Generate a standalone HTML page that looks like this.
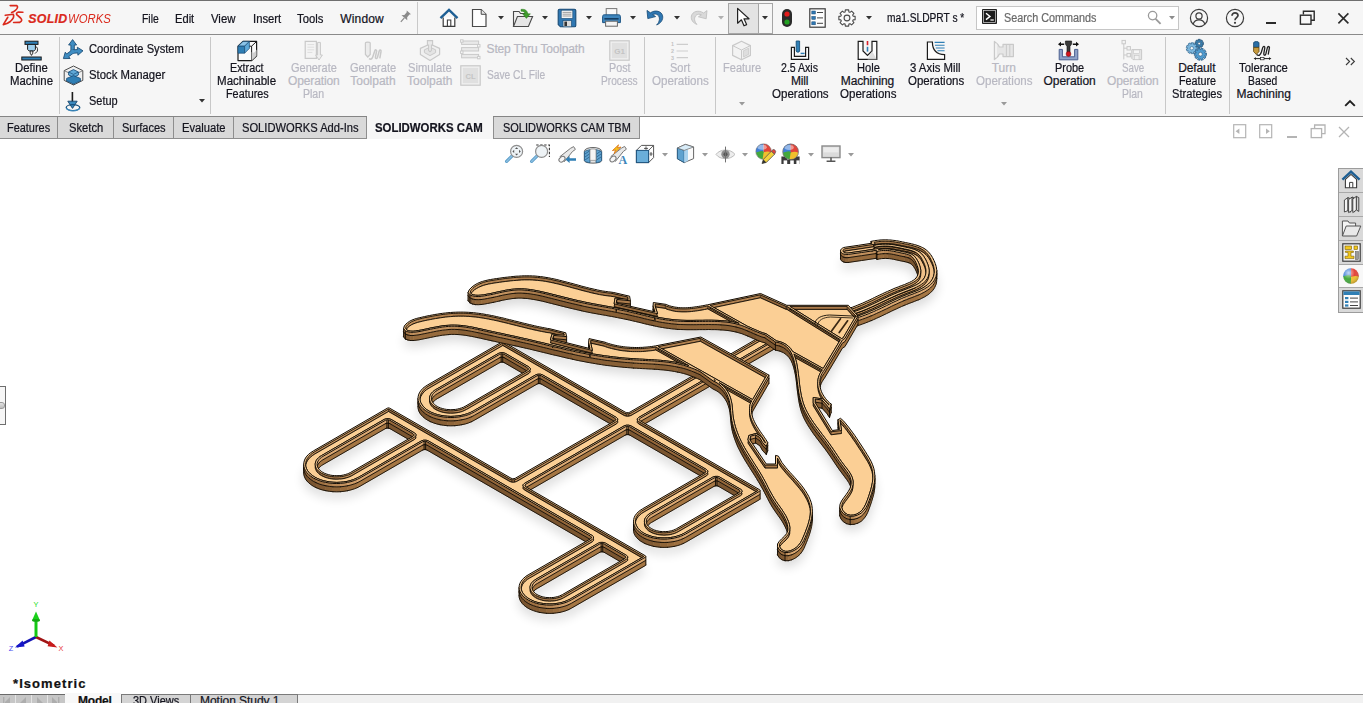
<!DOCTYPE html>
<html><head><meta charset="utf-8"><title>SOLIDWORKS</title><style>
html,body{margin:0;padding:0}
body{width:1363px;height:703px;overflow:hidden;background:#fff;position:relative;font-family:"Liberation Sans",sans-serif}
.a,.t,.vs,.tab{position:absolute}
.t{white-space:nowrap;line-height:1;display:block;-webkit-text-stroke:.22px currentColor}
.vs{width:1px}
svg{display:block;overflow:visible}
#title{position:absolute;left:0;top:0;width:1363px;height:34px;background:#f6f6f6;border-top:1px solid #6f6f6f;box-sizing:border-box}
#ribbon{position:absolute;left:0;top:34px;width:1363px;height:83px;background:#f6f6f6;border-top:1px solid #8a8a8a;border-bottom:1px solid #858585;box-sizing:border-box}
.tab{top:117px;height:21px;background:#d9d9d9;border-right:1px solid #8e8e8e;border-bottom:1px solid #8e8e8e;box-sizing:content-box}
#model{position:absolute;left:0;top:0}
</style></head>
<body>
<svg id="model" width="1363" height="703" viewBox="0 0 1363 703"><defs><filter id="blur" x="-20%" y="-20%" width="140%" height="140%"><feGaussianBlur stdDeviation="6"/></filter></defs>
<path d="M388.9 421.9L389.7 422.2L511.0 492.2L512.5 492.7L514.0 492.7L515.4 492.2L614.9 434.8L615.8 433.9L615.8 433.1L614.9 432.2L541.4 389.8L539.9 389.3L538.4 389.3L537.0 389.8L474.4 425.9L471.5 427.4L468.6 428.6L465.5 429.6L461.8 430.4L458.4 431.0L454.8 431.4L450.9 431.5L447.3 431.4L443.7 431.0L440.0 430.4L436.7 429.6L433.5 428.6L430.3 427.3L427.7 425.9L425.3 424.4L423.0 422.5L421.2 420.6L419.8 418.7L418.8 416.7L418.2 414.5L418.0 412.4L418.2 410.3L418.8 408.1L419.8 406.1L421.2 404.2L423.0 402.2L425.2 400.5L427.7 398.9L501.6 356.2L502.4 355.9L503.3 355.9L504.0 356.2L625.3 426.2L626.8 426.7L628.3 426.7L629.8 426.2L700.1 385.6L700.0 385.5L697.3 384.3L694.5 383.1L691.7 382.0L689.0 381.0L686.1 380.0L683.3 379.2L680.5 378.5L677.6 377.9L674.7 377.3L671.8 376.8L668.9 376.4L666.0 376.0L663.1 375.7L660.2 375.5L657.2 375.2L654.3 375.0L651.3 374.8L648.4 374.7L645.4 374.5L642.5 374.4L639.5 374.2L636.6 374.0L633.6 373.9L630.7 373.6L627.7 373.4L624.8 373.2L621.9 372.9L618.9 372.6L616.0 372.3L613.1 372.0L610.2 371.6L607.2 371.3L604.3 370.9L601.4 370.4L598.5 370.0L595.6 369.5L592.7 369.0L589.8 368.5L586.9 368.0L584.0 367.4L581.1 366.9L578.2 366.3L575.3 365.7L572.5 365.0L569.6 364.4L566.7 363.8L563.8 363.1L560.9 362.4L558.1 361.7L555.2 361.1L552.3 360.4L549.4 359.7L546.6 359.0L543.7 358.3L540.8 357.6L538.0 356.9L535.1 356.2L532.2 355.5L529.4 354.8L526.5 354.2L523.6 353.5L520.7 352.9L517.9 352.2L515.0 351.6L512.1 351.0L509.2 350.3L506.3 349.7L503.5 349.1L500.6 348.5L497.7 347.9L494.8 347.2L491.9 346.6L489.1 346.0L486.2 345.3L483.3 344.7L480.4 344.0L477.5 343.4L474.6 342.8L471.7 342.2L468.8 341.7L465.9 341.2L463.0 340.8L460.1 340.5L457.2 340.3L454.3 340.2L451.3 340.2L448.4 340.4L445.5 340.7L442.5 341.0L439.6 341.5L436.6 342.0L433.6 342.6L430.7 343.2L427.8 343.8L424.8 344.4L421.9 345.0L419.0 345.6L416.1 346.0L413.2 346.3L410.5 346.3L407.9 345.8L405.4 344.9L403.6 342.6L404.3 340.0L405.9 338.1L407.7 336.6L409.7 335.2L411.9 334.1L414.2 333.2L416.7 332.4L419.2 331.8L421.8 331.2L424.4 330.6L427.0 330.0L429.6 329.5L432.2 329.0L434.8 328.5L437.4 328.1L440.0 327.7L442.6 327.3L445.3 327.0L447.9 326.7L450.5 326.5L453.1 326.3L455.7 326.2L458.2 326.1L460.8 326.1L463.4 326.1L466.0 326.2L468.6 326.3L471.1 326.5L473.7 326.7L476.3 327.0L478.8 327.3L481.4 327.7L484.0 328.1L486.5 328.6L489.1 329.0L491.6 329.5L494.1 330.0L496.7 330.6L499.2 331.2L501.8 331.7L504.3 332.3L506.8 333.0L509.4 333.6L511.9 334.2L514.5 334.9L517.0 335.5L519.5 336.1L522.1 336.8L524.6 337.4L527.1 338.0L529.7 338.6L532.2 339.2L534.7 339.8L537.3 340.4L539.8 340.9L542.3 341.4L544.9 341.9L547.4 342.4L550.0 342.8L565.8 346.8L566.6 350.6L553.6 349.4L552.6 353.2L590.0 362.6L588.6 356.5L589.0 352.6L605.0 356.2L606.8 356.9L608.6 357.5L610.4 358.0L612.2 358.5L614.0 359.0L615.9 359.4L617.7 359.8L619.6 360.1L621.5 360.4L623.3 360.7L625.2 360.9L627.1 361.1L629.0 361.2L630.9 361.4L632.8 361.4L634.7 361.5L636.6 361.5L638.5 361.5L640.4 361.4L642.2 361.4L644.1 361.2L646.0 361.1L647.9 360.9L649.8 360.7L651.7 360.5L653.5 360.2L655.4 359.9L700.8 351.0L730.9 367.8L764.4 348.5L761.9 347.8L759.0 346.7L756.1 345.5L753.3 344.3L750.4 343.0L747.6 341.8L744.7 340.6L741.9 339.5L738.9 338.6L736.0 337.8L733.0 337.2L730.0 336.6L727.0 336.2L724.0 335.9L720.9 335.7L717.8 335.5L714.8 335.4L711.7 335.4L708.6 335.3L705.5 335.4L702.4 335.4L699.3 335.4L696.3 335.5L693.2 335.5L690.1 335.5L687.0 335.5L683.9 335.4L680.8 335.3L677.7 335.2L674.7 334.9L671.6 334.6L668.6 334.2L665.6 333.8L662.5 333.3L659.5 332.8L656.5 332.2L653.5 331.5L650.5 330.9L647.5 330.2L644.5 329.5L641.5 328.7L638.5 328.0L635.5 327.3L632.5 326.6L629.5 325.9L626.5 325.2L623.4 324.6L620.4 324.0L617.4 323.4L614.4 322.8L611.4 322.2L608.3 321.7L605.3 321.1L602.3 320.6L599.3 320.1L596.2 319.5L593.2 319.0L590.2 318.4L587.2 317.8L584.2 317.2L581.2 316.5L578.2 315.8L575.2 315.1L572.2 314.4L569.2 313.7L566.2 313.0L563.2 312.2L560.2 311.5L557.2 310.7L554.2 310.0L551.3 309.2L548.3 308.5L545.3 307.7L542.3 307.0L539.2 306.3L536.2 305.7L533.2 305.2L530.2 304.7L527.2 304.3L524.1 304.1L521.1 303.9L518.1 303.9L515.0 304.1L512.0 304.4L508.9 304.9L505.9 305.4L502.8 306.0L499.8 306.7L496.7 307.4L493.6 308.1L490.5 308.7L487.4 309.3L484.3 309.9L481.2 310.3L478.2 310.5L475.2 310.4L472.4 309.8L469.9 308.7L468.1 306.5L469.2 303.9L471.0 301.9L473.0 300.2L475.1 298.7L477.5 297.4L479.9 296.3L482.5 295.4L485.1 294.7L487.9 294.0L490.6 293.5L493.5 293.0L496.3 292.6L499.1 292.2L502.0 291.8L504.8 291.4L507.6 291.1L510.4 290.8L513.1 290.5L515.9 290.2L518.7 290.1L521.4 289.9L524.2 289.8L526.9 289.8L529.7 289.8L532.4 289.9L535.1 290.0L537.8 290.3L540.6 290.6L543.3 290.9L546.0 291.4L548.7 291.8L551.4 292.4L554.1 292.9L556.8 293.5L559.5 294.2L562.2 294.9L564.9 295.6L567.6 296.3L570.3 297.0L573.1 297.7L575.8 298.5L578.5 299.2L581.2 300.0L583.9 300.7L586.6 301.4L589.3 302.1L592.0 302.7L594.7 303.3L597.4 303.9L600.1 304.5L602.8 305.0L605.5 305.4L608.3 305.8L611.0 306.1L613.8 306.5L629.6 310.2L630.4 314.8L616.8 313.4L616.2 317.1L655.0 325.9L653.1 320.0L653.3 316.5L666.2 318.4L667.9 319.2L669.6 319.8L671.3 320.3L673.1 320.7L674.9 321.1L676.7 321.3L678.5 321.6L680.3 321.7L682.1 321.8L683.9 321.8L685.8 321.8L687.6 321.7L689.4 321.5L691.3 321.4L693.1 321.2L694.9 320.9L696.8 320.7L698.6 320.4L700.4 320.1L702.2 319.8L704.0 319.5L705.7 319.1L707.5 318.8L760.6 307.5L786.8 319.3L848.3 319.3L850.6 321.8L852.7 321.1L855.2 320.1L857.7 319.1L860.2 318.1L862.6 317.1L865.0 316.0L867.4 314.9L869.9 313.8L872.3 312.6L874.7 311.4L877.2 310.2L877.2 310.2L879.7 309.0L879.8 309.0L882.3 307.8L882.3 307.8L884.8 306.6L884.9 306.6L887.5 305.4L887.6 305.4L890.2 304.2L890.3 304.2L893.0 303.0L893.1 302.9L895.8 301.8L896.0 301.8L898.8 300.7L898.9 300.6L901.8 299.5L904.6 298.5L907.1 297.4L909.5 296.4L911.5 295.4L913.3 294.3L914.8 293.2L916.0 292.0L917.0 290.5L917.8 288.8L918.3 286.8L918.4 284.5L918.0 282.1L917.2 279.6L916.2 277.1L915.0 274.7L913.7 272.7L912.4 271.1L911.2 270.1L910.0 269.3L908.6 268.7L906.8 268.2L904.6 267.6L901.9 267.1L899.1 266.5L899.0 266.4L896.3 265.9L893.7 265.3L891.4 264.9L889.3 264.6L887.3 264.5L885.3 264.4L883.4 264.5L881.5 264.6L879.5 264.9L877.0 265.4L876.3 264.3L861.7 266.5L861.6 266.5L848.6 268.4L846.9 268.5L845.2 268.4L843.7 268.0L842.3 267.4L841.3 266.6L840.7 265.7L840.5 264.7L840.8 263.8L841.4 262.9L842.5 262.1L843.8 261.5L845.4 261.2L858.4 259.3L872.0 257.2L871.0 255.4L873.8 254.8L874.6 254.7L877.4 254.3L878.3 254.2L881.1 253.9L882.0 253.9L884.9 253.8L885.8 253.8L888.6 253.9L889.5 253.9L892.3 254.2L893.1 254.3L895.9 254.6L896.5 254.7L899.3 255.2L899.6 255.3L902.4 255.9L902.6 255.9L905.4 256.5L908.2 257.1L908.3 257.1L911.1 257.7L911.5 257.8L914.4 258.5L915.2 258.7L917.9 259.6L919.0 260.0L921.5 261.1L922.7 261.6L925.0 263.0L926.1 263.8L928.1 265.6L928.8 266.2L930.5 268.4L930.9 268.9L932.4 271.3L932.6 271.6L933.9 274.3L934.0 274.5L935.2 277.3L935.3 277.6L936.2 280.5L936.3 280.9L936.7 283.8L936.8 284.4L936.6 287.3L936.6 287.9L936.0 290.5L935.7 291.2L934.6 293.6L934.3 294.2L932.8 296.3L932.2 297.0L930.4 298.8L929.7 299.4L927.6 301.0L926.9 301.4L924.5 302.9L923.9 303.2L921.3 304.5L920.8 304.8L918.1 306.0L917.7 306.1L914.9 307.2L914.7 307.3L911.9 308.4L909.1 309.4L906.5 310.5L903.9 311.5L901.4 312.6L898.9 313.7L896.4 314.9L893.9 316.0L891.4 317.2L889.0 318.4L886.5 319.6L886.5 319.6L884.0 320.8L884.0 320.8L881.5 322.0L881.5 322.0L879.0 323.2L878.9 323.2L876.4 324.3L876.3 324.4L873.8 325.5L873.6 325.6L871.1 326.7L870.9 326.7L868.3 327.8L868.1 327.9L865.5 328.9L865.3 329.0L862.5 330.0L862.3 330.1L859.5 331.1L856.8 332.0L844.9 352.4L842.3 354.1L824.4 384.0L823.1 385.8L822.0 387.6L821.1 389.5L820.4 391.5L820.0 393.4L819.8 395.4L819.7 397.4L819.9 399.4L820.2 401.3L820.7 403.3L821.3 405.2L822.1 407.1L823.1 408.9L824.2 410.6L825.4 412.3L826.7 413.9L828.1 415.4L829.6 416.8L831.2 418.1L829.5 423.2L826.6 419.0L822.0 414.0L815.2 413.0L815.2 416.6L832.3 444.5L839.4 443.6L838.0 433.7L840.5 432.3L843.7 435.1L846.1 438.0L848.5 441.0L850.7 443.9L852.9 446.9L855.0 449.8L857.0 452.8L859.0 455.9L861.1 459.0L863.1 462.1L865.2 465.3L867.2 468.6L869.2 471.9L871.1 475.3L872.6 478.8L873.8 482.3L874.5 485.8L874.8 489.3L874.8 492.9L874.4 496.5L873.7 500.1L872.7 503.7L871.6 507.3L870.4 511.0L869.1 514.6L867.7 518.2L866.0 521.6L863.8 524.6L861.1 527.2L857.7 529.0L854.0 530.1L850.2 530.4L846.6 529.5L843.4 527.6L841.0 524.8L839.7 521.5L840.0 518.3L841.5 515.0L843.7 511.8L846.1 508.6L848.4 505.3L850.2 502.0L851.1 498.5L851.2 495.1L850.4 491.7L848.8 488.4L846.6 485.2L844.2 482.0L841.8 478.8L839.5 475.7L837.4 472.7L835.3 469.6L833.3 466.6L831.3 463.6L829.3 460.7L827.2 457.7L825.0 454.7L822.7 451.7L820.4 448.7L818.1 445.7L815.8 442.7L813.5 439.6L811.4 436.5L809.3 433.3L807.3 430.1L805.5 426.9L803.8 423.6L802.4 420.2L801.2 416.8L800.2 413.3L799.4 409.7L798.7 406.1L798.2 402.5L797.7 398.8L797.2 395.1L796.8 391.3L796.4 387.6L795.9 383.9L795.3 380.2L794.5 376.5L793.6 372.9L792.4 369.4L790.9 366.1L789.0 363.2L786.5 360.6L783.5 358.5L779.8 356.9L775.4 355.9L774.0 354.9L741.4 373.7L768.9 389.1L752.8 416.8L752.1 418.7L751.7 420.6L751.5 422.6L751.4 424.5L751.6 426.3L751.9 428.2L752.3 430.0L752.8 431.8L753.5 433.6L754.3 435.3L755.1 437.1L756.1 438.8L757.1 440.5L758.1 442.1L759.2 443.8L760.3 445.4L761.4 447.1L762.6 448.7L763.7 450.3L764.7 451.9L765.8 453.4L766.8 455.0L767.7 456.6L766.3 460.2L762.7 456.6L759.9 451.6L755.6 448.8L750.6 450.2L749.9 453.8L766.3 478.0L775.5 478.0L775.5 469.4L778.4 470.1L781.9 476.5L783.8 478.9L785.7 481.3L787.8 483.8L790.0 486.3L792.3 488.8L794.6 491.3L796.9 493.9L799.2 496.5L801.4 499.2L803.5 502.0L805.4 504.7L807.2 507.6L808.8 510.5L810.1 513.4L811.2 516.4L811.9 519.5L812.3 522.6L812.4 525.8L812.1 529.0L811.6 532.3L810.8 535.6L809.9 538.8L808.8 542.1L807.6 545.2L806.4 548.4L805.1 551.4L803.8 554.4L802.2 557.2L800.3 559.8L797.8 562.1L794.9 564.1L791.7 565.6L788.3 566.5L785.0 566.5L781.9 565.5L779.2 563.5L777.5 560.7L777.5 558.0L779.2 555.4L781.6 552.9L784.4 550.3L786.6 547.6L787.8 544.7L787.9 541.7L787.4 538.6L786.5 535.6L785.2 532.7L783.7 529.8L782.0 526.9L780.1 524.1L778.2 521.4L776.2 518.6L774.3 515.8L772.4 513.0L770.7 510.1L769.1 507.2L767.6 504.3L766.1 501.4L764.6 498.5L763.1 495.6L761.5 492.8L759.9 489.9L758.2 487.1L756.5 484.3L754.8 481.5L753.0 478.7L751.2 475.9L749.4 473.1L747.7 470.3L745.9 467.5L744.2 464.6L742.6 461.8L741.0 458.9L739.5 455.9L738.0 453.0L736.7 450.0L735.5 446.9L734.4 443.9L733.4 440.7L732.5 437.6L731.8 434.4L731.3 431.1L730.9 427.8L730.6 424.5L730.3 421.2L729.9 417.9L729.3 414.7L728.3 411.5L727.1 408.4L725.5 405.5L723.6 402.8L721.4 400.3L718.9 398.1L716.1 396.3L713.0 394.8L709.4 392.2L640.2 432.2L639.3 433.1L639.3 433.9L640.2 434.8L759.7 503.8L760.1 504.2L760.1 504.8L759.7 505.2L685.8 547.9L683.2 549.2L680.4 550.4L677.2 551.4L674.1 552.1L670.9 552.6L667.4 553.0L664.1 553.1L660.8 553.0L657.2 552.6L653.8 552.1L650.8 551.3L647.9 550.4L644.9 549.2L642.4 547.9L640.2 546.5L638.1 544.8L636.5 543.1L635.2 541.3L634.2 539.3L633.7 537.4L633.5 535.5L633.7 533.4L634.2 531.5L635.1 529.6L636.5 527.7L638.1 526.0L640.1 524.4L642.4 522.9L705.0 486.8L705.8 485.9L705.8 485.1L705.0 484.2L629.8 440.8L628.3 440.3L626.8 440.3L625.3 440.8L525.8 498.2L525.0 499.1L525.0 499.9L525.8 500.8L645.4 569.8L645.8 570.2L645.8 570.8L645.4 571.2L571.4 613.9L568.8 615.2L566.0 616.4L563.0 617.3L559.8 618.1L556.4 618.6L553.1 619.0L549.9 619.1L546.4 619.0L543.0 618.6L539.6 618.1L536.4 617.3L533.4 616.3L530.6 615.2L528.2 614.0L525.8 612.4L523.8 610.8L522.2 609.1L520.8 607.2L519.9 605.4L519.3 603.5L519.1 601.5L519.3 599.4L519.9 597.4L520.9 595.5L522.2 593.7L523.9 592.0L525.9 590.3L528.1 588.9L590.6 552.8L591.5 551.9L591.5 551.1L590.6 550.2L427.1 455.8L425.6 455.3L424.1 455.3L422.6 455.8L360.1 491.9L357.4 493.3L354.4 494.5L350.9 495.6L347.6 496.4L344.1 497.0L340.4 497.4L336.8 497.5L332.9 497.4L329.3 497.0L325.8 496.4L322.3 495.6L319.1 494.6L316.1 493.3L313.4 492.0L310.8 490.2L308.7 488.5L306.9 486.7L305.5 484.7L304.5 482.6L303.9 480.6L303.7 478.5L303.9 476.3L304.5 474.1L305.5 472.0L306.9 470.1L308.6 468.3L310.8 466.6L313.4 464.9L387.3 422.2L388.1 421.9ZM534.8 595.8L533.7 597.1L533.1 597.9L532.5 599.0L532.1 600.4L532.0 601.5L532.1 602.4L532.5 603.8L533.1 604.9L533.7 605.7L534.8 607.0L535.7 607.7L537.1 608.6L538.9 609.5L540.5 610.1L542.2 610.7L543.7 611.0L545.6 611.4L548.0 611.6L549.5 611.6L551.5 611.6L553.9 611.4L555.8 611.0L557.3 610.7L559.4 610.0L561.0 609.3L562.4 608.6L624.9 572.5L625.7 571.7L625.7 570.8L624.9 570.0L604.2 558.0L602.7 557.5L601.2 557.5L599.7 558.0L537.3 594.1L536.0 594.9ZM648.0 531.1L647.4 531.9L646.7 533.2L646.5 534.1L646.3 535.3L646.5 536.7L646.7 537.6L647.2 538.7L648.2 540.0L648.9 540.7L650.1 541.7L651.7 542.7L653.2 543.5L654.4 544.0L656.6 544.7L658.0 545.0L659.9 545.4L662.3 545.6L663.9 545.6L665.8 545.6L668.2 545.4L670.1 545.0L671.6 544.7L673.7 544.0L675.3 543.3L676.7 542.6L739.2 506.5L740.0 505.7L740.0 504.8L739.2 504.0L718.5 492.0L717.0 491.5L715.5 491.5L714.1 492.0L651.6 528.1L650.3 528.9L648.9 530.1ZM433.3 407.6L432.6 408.5L431.9 410.0L431.5 411.3L431.4 412.3L431.6 413.8L432.0 415.0L432.5 416.0L433.5 417.4L434.6 418.5L435.6 419.4L437.3 420.5L438.7 421.2L440.4 421.9L442.7 422.6L444.4 423.0L446.5 423.4L449.0 423.6L450.8 423.7L453.0 423.6L455.6 423.4L457.7 423.0L459.3 422.6L461.6 421.9L463.4 421.2L465.0 420.4L527.4 384.3L528.3 383.4L528.3 382.6L527.4 381.7L504.2 368.3L502.7 367.8L501.2 367.8L499.7 368.3L437.2 404.4L435.8 405.3L434.3 406.5ZM386.9 433.8L385.4 434.3L322.9 470.4L321.5 471.3L320.2 472.3L319.0 473.6L318.2 474.8L317.6 476.0L317.2 477.3L317.1 478.5L317.3 479.8L317.6 480.8L318.2 482.0L319.0 483.2L320.2 484.5L321.5 485.5L322.7 486.3L324.3 487.2L326.1 487.9L328.4 488.6L330.4 489.1L332.1 489.4L334.7 489.6L336.9 489.7L339.1 489.6L340.9 489.5L343.4 489.0L345.4 488.5L347.3 487.9L348.8 487.3L350.6 486.4L413.1 450.3L414.0 449.4L414.0 448.6L413.1 447.7L389.9 434.3L388.4 433.8Z" fill="#000" opacity=".16" filter="url(#blur)" fill-rule="evenodd"/>
<path d="M303.7 464.5L303.9 466.6L304.5 468.6L305.5 470.7L306.9 472.7L308.7 474.5L310.8 476.2L313.4 478.0L316.1 479.3L316.1 482.7L313.4 481.4L310.8 479.6L308.7 477.9L306.9 476.1L305.5 474.1L304.5 472.0L303.9 470.0L303.7 467.9ZM427.1 441.8L590.6 536.2L591.5 537.1L591.5 540.5L590.6 539.6L427.1 445.2ZM519.1 587.5L519.3 589.5L519.9 591.4L520.8 593.2L522.2 595.1L523.8 596.8L525.8 598.4L528.2 600.0L530.6 601.2L530.6 604.6L528.2 603.4L525.8 601.8L523.8 600.2L522.2 598.5L520.8 596.6L519.9 594.8L519.3 592.9L519.1 590.9ZM629.8 426.8L705.0 470.2L705.8 471.1L705.8 474.5L705.0 473.6L629.8 430.2ZM633.5 521.5L633.7 523.4L634.2 525.3L635.2 527.3L636.5 529.1L638.1 530.8L640.2 532.5L642.4 533.9L644.9 535.2L644.9 538.6L642.4 537.3L640.2 535.9L638.1 534.2L636.5 532.5L635.2 530.7L634.2 528.7L633.7 526.8L633.5 524.9ZM418.0 398.4L418.2 400.5L418.8 402.7L419.8 404.7L421.2 406.6L423.0 408.5L425.3 410.4L427.7 411.9L430.3 413.3L430.3 416.7L427.7 415.3L425.3 413.8L423.0 411.9L421.2 410.0L419.8 408.1L418.8 406.1L418.2 403.9L418.0 401.8ZM541.4 375.8L614.9 418.2L615.8 419.1L615.8 422.5L614.9 421.6L541.4 379.2ZM604.2 544.0L624.9 556.0L625.7 556.8L625.7 560.2L624.9 559.4L604.2 547.4ZM718.5 478.0L739.2 490.0L740.0 490.8L740.0 494.2L739.2 493.4L718.5 481.4ZM504.2 354.3L527.4 367.7L528.3 368.6L528.3 372.0L527.4 371.1L504.2 357.7ZM389.9 420.3L413.1 433.7L414.0 434.6L414.0 438.0L413.1 437.1L389.9 423.7Z" fill="#94673a" stroke="#94673a" stroke-width=".6"/><path d="M303.7 467.9L303.9 470.0L304.5 472.0L305.5 474.1L306.9 476.1L308.7 477.9L310.8 479.6L313.4 481.4L316.1 482.7L316.1 487.6L313.4 486.3L310.8 484.5L308.7 482.8L306.9 481.0L305.5 479.0L304.5 476.9L303.9 474.9L303.7 472.8ZM427.1 445.2L590.6 539.6L591.5 540.5L591.5 545.4L590.6 544.5L427.1 450.1ZM519.1 590.9L519.3 592.9L519.9 594.8L520.8 596.6L522.2 598.5L523.8 600.2L525.8 601.8L528.2 603.4L530.6 604.6L530.6 609.5L528.2 608.3L525.8 606.7L523.8 605.1L522.2 603.4L520.8 601.5L519.9 599.7L519.3 597.8L519.1 595.8ZM629.8 430.2L705.0 473.6L705.8 474.5L705.8 479.4L705.0 478.5L629.8 435.1ZM633.5 524.9L633.7 526.8L634.2 528.7L635.2 530.7L636.5 532.5L638.1 534.2L640.2 535.9L642.4 537.3L644.9 538.6L644.9 543.5L642.4 542.2L640.2 540.8L638.1 539.1L636.5 537.4L635.2 535.6L634.2 533.6L633.7 531.7L633.5 529.8ZM418.0 401.8L418.2 403.9L418.8 406.1L419.8 408.1L421.2 410.0L423.0 411.9L425.3 413.8L427.7 415.3L430.3 416.7L430.3 421.6L427.7 420.2L425.3 418.7L423.0 416.8L421.2 414.9L419.8 413.0L418.8 411.0L418.2 408.8L418.0 406.7ZM541.4 379.2L614.9 421.6L615.8 422.5L615.8 427.4L614.9 426.5L541.4 384.1ZM604.2 547.4L624.9 559.4L625.7 560.2L625.7 565.1L624.9 564.3L604.2 552.3ZM718.5 481.4L739.2 493.4L740.0 494.2L740.0 499.1L739.2 498.3L718.5 486.3ZM504.2 357.7L527.4 371.1L528.3 372.0L528.3 376.9L527.4 376.0L504.2 362.6ZM389.9 423.7L413.1 437.1L414.0 438.0L414.0 442.9L413.1 442.0L389.9 428.6Z" fill="#7a5530" stroke="#7a5530" stroke-width=".6"/><path d="M316.1 479.3L319.1 480.6L322.3 481.6L325.8 482.4L325.8 485.8L322.3 485.0L319.1 484.0L316.1 482.7ZM425.6 441.3L427.1 441.8L427.1 445.2L425.6 444.7ZM530.6 601.2L533.4 602.3L536.4 603.3L539.6 604.1L539.6 607.5L536.4 606.7L533.4 605.7L530.6 604.6ZM628.3 426.3L629.8 426.8L629.8 430.2L628.3 429.7ZM644.9 535.2L647.9 536.4L650.8 537.3L653.8 538.1L653.8 541.5L650.8 540.7L647.9 539.8L644.9 538.6ZM430.3 413.3L433.5 414.6L436.7 415.6L440.0 416.4L440.0 419.8L436.7 419.0L433.5 418.0L430.3 416.7ZM539.9 375.3L541.4 375.8L541.4 379.2L539.9 378.7ZM602.7 543.5L604.2 544.0L604.2 547.4L602.7 546.9ZM717.0 477.5L718.5 478.0L718.5 481.4L717.0 480.9ZM502.7 353.8L504.2 354.3L504.2 357.7L502.7 357.2ZM388.4 419.8L389.9 420.3L389.9 423.7L388.4 423.2Z" fill="#a07243" stroke="#a07243" stroke-width=".6"/><path d="M316.1 482.7L319.1 484.0L322.3 485.0L325.8 485.8L325.8 490.7L322.3 489.9L319.1 488.9L316.1 487.6ZM425.6 444.7L427.1 445.2L427.1 450.1L425.6 449.6ZM530.6 604.6L533.4 605.7L536.4 606.7L539.6 607.5L539.6 612.4L536.4 611.6L533.4 610.6L530.6 609.5ZM628.3 429.7L629.8 430.2L629.8 435.1L628.3 434.6ZM644.9 538.6L647.9 539.8L650.8 540.7L653.8 541.5L653.8 546.4L650.8 545.6L647.9 544.7L644.9 543.5ZM430.3 416.7L433.5 418.0L436.7 419.0L440.0 419.8L440.0 424.7L436.7 423.9L433.5 422.9L430.3 421.6ZM539.9 378.7L541.4 379.2L541.4 384.1L539.9 383.6ZM602.7 546.9L604.2 547.4L604.2 552.3L602.7 551.8ZM717.0 480.9L718.5 481.4L718.5 486.3L717.0 485.8ZM502.7 357.2L504.2 357.7L504.2 362.6L502.7 362.1ZM388.4 423.2L389.9 423.7L389.9 428.6L388.4 428.1Z" fill="#815a33" stroke="#815a33" stroke-width=".6"/><path d="M325.8 482.4L329.3 483.0L332.9 483.4L332.9 486.8L329.3 486.4L325.8 485.8ZM539.6 604.1L543.0 604.6L546.4 605.0L546.4 608.4L543.0 608.0L539.6 607.5ZM653.8 538.1L657.2 538.6L660.8 539.0L660.8 542.4L657.2 542.0L653.8 541.5ZM440.0 416.4L443.7 417.0L447.3 417.4L447.3 420.8L443.7 420.4L440.0 419.8Z" fill="#ac7d4d" stroke="#ac7d4d" stroke-width=".6"/><path d="M325.8 485.8L329.3 486.4L332.9 486.8L332.9 491.7L329.3 491.3L325.8 490.7ZM539.6 607.5L543.0 608.0L546.4 608.4L546.4 613.3L543.0 612.9L539.6 612.4ZM653.8 541.5L657.2 542.0L660.8 542.4L660.8 547.3L657.2 546.9L653.8 546.4ZM440.0 419.8L443.7 420.4L447.3 420.8L447.3 425.7L443.7 425.3L440.0 424.7Z" fill="#886036" stroke="#886036" stroke-width=".6"/><path d="M332.9 483.4L336.8 483.5L340.4 483.4L340.4 486.8L336.8 486.9L332.9 486.8ZM424.1 441.3L425.6 441.3L425.6 444.7L424.1 444.7ZM546.4 605.0L549.9 605.1L553.1 605.0L553.1 608.4L549.9 608.5L546.4 608.4ZM626.8 426.3L628.3 426.3L628.3 429.7L626.8 429.7ZM660.8 539.0L664.1 539.1L667.4 539.0L667.4 542.4L664.1 542.5L660.8 542.4ZM447.3 417.4L450.9 417.5L454.8 417.4L454.8 420.8L450.9 420.9L447.3 420.8ZM538.4 375.3L539.9 375.3L539.9 378.7L538.4 378.7ZM601.2 543.5L602.7 543.5L602.7 546.9L601.2 546.9ZM715.5 477.5L717.0 477.5L717.0 480.9L715.5 480.9ZM501.2 353.8L502.7 353.8L502.7 357.2L501.2 357.2ZM386.9 419.8L388.4 419.8L388.4 423.2L386.9 423.2Z" fill="#b88856" stroke="#b88856" stroke-width=".6"/><path d="M332.9 486.8L336.8 486.9L340.4 486.8L340.4 491.7L336.8 491.8L332.9 491.7ZM424.1 444.7L425.6 444.7L425.6 449.6L424.1 449.6ZM546.4 608.4L549.9 608.5L553.1 608.4L553.1 613.3L549.9 613.4L546.4 613.3ZM626.8 429.7L628.3 429.7L628.3 434.6L626.8 434.6ZM660.8 542.4L664.1 542.5L667.4 542.4L667.4 547.3L664.1 547.4L660.8 547.3ZM447.3 420.8L450.9 420.9L454.8 420.8L454.8 425.7L450.9 425.8L447.3 425.7ZM538.4 378.7L539.9 378.7L539.9 383.6L538.4 383.6ZM601.2 546.9L602.7 546.9L602.7 551.8L601.2 551.8ZM715.5 480.9L717.0 480.9L717.0 485.8L715.5 485.8ZM501.2 357.2L502.7 357.2L502.7 362.1L501.2 362.1ZM386.9 423.2L388.4 423.2L388.4 428.1L386.9 428.1Z" fill="#90663a" stroke="#90663a" stroke-width=".6"/><path d="M340.4 483.4L344.1 483.0L347.6 482.4L347.6 485.8L344.1 486.4L340.4 486.8ZM553.1 605.0L556.4 604.6L559.8 604.1L559.8 607.5L556.4 608.0L553.1 608.4ZM667.4 539.0L670.9 538.6L674.1 538.1L674.1 541.5L670.9 542.0L667.4 542.4ZM454.8 417.4L458.4 417.0L461.8 416.4L461.8 419.8L458.4 420.4L454.8 420.8Z" fill="#c3925f" stroke="#c3925f" stroke-width=".6"/><path d="M340.4 486.8L344.1 486.4L347.6 485.8L347.6 490.7L344.1 491.3L340.4 491.7ZM553.1 608.4L556.4 608.0L559.8 607.5L559.8 612.4L556.4 612.9L553.1 613.3ZM667.4 542.4L670.9 542.0L674.1 541.5L674.1 546.4L670.9 546.9L667.4 547.3ZM454.8 420.8L458.4 420.4L461.8 419.8L461.8 424.7L458.4 425.3L454.8 425.7Z" fill="#976b3d" stroke="#976b3d" stroke-width=".6"/><path d="M347.6 482.4L350.9 481.6L354.4 480.5L357.4 479.3L357.4 482.7L354.4 483.9L350.9 485.0L347.6 485.8ZM422.6 441.8L424.1 441.3L424.1 444.7L422.6 445.2ZM559.8 604.1L563.0 603.3L566.0 602.4L568.8 601.2L568.8 604.6L566.0 605.8L563.0 606.7L559.8 607.5ZM625.3 426.8L626.8 426.3L626.8 429.7L625.3 430.2ZM674.1 538.1L677.2 537.4L680.4 536.4L683.2 535.2L683.2 538.6L680.4 539.8L677.2 540.8L674.1 541.5ZM461.8 416.4L465.5 415.6L468.6 414.6L471.5 413.4L471.5 416.8L468.6 418.0L465.5 419.0L461.8 419.8ZM537.0 375.8L538.4 375.3L538.4 378.7L537.0 379.2ZM599.7 544.0L601.2 543.5L601.2 546.9L599.7 547.4ZM714.1 478.0L715.5 477.5L715.5 480.9L714.1 481.4ZM499.7 354.3L501.2 353.8L501.2 357.2L499.7 357.7ZM385.4 420.3L386.9 419.8L386.9 423.2L385.4 423.7Z" fill="#cf9d69" stroke="#cf9d69" stroke-width=".6"/><path d="M347.6 485.8L350.9 485.0L354.4 483.9L357.4 482.7L357.4 487.6L354.4 488.8L350.9 489.9L347.6 490.7ZM422.6 445.2L424.1 444.7L424.1 449.6L422.6 450.1ZM559.8 607.5L563.0 606.7L566.0 605.8L568.8 604.6L568.8 609.5L566.0 610.7L563.0 611.6L559.8 612.4ZM625.3 430.2L626.8 429.7L626.8 434.6L625.3 435.1ZM674.1 541.5L677.2 540.8L680.4 539.8L683.2 538.6L683.2 543.5L680.4 544.7L677.2 545.7L674.1 546.4ZM461.8 419.8L465.5 419.0L468.6 418.0L471.5 416.8L471.5 421.7L468.6 422.9L465.5 423.9L461.8 424.7ZM537.0 379.2L538.4 378.7L538.4 383.6L537.0 384.1ZM599.7 547.4L601.2 546.9L601.2 551.8L599.7 552.3ZM714.1 481.4L715.5 480.9L715.5 485.8L714.1 486.3ZM499.7 357.7L501.2 357.2L501.2 362.1L499.7 362.6ZM385.4 423.7L386.9 423.2L386.9 428.1L385.4 428.6Z" fill="#9e7040" stroke="#9e7040" stroke-width=".6"/><path d="M357.4 479.3L360.1 477.9L422.6 441.8L422.6 445.2L360.1 481.3L357.4 482.7ZM568.8 601.2L571.4 599.9L645.4 557.2L645.8 556.8L645.8 560.2L645.4 560.6L571.4 603.3L568.8 604.6ZM525.0 485.1L525.8 484.2L625.3 426.8L625.3 430.2L525.8 487.6L525.0 488.5ZM683.2 535.2L685.8 533.9L759.7 491.2L760.1 490.8L760.1 494.2L759.7 494.6L685.8 537.3L683.2 538.6ZM639.3 419.1L640.2 418.2L786.5 333.7L787.0 333.3L787.0 336.7L786.5 337.1L640.2 421.6L639.3 422.5ZM471.5 413.4L474.4 411.9L537.0 375.8L537.0 379.2L474.4 415.3L471.5 416.8ZM532.0 587.5L532.1 586.4L532.5 585.0L533.1 583.9L533.7 583.1L534.8 581.8L536.0 580.9L537.3 580.1L599.7 544.0L599.7 547.4L537.3 583.5L536.0 584.3L534.8 585.2L533.7 586.5L533.1 587.3L532.5 588.4L532.1 589.8L532.0 590.9ZM646.3 521.3L646.5 520.1L646.7 519.2L647.4 517.9L648.0 517.1L648.9 516.1L650.3 514.9L651.6 514.1L714.1 478.0L714.1 481.4L651.6 517.5L650.3 518.3L648.9 519.5L648.0 520.5L647.4 521.3L646.7 522.6L646.5 523.5L646.3 524.7ZM431.4 398.3L431.5 397.3L431.9 396.0L432.6 394.5L433.3 393.6L434.3 392.5L435.8 391.3L437.2 390.4L499.7 354.3L499.7 357.7L437.2 393.8L435.8 394.7L434.3 395.9L433.3 397.0L432.6 397.9L431.9 399.4L431.5 400.7L431.4 401.7ZM317.1 464.5L317.2 463.3L317.6 462.0L318.2 460.8L319.0 459.6L320.2 458.3L321.5 457.3L322.9 456.4L385.4 420.3L385.4 423.7L322.9 459.8L321.5 460.7L320.2 461.7L319.0 463.0L318.2 464.2L317.6 465.4L317.2 466.7L317.1 467.9Z" fill="#dba872" stroke="#dba872" stroke-width=".6"/><path d="M357.4 482.7L360.1 481.3L422.6 445.2L422.6 450.1L360.1 486.2L357.4 487.6ZM568.8 604.6L571.4 603.3L645.4 560.6L645.8 560.2L645.8 565.1L645.4 565.5L571.4 608.2L568.8 609.5ZM525.0 488.5L525.8 487.6L625.3 430.2L625.3 435.1L525.8 492.5L525.0 493.4ZM683.2 538.6L685.8 537.3L759.7 494.6L760.1 494.2L760.1 499.1L759.7 499.5L685.8 542.2L683.2 543.5ZM639.3 422.5L640.2 421.6L786.5 337.1L787.0 336.7L787.0 341.6L786.5 342.0L640.2 426.5L639.3 427.4ZM471.5 416.8L474.4 415.3L537.0 379.2L537.0 384.1L474.4 420.2L471.5 421.7ZM532.0 590.9L532.1 589.8L532.5 588.4L533.1 587.3L533.7 586.5L534.8 585.2L536.0 584.3L537.3 583.5L599.7 547.4L599.7 552.3L537.3 588.4L536.0 589.2L534.8 590.1L533.7 591.4L533.1 592.2L532.5 593.3L532.1 594.7L532.0 595.8ZM646.3 524.7L646.5 523.5L646.7 522.6L647.4 521.3L648.0 520.5L648.9 519.5L650.3 518.3L651.6 517.5L714.1 481.4L714.1 486.3L651.6 522.4L650.3 523.2L648.9 524.4L648.0 525.4L647.4 526.2L646.7 527.5L646.5 528.4L646.3 529.6ZM431.4 401.7L431.5 400.7L431.9 399.4L432.6 397.9L433.3 397.0L434.3 395.9L435.8 394.7L437.2 393.8L499.7 357.7L499.7 362.6L437.2 398.7L435.8 399.6L434.3 400.8L433.3 401.9L432.6 402.8L431.9 404.3L431.5 405.6L431.4 406.6ZM317.1 467.9L317.2 466.7L317.6 465.4L318.2 464.2L319.0 463.0L320.2 461.7L321.5 460.7L322.9 459.8L385.4 423.7L385.4 428.6L322.9 464.7L321.5 465.6L320.2 466.6L319.0 467.9L318.2 469.1L317.6 470.3L317.2 471.6L317.1 472.8Z" fill="#a57643" stroke="#a57643" stroke-width=".6"/><path d="M303.7 467.9L303.9 470.0L304.5 472.0L305.5 474.1L306.9 476.1L308.7 477.9L310.8 479.6L313.4 481.4L316.1 482.7M303.7 472.8L303.9 474.9L304.5 476.9L305.5 479.0L306.9 481.0L308.7 482.8L310.8 484.5L313.4 486.3L316.1 487.6M316.1 482.7L319.1 484.0L322.3 485.0L325.8 485.8M316.1 487.6L319.1 488.9L322.3 489.9L325.8 490.7M325.8 485.8L329.3 486.4L332.9 486.8M325.8 490.7L329.3 491.3L332.9 491.7M332.9 486.8L336.8 486.9L340.4 486.8M332.9 491.7L336.8 491.8L340.4 491.7M340.4 486.8L344.1 486.4L347.6 485.8M340.4 491.7L344.1 491.3L347.6 490.7M347.6 485.8L350.9 485.0L354.4 483.9L357.4 482.7M347.6 490.7L350.9 489.9L354.4 488.8L357.4 487.6M357.4 482.7L360.1 481.3L422.6 445.2M357.4 487.6L360.1 486.2L422.6 450.1M422.6 445.2L424.1 444.7M422.6 450.1L424.1 449.6M424.1 444.7L425.6 444.7M424.1 449.6L425.6 449.6M425.6 444.7L427.1 445.2M425.6 449.6L427.1 450.1M427.1 445.2L590.6 539.6L591.5 540.5M427.1 450.1L590.6 544.5L591.5 545.4M519.1 590.9L519.3 592.9L519.9 594.8L520.8 596.6L522.2 598.5L523.8 600.2L525.8 601.8L528.2 603.4L530.6 604.6M519.1 595.8L519.3 597.8L519.9 599.7L520.8 601.5L522.2 603.4L523.8 605.1L525.8 606.7L528.2 608.3L530.6 609.5M530.6 604.6L533.4 605.7L536.4 606.7L539.6 607.5M530.6 609.5L533.4 610.6L536.4 611.6L539.6 612.4M539.6 607.5L543.0 608.0L546.4 608.4M539.6 612.4L543.0 612.9L546.4 613.3M546.4 608.4L549.9 608.5L553.1 608.4M546.4 613.3L549.9 613.4L553.1 613.3M553.1 608.4L556.4 608.0L559.8 607.5M553.1 613.3L556.4 612.9L559.8 612.4M559.8 607.5L563.0 606.7L566.0 605.8L568.8 604.6M559.8 612.4L563.0 611.6L566.0 610.7L568.8 609.5M568.8 604.6L571.4 603.3L645.4 560.6L645.8 560.2M568.8 609.5L571.4 608.2L645.4 565.5L645.8 565.1M525.0 488.5L525.8 487.6L625.3 430.2M525.0 493.4L525.8 492.5L625.3 435.1M625.3 430.2L626.8 429.7M625.3 435.1L626.8 434.6M626.8 429.7L628.3 429.7M626.8 434.6L628.3 434.6M628.3 429.7L629.8 430.2M628.3 434.6L629.8 435.1M629.8 430.2L705.0 473.6L705.8 474.5M629.8 435.1L705.0 478.5L705.8 479.4M633.5 524.9L633.7 526.8L634.2 528.7L635.2 530.7L636.5 532.5L638.1 534.2L640.2 535.9L642.4 537.3L644.9 538.6M633.5 529.8L633.7 531.7L634.2 533.6L635.2 535.6L636.5 537.4L638.1 539.1L640.2 540.8L642.4 542.2L644.9 543.5M644.9 538.6L647.9 539.8L650.8 540.7L653.8 541.5M644.9 543.5L647.9 544.7L650.8 545.6L653.8 546.4M653.8 541.5L657.2 542.0L660.8 542.4M653.8 546.4L657.2 546.9L660.8 547.3M660.8 542.4L664.1 542.5L667.4 542.4M660.8 547.3L664.1 547.4L667.4 547.3M667.4 542.4L670.9 542.0L674.1 541.5M667.4 547.3L670.9 546.9L674.1 546.4M674.1 541.5L677.2 540.8L680.4 539.8L683.2 538.6M674.1 546.4L677.2 545.7L680.4 544.7L683.2 543.5M683.2 538.6L685.8 537.3L759.7 494.6L760.1 494.2M683.2 543.5L685.8 542.2L759.7 499.5L760.1 499.1M639.3 422.5L640.2 421.6L786.5 337.1L787.0 336.7M639.3 427.4L640.2 426.5L786.5 342.0L787.0 341.6M418.0 401.8L418.2 403.9L418.8 406.1L419.8 408.1L421.2 410.0L423.0 411.9L425.3 413.8L427.7 415.3L430.3 416.7M418.0 406.7L418.2 408.8L418.8 411.0L419.8 413.0L421.2 414.9L423.0 416.8L425.3 418.7L427.7 420.2L430.3 421.6M430.3 416.7L433.5 418.0L436.7 419.0L440.0 419.8M430.3 421.6L433.5 422.9L436.7 423.9L440.0 424.7M440.0 419.8L443.7 420.4L447.3 420.8M440.0 424.7L443.7 425.3L447.3 425.7M447.3 420.8L450.9 420.9L454.8 420.8M447.3 425.7L450.9 425.8L454.8 425.7M454.8 420.8L458.4 420.4L461.8 419.8M454.8 425.7L458.4 425.3L461.8 424.7M461.8 419.8L465.5 419.0L468.6 418.0L471.5 416.8M461.8 424.7L465.5 423.9L468.6 422.9L471.5 421.7M471.5 416.8L474.4 415.3L537.0 379.2M471.5 421.7L474.4 420.2L537.0 384.1M537.0 379.2L538.4 378.7M537.0 384.1L538.4 383.6M538.4 378.7L539.9 378.7M538.4 383.6L539.9 383.6M539.9 378.7L541.4 379.2M539.9 383.6L541.4 384.1M541.4 379.2L614.9 421.6L615.8 422.5M541.4 384.1L614.9 426.5L615.8 427.4M303.7 464.5v8.3M424.1 441.3v8.3M425.6 441.3v8.3M591.5 537.1v8.3M519.1 587.5v8.3M645.8 556.8v8.3M525.0 485.1v8.3M626.8 426.3v8.3M628.3 426.3v8.3M705.8 471.1v8.3M633.5 521.5v8.3M760.1 490.8v8.3M639.3 419.1v8.3M787.0 333.3v8.3M418.0 398.4v8.3M538.4 375.3v8.3M539.9 375.3v8.3M615.8 419.1v8.3M532.0 590.9L532.1 589.8L532.5 588.4L533.1 587.3L533.7 586.5L534.8 585.2L536.0 584.3L537.3 583.5L599.7 547.4M532.0 595.8L532.1 594.7L532.5 593.3L533.1 592.2L533.7 591.4L534.8 590.1L536.0 589.2L537.3 588.4L599.7 552.3M599.7 547.4L601.2 546.9M599.7 552.3L601.2 551.8M601.2 546.9L602.7 546.9M601.2 551.8L602.7 551.8M602.7 546.9L604.2 547.4M602.7 551.8L604.2 552.3M604.2 547.4L624.9 559.4L625.7 560.2M604.2 552.3L624.9 564.3L625.7 565.1M601.2 543.5v8.3M602.7 543.5v8.3M625.7 556.8v8.3M532.0 587.5v8.3M646.3 524.7L646.5 523.5L646.7 522.6L647.4 521.3L648.0 520.5L648.9 519.5L650.3 518.3L651.6 517.5L714.1 481.4M646.3 529.6L646.5 528.4L646.7 527.5L647.4 526.2L648.0 525.4L648.9 524.4L650.3 523.2L651.6 522.4L714.1 486.3M714.1 481.4L715.5 480.9M714.1 486.3L715.5 485.8M715.5 480.9L717.0 480.9M715.5 485.8L717.0 485.8M717.0 480.9L718.5 481.4M717.0 485.8L718.5 486.3M718.5 481.4L739.2 493.4L740.0 494.2M718.5 486.3L739.2 498.3L740.0 499.1M715.5 477.5v8.3M717.0 477.5v8.3M740.0 490.8v8.3M646.3 521.3v8.3M431.4 401.7L431.5 400.7L431.9 399.4L432.6 397.9L433.3 397.0L434.3 395.9L435.8 394.7L437.2 393.8L499.7 357.7M431.4 406.6L431.5 405.6L431.9 404.3L432.6 402.8L433.3 401.9L434.3 400.8L435.8 399.6L437.2 398.7L499.7 362.6M499.7 357.7L501.2 357.2M499.7 362.6L501.2 362.1M501.2 357.2L502.7 357.2M501.2 362.1L502.7 362.1M502.7 357.2L504.2 357.7M502.7 362.1L504.2 362.6M504.2 357.7L527.4 371.1L528.3 372.0M504.2 362.6L527.4 376.0L528.3 376.9M501.2 353.8v8.3M502.7 353.8v8.3M528.3 368.6v8.3M431.4 398.3v8.3M317.1 467.9L317.2 466.7L317.6 465.4L318.2 464.2L319.0 463.0L320.2 461.7L321.5 460.7L322.9 459.8L385.4 423.7M317.1 472.8L317.2 471.6L317.6 470.3L318.2 469.1L319.0 467.9L320.2 466.6L321.5 465.6L322.9 464.7L385.4 428.6M385.4 423.7L386.9 423.2M385.4 428.6L386.9 428.1M386.9 423.2L388.4 423.2M386.9 428.1L388.4 428.1M388.4 423.2L389.9 423.7M388.4 428.1L389.9 428.6M389.9 423.7L413.1 437.1L414.0 438.0M389.9 428.6L413.1 442.0L414.0 442.9M414.0 434.6v8.3M317.1 464.5v8.3M386.9 419.8v8.3M388.4 419.8v8.3" stroke="#120c05" stroke-width="0.9" fill="none" stroke-linecap="round"/>
<path d="M387.3 408.2L388.1 407.9L388.9 407.9L389.7 408.2L511.0 478.2L512.5 478.7L514.0 478.7L515.4 478.2L614.9 420.8L615.8 419.9L615.8 419.1L614.9 418.2L541.4 375.8L539.9 375.3L538.4 375.3L537.0 375.8L474.4 411.9L471.5 413.4L468.6 414.6L465.5 415.6L461.8 416.4L458.4 417.0L454.8 417.4L450.9 417.5L447.3 417.4L443.7 417.0L440.0 416.4L436.7 415.6L433.5 414.6L430.3 413.3L427.7 411.9L425.3 410.4L423.0 408.5L421.2 406.6L419.8 404.7L418.8 402.7L418.2 400.5L418.0 398.4L418.2 396.3L418.8 394.1L419.8 392.1L421.2 390.2L423.0 388.2L425.2 386.5L427.7 384.9L501.6 342.2L502.4 341.9L503.3 341.9L504.0 342.2L625.3 412.2L626.8 412.7L628.3 412.7L629.8 412.2L776.1 327.7L776.9 327.4L777.8 327.4L778.6 327.7L786.5 332.3L787.0 332.7L787.0 333.3L786.5 333.7L640.2 418.2L639.3 419.1L639.3 419.9L640.2 420.8L759.7 489.8L760.1 490.2L760.1 490.8L759.7 491.2L685.8 533.9L683.2 535.2L680.4 536.4L677.2 537.4L674.1 538.1L670.9 538.6L667.4 539.0L664.1 539.1L660.8 539.0L657.2 538.6L653.8 538.1L650.8 537.3L647.9 536.4L644.9 535.2L642.4 533.9L640.2 532.5L638.1 530.8L636.5 529.1L635.2 527.3L634.2 525.3L633.7 523.4L633.5 521.5L633.7 519.4L634.2 517.5L635.1 515.6L636.5 513.7L638.1 512.0L640.1 510.4L642.4 508.9L705.0 472.8L705.8 471.9L705.8 471.1L705.0 470.2L629.8 426.8L628.3 426.3L626.8 426.3L625.3 426.8L525.8 484.2L525.0 485.1L525.0 485.9L525.8 486.8L645.4 555.8L645.8 556.2L645.8 556.8L645.4 557.2L571.4 599.9L568.8 601.2L566.0 602.4L563.0 603.3L559.8 604.1L556.4 604.6L553.1 605.0L549.9 605.1L546.4 605.0L543.0 604.6L539.6 604.1L536.4 603.3L533.4 602.3L530.6 601.2L528.2 600.0L525.8 598.4L523.8 596.8L522.2 595.1L520.8 593.2L519.9 591.4L519.3 589.5L519.1 587.5L519.3 585.4L519.9 583.4L520.9 581.5L522.2 579.7L523.9 578.0L525.9 576.3L528.1 574.9L590.6 538.8L591.5 537.9L591.5 537.1L590.6 536.2L427.1 441.8L425.6 441.3L424.1 441.3L422.6 441.8L360.1 477.9L357.4 479.3L354.4 480.5L350.9 481.6L347.6 482.4L344.1 483.0L340.4 483.4L336.8 483.5L332.9 483.4L329.3 483.0L325.8 482.4L322.3 481.6L319.1 480.6L316.1 479.3L313.4 478.0L310.8 476.2L308.7 474.5L306.9 472.7L305.5 470.7L304.5 468.6L303.9 466.6L303.7 464.5L303.9 462.3L304.5 460.1L305.5 458.0L306.9 456.1L308.6 454.3L310.8 452.6L313.4 450.9ZM537.3 580.1L536.0 580.9L534.8 581.8L533.7 583.1L533.1 583.9L532.5 585.0L532.1 586.4L532.0 587.5L532.1 588.4L532.5 589.8L533.1 590.9L533.7 591.7L534.8 593.0L535.7 593.7L537.1 594.6L538.9 595.5L540.5 596.1L542.2 596.7L543.7 597.0L545.6 597.4L548.0 597.6L549.5 597.6L551.5 597.6L553.9 597.4L555.8 597.0L557.3 596.7L559.4 596.0L561.0 595.3L562.4 594.6L624.9 558.5L625.7 557.7L625.7 556.8L624.9 556.0L604.2 544.0L602.7 543.5L601.2 543.5L599.7 544.0ZM650.3 514.9L648.9 516.1L648.0 517.1L647.4 517.9L646.7 519.2L646.5 520.1L646.3 521.3L646.5 522.7L646.7 523.6L647.2 524.7L648.2 526.0L648.9 526.7L650.1 527.7L651.7 528.7L653.2 529.5L654.4 530.0L656.6 530.7L658.0 531.0L659.9 531.4L662.3 531.6L663.9 531.6L665.8 531.6L668.2 531.4L670.1 531.0L671.6 530.7L673.7 530.0L675.3 529.3L676.7 528.6L739.2 492.5L740.0 491.7L740.0 490.8L739.2 490.0L718.5 478.0L717.0 477.5L715.5 477.5L714.1 478.0L651.6 514.1ZM435.8 391.3L434.3 392.5L433.3 393.6L432.6 394.5L431.9 396.0L431.5 397.3L431.4 398.3L431.6 399.8L432.0 401.0L432.5 402.0L433.5 403.4L434.6 404.5L435.6 405.4L437.3 406.5L438.7 407.2L440.4 407.9L442.7 408.6L444.4 409.0L446.5 409.4L449.0 409.6L450.8 409.7L453.0 409.6L455.6 409.4L457.7 409.0L459.3 408.6L461.6 407.9L463.4 407.2L465.0 406.4L527.4 370.3L528.3 369.4L528.3 368.6L527.4 367.7L504.2 354.3L502.7 353.8L501.2 353.8L499.7 354.3L437.2 390.4ZM389.9 420.3L388.4 419.8L386.9 419.8L385.4 420.3L322.9 456.4L321.5 457.3L320.2 458.3L319.0 459.6L318.2 460.8L317.6 462.0L317.2 463.3L317.1 464.5L317.3 465.8L317.6 466.8L318.2 468.0L319.0 469.2L320.2 470.5L321.5 471.5L322.7 472.3L324.3 473.2L326.1 473.9L328.4 474.6L330.4 475.1L332.1 475.4L334.7 475.6L336.9 475.7L339.1 475.6L340.9 475.5L343.4 475.0L345.4 474.5L347.3 473.9L348.8 473.3L350.6 472.4L413.1 436.3L414.0 435.4L414.0 434.6L413.1 433.7Z" fill="#f1c48c" stroke="#120c05" stroke-width="1" stroke-linejoin="round" fill-rule="evenodd"/>
<clipPath id="c1"><path d="M388.5 409.1L388.5 409.1L388.5 409.1L509.8 479.1L511.9 479.8L514.5 479.8L516.6 479.1L616.5 421.5L617.7 420.2L617.7 418.8L616.5 417.5L542.6 374.9L540.5 374.2L537.9 374.2L535.7 374.9L473.1 411.1L470.3 412.5L467.6 413.6L464.6 414.5L461.2 415.4L457.9 415.9L454.5 416.2L450.9 416.4L447.5 416.2L444.1 415.9L440.6 415.3L437.5 414.6L434.5 413.6L431.5 412.4L429.1 411.1L426.8 409.7L424.7 407.9L423.0 406.1L421.7 404.3L420.7 402.5L420.1 400.3L419.9 398.4L420.1 396.5L420.7 394.4L421.7 392.5L423.0 390.7L424.7 388.8L426.7 387.2L429.1 385.7L502.8 343.1L502.8 343.1L502.8 343.1L624.1 413.1L626.3 413.8L628.8 413.8L631.0 413.1L777.3 328.6L777.3 328.6L777.4 328.6L785.0 333.0L785.0 333.0L785.0 333.0L638.6 417.5L637.3 418.8L637.3 420.2L638.6 421.5L758.1 490.5L758.1 490.5L758.1 490.5L684.4 533.1L682.0 534.3L679.3 535.4L676.4 536.3L673.5 537.0L670.5 537.5L667.2 537.8L664.1 537.9L661.0 537.8L657.7 537.5L654.5 537.0L651.6 536.3L648.9 535.4L646.1 534.3L643.8 533.1L641.7 531.8L639.8 530.2L638.3 528.6L637.1 526.9L636.1 525.1L635.6 523.3L635.4 521.5L635.6 519.5L636.1 517.7L637.0 516.0L638.3 514.2L639.8 512.6L641.6 511.1L643.9 509.7L706.5 473.5L707.8 472.2L707.8 470.8L706.5 469.5L631.0 425.9L628.8 425.2L626.3 425.2L624.1 425.9L524.3 483.5L523.0 484.8L523.0 486.2L524.3 487.5L643.8 556.5L643.8 556.5L643.8 556.5L570.1 599.1L567.6 600.3L565.0 601.4L562.2 602.3L559.2 603.0L556.0 603.5L552.9 603.8L549.9 603.9L546.6 603.8L543.4 603.5L540.3 603.0L537.2 602.3L534.4 601.4L531.9 600.3L529.6 599.1L527.4 597.7L525.5 596.2L523.9 594.6L522.7 592.8L521.8 591.1L521.3 589.3L521.1 587.5L521.3 585.6L521.9 583.6L522.7 581.9L524.0 580.2L525.5 578.6L527.4 577.0L529.6 575.7L592.2 539.5L593.5 538.2L593.5 536.8L592.2 535.5L428.3 440.9L426.1 440.2L423.6 440.2L421.4 440.9L358.8 477.1L356.1 478.4L353.4 479.6L350.1 480.6L347.0 481.4L343.7 481.9L340.2 482.2L336.8 482.4L333.1 482.2L329.8 481.9L326.4 481.3L323.2 480.6L320.2 479.6L317.3 478.4L314.8 477.1L312.3 475.5L310.4 473.9L308.7 472.2L307.3 470.3L306.4 468.3L305.8 466.4L305.6 464.5L305.8 462.4L306.4 460.4L307.4 458.4L308.7 456.6L310.3 454.9L312.3 453.3L314.8 451.6ZM535.8 579.3L534.5 580.2L533.2 581.2L531.9 582.6L531.2 583.5L530.6 584.7L530.1 586.3L530.0 587.5L530.1 588.6L530.6 590.1L531.2 591.3L531.9 592.2L533.2 593.6L534.2 594.4L535.7 595.4L537.6 596.4L539.5 597.1L541.4 597.7L543.0 598.1L545.1 598.5L547.8 598.7L549.5 598.8L551.7 598.7L554.4 598.5L556.5 598.1L558.1 597.7L560.4 597.0L562.2 596.2L563.7 595.4L626.4 559.2L627.7 558.0L627.7 556.5L626.4 555.3L605.4 543.1L603.2 542.4L600.7 542.4L598.5 543.1ZM648.8 514.2L647.3 515.5L646.2 516.6L645.5 517.5L644.8 519.0L644.5 520.0L644.4 521.3L644.5 522.8L644.8 523.8L645.4 525.0L646.4 526.4L647.3 527.3L648.5 528.4L650.3 529.5L652.0 530.4L653.4 531.0L655.7 531.7L657.3 532.1L659.5 532.5L662.1 532.7L663.8 532.8L666.1 532.7L668.7 532.5L670.8 532.1L672.4 531.7L674.7 531.0L676.5 530.2L678.1 529.4L740.7 493.2L742.0 492.0L742.0 490.5L740.7 489.3L719.7 477.1L717.6 476.4L715.0 476.4L712.8 477.1L650.2 513.3ZM434.3 390.5L432.7 391.9L431.5 393.1L430.8 394.2L430.0 395.8L429.6 397.1L429.5 398.3L429.6 399.9L430.1 401.3L430.6 402.4L431.7 403.9L432.9 405.1L434.0 406.1L435.9 407.3L437.4 408.0L439.4 408.9L441.9 409.7L443.7 410.1L446.0 410.5L448.8 410.8L450.8 410.8L453.2 410.8L456.0 410.5L458.4 410.1L460.2 409.7L462.7 408.9L464.6 408.0L466.3 407.2L529.0 371.0L530.2 369.7L530.2 368.3L529.0 367.0L505.4 353.4L503.2 352.7L500.7 352.7L498.5 353.4L435.8 389.6ZM391.1 419.4L388.9 418.7L386.4 418.7L384.2 419.4L321.5 455.6L320.0 456.5L318.6 457.7L317.2 459.1L316.3 460.4L315.7 461.8L315.3 463.1L315.2 464.5L315.3 465.9L315.7 467.0L316.3 468.4L317.2 469.7L318.6 471.1L320.0 472.3L321.3 473.1L323.1 474.0L325.1 474.9L327.6 475.7L329.8 476.2L331.7 476.5L334.5 476.8L336.9 476.8L339.3 476.7L341.3 476.6L344.0 476.1L346.3 475.5L348.4 474.9L350.0 474.2L352.0 473.2L414.7 437.0L415.9 435.7L415.9 434.3L414.7 433.0Z" clip-rule="evenodd"/></clipPath>
<g clip-path="url(#c1)">
<path d="M388.5 409.1L388.5 409.1L388.5 409.1L509.8 479.1L511.9 479.8L514.5 479.8L516.6 479.1L616.5 421.5L617.7 420.2L617.7 418.8L616.5 417.5L542.6 374.9L540.5 374.2L537.9 374.2L535.7 374.9L473.1 411.1L470.3 412.5L467.6 413.6L464.6 414.5L461.2 415.4L457.9 415.9L454.5 416.2L450.9 416.4L447.5 416.2L444.1 415.9L440.6 415.3L437.5 414.6L434.5 413.6L431.5 412.4L429.1 411.1L426.8 409.7L424.7 407.9L423.0 406.1L421.7 404.3L420.7 402.5L420.1 400.3L419.9 398.4L420.1 396.5L420.7 394.4L421.7 392.5L423.0 390.7L424.7 388.8L426.7 387.2L429.1 385.7L502.8 343.1L502.8 343.1L502.8 343.1L624.1 413.1L626.3 413.8L628.8 413.8L631.0 413.1L777.3 328.6L777.3 328.6L777.4 328.6L785.0 333.0L785.0 333.0L785.0 333.0L638.6 417.5L637.3 418.8L637.3 420.2L638.6 421.5L758.1 490.5L758.1 490.5L758.1 490.5L684.4 533.1L682.0 534.3L679.3 535.4L676.4 536.3L673.5 537.0L670.5 537.5L667.2 537.8L664.1 537.9L661.0 537.8L657.7 537.5L654.5 537.0L651.6 536.3L648.9 535.4L646.1 534.3L643.8 533.1L641.7 531.8L639.8 530.2L638.3 528.6L637.1 526.9L636.1 525.1L635.6 523.3L635.4 521.5L635.6 519.5L636.1 517.7L637.0 516.0L638.3 514.2L639.8 512.6L641.6 511.1L643.9 509.7L706.5 473.5L707.8 472.2L707.8 470.8L706.5 469.5L631.0 425.9L628.8 425.2L626.3 425.2L624.1 425.9L524.3 483.5L523.0 484.8L523.0 486.2L524.3 487.5L643.8 556.5L643.8 556.5L643.8 556.5L570.1 599.1L567.6 600.3L565.0 601.4L562.2 602.3L559.2 603.0L556.0 603.5L552.9 603.8L549.9 603.9L546.6 603.8L543.4 603.5L540.3 603.0L537.2 602.3L534.4 601.4L531.9 600.3L529.6 599.1L527.4 597.7L525.5 596.2L523.9 594.6L522.7 592.8L521.8 591.1L521.3 589.3L521.1 587.5L521.3 585.6L521.9 583.6L522.7 581.9L524.0 580.2L525.5 578.6L527.4 577.0L529.6 575.7L592.2 539.5L593.5 538.2L593.5 536.8L592.2 535.5L428.3 440.9L426.1 440.2L423.6 440.2L421.4 440.9L358.8 477.1L356.1 478.4L353.4 479.6L350.1 480.6L347.0 481.4L343.7 481.9L340.2 482.2L336.8 482.4L333.1 482.2L329.8 481.9L326.4 481.3L323.2 480.6L320.2 479.6L317.3 478.4L314.8 477.1L312.3 475.5L310.4 473.9L308.7 472.2L307.3 470.3L306.4 468.3L305.8 466.4L305.6 464.5L305.8 462.4L306.4 460.4L307.4 458.4L308.7 456.6L310.3 454.9L312.3 453.3L314.8 451.6ZM535.8 579.3L534.5 580.2L533.2 581.2L531.9 582.6L531.2 583.5L530.6 584.7L530.1 586.3L530.0 587.5L530.1 588.6L530.6 590.1L531.2 591.3L531.9 592.2L533.2 593.6L534.2 594.4L535.7 595.4L537.6 596.4L539.5 597.1L541.4 597.7L543.0 598.1L545.1 598.5L547.8 598.7L549.5 598.8L551.7 598.7L554.4 598.5L556.5 598.1L558.1 597.7L560.4 597.0L562.2 596.2L563.7 595.4L626.4 559.2L627.7 558.0L627.7 556.5L626.4 555.3L605.4 543.1L603.2 542.4L600.7 542.4L598.5 543.1ZM648.8 514.2L647.3 515.5L646.2 516.6L645.5 517.5L644.8 519.0L644.5 520.0L644.4 521.3L644.5 522.8L644.8 523.8L645.4 525.0L646.4 526.4L647.3 527.3L648.5 528.4L650.3 529.5L652.0 530.4L653.4 531.0L655.7 531.7L657.3 532.1L659.5 532.5L662.1 532.7L663.8 532.8L666.1 532.7L668.7 532.5L670.8 532.1L672.4 531.7L674.7 531.0L676.5 530.2L678.1 529.4L740.7 493.2L742.0 492.0L742.0 490.5L740.7 489.3L719.7 477.1L717.6 476.4L715.0 476.4L712.8 477.1L650.2 513.3ZM434.3 390.5L432.7 391.9L431.5 393.1L430.8 394.2L430.0 395.8L429.6 397.1L429.5 398.3L429.6 399.9L430.1 401.3L430.6 402.4L431.7 403.9L432.9 405.1L434.0 406.1L435.9 407.3L437.4 408.0L439.4 408.9L441.9 409.7L443.7 410.1L446.0 410.5L448.8 410.8L450.8 410.8L453.2 410.8L456.0 410.5L458.4 410.1L460.2 409.7L462.7 408.9L464.6 408.0L466.3 407.2L529.0 371.0L530.2 369.7L530.2 368.3L529.0 367.0L505.4 353.4L503.2 352.7L500.7 352.7L498.5 353.4L435.8 389.6ZM391.1 419.4L388.9 418.7L386.4 418.7L384.2 419.4L321.5 455.6L320.0 456.5L318.6 457.7L317.2 459.1L316.3 460.4L315.7 461.8L315.3 463.1L315.2 464.5L315.3 465.9L315.7 467.0L316.3 468.4L317.2 469.7L318.6 471.1L320.0 472.3L321.3 473.1L323.1 474.0L325.1 474.9L327.6 475.7L329.8 476.2L331.7 476.5L334.5 476.8L336.9 476.8L339.3 476.7L341.3 476.6L344.0 476.1L346.3 475.5L348.4 474.9L350.0 474.2L352.0 473.2L414.7 437.0L415.9 435.7L415.9 434.3L414.7 433.0Z" fill="#a47647" fill-rule="evenodd"/>
<path d="M593.5 538.2L592.2 539.5L529.6 575.7L527.4 577.0L525.5 578.6L524.0 580.2L522.7 581.9L521.9 583.6L521.3 585.6L521.1 587.5L521.1 589.9L521.3 588.0L521.9 586.0L522.7 584.3L524.0 582.6L525.5 581.0L527.4 579.4L529.6 578.1L592.2 541.9L593.5 540.6ZM707.8 472.2L706.5 473.5L643.9 509.7L641.6 511.1L639.8 512.6L638.3 514.2L637.0 516.0L636.1 517.7L635.6 519.5L635.4 521.5L635.4 523.9L635.6 521.9L636.1 520.1L637.0 518.4L638.3 516.6L639.8 515.0L641.6 513.5L643.9 512.1L706.5 475.9L707.8 474.6ZM777.3 328.6L631.0 413.1L631.0 415.5L777.3 331.0ZM502.8 343.1L429.1 385.7L426.7 387.2L424.7 388.8L423.0 390.7L421.7 392.5L420.7 394.4L420.1 396.5L419.9 398.4L419.9 400.8L420.1 398.9L420.7 396.8L421.7 394.9L423.0 393.1L424.7 391.2L426.7 389.6L429.1 388.1L502.8 345.5ZM617.7 420.2L616.5 421.5L516.6 479.1L516.6 481.5L616.5 423.9L617.7 422.6ZM388.5 409.1L314.8 451.6L312.3 453.3L310.3 454.9L308.7 456.6L307.4 458.4L306.4 460.4L305.8 462.4L305.6 464.5L305.6 466.9L305.8 464.8L306.4 462.8L307.4 460.8L308.7 459.0L310.3 457.3L312.3 455.7L314.8 454.0L388.5 411.5ZM627.7 558.0L626.4 559.2L563.7 595.4L562.2 596.2L562.2 598.6L563.7 597.8L626.4 561.6L627.7 560.4ZM742.0 492.0L740.7 493.2L678.1 529.4L676.5 530.2L676.5 532.6L678.1 531.8L740.7 495.6L742.0 494.4ZM530.2 369.7L529.0 371.0L466.3 407.2L464.6 408.0L464.6 410.4L466.3 409.6L529.0 373.4L530.2 372.1ZM415.9 435.7L414.7 437.0L352.0 473.2L350.0 474.2L350.0 476.6L352.0 475.6L414.7 439.4L415.9 438.1Z" fill="#c4915c" stroke="#c4915c" stroke-width=".6"/><path d="M643.8 556.5L643.8 556.5L524.3 487.5L523.0 486.2L523.0 488.6L524.3 489.9L643.8 558.9L643.8 558.9ZM758.1 490.5L758.1 490.5L638.6 421.5L637.3 420.2L637.3 422.6L638.6 423.9L758.1 492.9L758.1 492.9ZM785.0 333.0L785.0 333.0L777.4 328.6L777.4 331.0L785.0 335.4L785.0 335.4ZM624.1 413.1L502.8 343.1L502.8 345.5L624.1 415.5ZM509.8 479.1L388.5 409.1L388.5 411.5L509.8 481.5ZM537.6 596.4L535.7 595.4L534.2 594.4L533.2 593.6L531.9 592.2L531.2 591.3L530.6 590.1L530.1 588.6L530.0 587.5L530.0 589.9L530.1 591.0L530.6 592.5L531.2 593.7L531.9 594.6L533.2 596.0L534.2 596.8L535.7 597.8L537.6 598.8ZM652.0 530.4L650.3 529.5L648.5 528.4L647.3 527.3L646.4 526.4L645.4 525.0L644.8 523.8L644.5 522.8L644.4 521.3L644.4 523.7L644.5 525.2L644.8 526.2L645.4 527.4L646.4 528.8L647.3 529.7L648.5 530.8L650.3 531.9L652.0 532.8ZM437.4 408.0L435.9 407.3L434.0 406.1L432.9 405.1L431.7 403.9L430.6 402.4L430.1 401.3L429.6 399.9L429.5 398.3L429.5 400.7L429.6 402.3L430.1 403.7L430.6 404.8L431.7 406.3L432.9 407.5L434.0 408.5L435.9 409.7L437.4 410.4ZM323.1 474.0L321.3 473.1L320.0 472.3L318.6 471.1L317.2 469.7L316.3 468.4L315.7 467.0L315.3 465.9L315.2 464.5L315.2 466.9L315.3 468.3L315.7 469.4L316.3 470.8L317.2 472.1L318.6 473.5L320.0 474.7L321.3 475.5L323.1 476.4Z" fill="#8f6439" stroke="#8f6439" stroke-width=".6"/><path d="M777.4 328.6L777.3 328.6L777.3 331.0L777.4 331.0ZM626.3 413.8L624.1 413.1L624.1 415.5L626.3 416.2ZM502.8 343.1L502.8 343.1L502.8 345.5L502.8 345.5ZM511.9 479.8L509.8 479.1L509.8 481.5L511.9 482.2ZM388.5 409.1L388.5 409.1L388.5 411.5L388.5 411.5ZM543.0 598.1L541.4 597.7L539.5 597.1L537.6 596.4L537.6 598.8L539.5 599.5L541.4 600.1L543.0 600.5ZM657.3 532.1L655.7 531.7L653.4 531.0L652.0 530.4L652.0 532.8L653.4 533.4L655.7 534.1L657.3 534.5ZM443.7 410.1L441.9 409.7L439.4 408.9L437.4 408.0L437.4 410.4L439.4 411.3L441.9 412.1L443.7 412.5ZM329.8 476.2L327.6 475.7L325.1 474.9L323.1 474.0L323.1 476.4L325.1 477.3L327.6 478.1L329.8 478.6Z" fill="#986c3f" stroke="#986c3f" stroke-width=".6"/><path d="M777.3 328.6L777.3 328.6L777.3 331.0L777.3 331.0ZM631.0 413.1L628.8 413.8L628.8 416.2L631.0 415.5ZM502.8 343.1L502.8 343.1L502.8 345.5L502.8 345.5ZM516.6 479.1L514.5 479.8L514.5 482.2L516.6 481.5ZM388.5 409.1L388.5 409.1L388.5 411.5L388.5 411.5ZM562.2 596.2L560.4 597.0L558.1 597.7L556.5 598.1L556.5 600.5L558.1 600.1L560.4 599.4L562.2 598.6ZM676.5 530.2L674.7 531.0L672.4 531.7L670.8 532.1L670.8 534.5L672.4 534.1L674.7 533.4L676.5 532.6ZM464.6 408.0L462.7 408.9L460.2 409.7L458.4 410.1L458.4 412.5L460.2 412.1L462.7 411.3L464.6 410.4ZM350.0 474.2L348.4 474.9L346.3 475.5L344.0 476.1L344.0 478.5L346.3 477.9L348.4 477.3L350.0 476.6Z" fill="#bb8a56" stroke="#bb8a56" stroke-width=".6"/><path d="M628.8 413.8L626.3 413.8L626.3 416.2L628.8 416.2ZM514.5 479.8L511.9 479.8L511.9 482.2L514.5 482.2ZM551.7 598.7L549.5 598.8L547.8 598.7L547.8 601.1L549.5 601.2L551.7 601.1ZM666.1 532.7L663.8 532.8L662.1 532.7L662.1 535.1L663.8 535.2L666.1 535.1ZM453.2 410.8L450.8 410.8L448.8 410.8L448.8 413.2L450.8 413.2L453.2 413.2ZM339.3 476.7L336.9 476.8L334.5 476.8L334.5 479.2L336.9 479.2L339.3 479.1Z" fill="#aa7a4a" stroke="#aa7a4a" stroke-width=".6"/><path d="M556.5 598.1L554.4 598.5L551.7 598.7L551.7 601.1L554.4 600.9L556.5 600.5ZM670.8 532.1L668.7 532.5L666.1 532.7L666.1 535.1L668.7 534.9L670.8 534.5ZM458.4 410.1L456.0 410.5L453.2 410.8L453.2 413.2L456.0 412.9L458.4 412.5ZM344.0 476.1L341.3 476.6L339.3 476.7L339.3 479.1L341.3 479.0L344.0 478.5Z" fill="#b28250" stroke="#b28250" stroke-width=".6"/><path d="M547.8 598.7L545.1 598.5L543.0 598.1L543.0 600.5L545.1 600.9L547.8 601.1ZM662.1 532.7L659.5 532.5L657.3 532.1L657.3 534.5L659.5 534.9L662.1 535.1ZM448.8 410.8L446.0 410.5L443.7 410.1L443.7 412.5L446.0 412.9L448.8 413.2ZM334.5 476.8L331.7 476.5L329.8 476.2L329.8 478.6L331.7 478.9L334.5 479.2Z" fill="#a17345" stroke="#a17345" stroke-width=".6"/><path d="M593.5 540.6L592.2 541.9L529.6 578.1L527.4 579.4L525.5 581.0L524.0 582.6L522.7 584.3L521.9 586.0L521.3 588.0L521.1 589.9M643.8 558.9L643.8 558.9L524.3 489.9L523.0 488.6M707.8 474.6L706.5 475.9L643.9 512.1L641.6 513.5L639.8 515.0L638.3 516.6L637.0 518.4L636.1 520.1L635.6 521.9L635.4 523.9M758.1 492.9L758.1 492.9L638.6 423.9L637.3 422.6M785.0 335.4L785.0 335.4L777.4 331.0M777.4 331.0L777.3 331.0M777.3 331.0L777.3 331.0M777.3 331.0L631.0 415.5M631.0 415.5L628.8 416.2M628.8 416.2L626.3 416.2M626.3 416.2L624.1 415.5M624.1 415.5L502.8 345.5M502.8 345.5L502.8 345.5M502.8 345.5L502.8 345.5M502.8 345.5L429.1 388.1L426.7 389.6L424.7 391.2L423.0 393.1L421.7 394.9L420.7 396.8L420.1 398.9L419.9 400.8M617.7 422.6L616.5 423.9L516.6 481.5M516.6 481.5L514.5 482.2M514.5 482.2L511.9 482.2M511.9 482.2L509.8 481.5M509.8 481.5L388.5 411.5M388.5 411.5L388.5 411.5M388.5 411.5L388.5 411.5M388.5 411.5L314.8 454.0L312.3 455.7L310.3 457.3L308.7 459.0L307.4 460.8L306.4 462.8L305.8 464.8L305.6 466.9M305.6 464.5v2.4M593.5 538.2v2.4M521.1 587.5v2.4M643.8 556.5v2.4M523.0 486.2v2.4M707.8 472.2v2.4M635.4 521.5v2.4M758.1 490.5v2.4M637.3 420.2v2.4M785.0 333.0v2.4M777.3 328.6v2.4M628.8 413.8v2.4M626.3 413.8v2.4M502.8 343.1v2.4M419.9 398.4v2.4M617.7 420.2v2.4M514.5 479.8v2.4M511.9 479.8v2.4M388.5 409.1v2.4M627.7 560.4L626.4 561.6L563.7 597.8L562.2 598.6M562.2 598.6L560.4 599.4L558.1 600.1L556.5 600.5M556.5 600.5L554.4 600.9L551.7 601.1M551.7 601.1L549.5 601.2L547.8 601.1M547.8 601.1L545.1 600.9L543.0 600.5M543.0 600.5L541.4 600.1L539.5 599.5L537.6 598.8M537.6 598.8L535.7 597.8L534.2 596.8L533.2 596.0L531.9 594.6L531.2 593.7L530.6 592.5L530.1 591.0L530.0 589.9M627.7 558.0v2.4M530.0 587.5v2.4M742.0 494.4L740.7 495.6L678.1 531.8L676.5 532.6M676.5 532.6L674.7 533.4L672.4 534.1L670.8 534.5M670.8 534.5L668.7 534.9L666.1 535.1M666.1 535.1L663.8 535.2L662.1 535.1M662.1 535.1L659.5 534.9L657.3 534.5M657.3 534.5L655.7 534.1L653.4 533.4L652.0 532.8M652.0 532.8L650.3 531.9L648.5 530.8L647.3 529.7L646.4 528.8L645.4 527.4L644.8 526.2L644.5 525.2L644.4 523.7M742.0 492.0v2.4M644.4 521.3v2.4M530.2 372.1L529.0 373.4L466.3 409.6L464.6 410.4M464.6 410.4L462.7 411.3L460.2 412.1L458.4 412.5M458.4 412.5L456.0 412.9L453.2 413.2M453.2 413.2L450.8 413.2L448.8 413.2M448.8 413.2L446.0 412.9L443.7 412.5M443.7 412.5L441.9 412.1L439.4 411.3L437.4 410.4M437.4 410.4L435.9 409.7L434.0 408.5L432.9 407.5L431.7 406.3L430.6 404.8L430.1 403.7L429.6 402.3L429.5 400.7M530.2 369.7v2.4M429.5 398.3v2.4M415.9 438.1L414.7 439.4L352.0 475.6L350.0 476.6M350.0 476.6L348.4 477.3L346.3 477.9L344.0 478.5M344.0 478.5L341.3 479.0L339.3 479.1M339.3 479.1L336.9 479.2L334.5 479.2M334.5 479.2L331.7 478.9L329.8 478.6M329.8 478.6L327.6 478.1L325.1 477.3L323.1 476.4M323.1 476.4L321.3 475.5L320.0 474.7L318.6 473.5L317.2 472.1L316.3 470.8L315.7 469.4L315.3 468.3L315.2 466.9M415.9 435.7v2.4M315.2 464.5v2.4" stroke="#120c05" stroke-width="0.6" fill="none" stroke-linecap="round"/>
<path d="M617.7 420.2L617.7 418.8L616.5 417.5L542.6 374.9L540.5 374.2L537.9 374.2L535.7 374.9L473.1 411.1L470.3 412.5L467.6 413.6L464.6 414.5L461.2 415.4L457.9 415.9L454.5 416.2L450.9 416.4L447.5 416.2L444.1 415.9L440.6 415.3L437.5 414.6L434.5 413.6L431.5 412.4L429.1 411.1L426.8 409.7L424.7 407.9L423.0 406.1L421.7 404.3L420.7 402.5L420.1 400.3L420.0 399.6L420.1 398.9L420.7 396.8L421.7 394.9L423.0 393.1L424.7 391.2L426.7 389.6L429.1 388.1L502.8 345.5L502.8 345.5L502.8 345.5L624.1 415.5L626.3 416.2L628.8 416.2L631.0 415.5L777.3 331.0L777.3 331.0L777.4 331.0L782.9 334.2L638.6 417.5L637.3 418.8L637.3 420.2L637.8 420.7L637.3 421.2L637.3 422.6L638.6 423.9L756.0 491.7L684.4 533.1L682.0 534.3L679.3 535.4L676.4 536.3L673.5 537.0L670.5 537.5L667.2 537.8L664.1 537.9L661.0 537.8L657.7 537.5L654.5 537.0L651.6 536.3L648.9 535.4L646.1 534.3L643.8 533.1L641.7 531.8L639.8 530.2L638.3 528.6L637.1 526.9L636.1 525.1L635.6 523.3L635.5 522.6L635.6 521.9L636.1 520.1L637.0 518.4L638.3 516.6L639.8 515.0L641.6 513.5L643.9 512.1L706.5 475.9L707.8 474.6L707.8 473.2L707.3 472.7L707.8 472.2L707.8 470.8L706.5 469.5L631.0 425.9L628.8 425.2L626.3 425.2L624.1 425.9L524.3 483.5L523.0 484.8L523.0 486.2L523.5 486.7L523.0 487.2L523.0 488.6L524.3 489.9L641.7 557.7L570.1 599.1L567.6 600.3L565.0 601.4L562.2 602.3L559.2 603.0L556.0 603.5L552.9 603.8L549.9 603.9L546.6 603.8L543.4 603.5L540.3 603.0L537.2 602.3L534.4 601.4L531.9 600.3L529.6 599.1L527.4 597.7L525.5 596.2L523.9 594.6L522.7 592.8L521.8 591.1L521.3 589.3L521.2 588.6L521.3 588.0L521.9 586.0L522.7 584.3L524.0 582.6L525.5 581.0L527.4 579.4L529.6 578.1L592.2 541.9L593.5 540.6L593.5 539.2L593.0 538.7L593.5 538.2L593.5 536.8L592.2 535.5L428.3 440.9L426.1 440.2L423.6 440.2L421.4 440.9L358.8 477.1L356.1 478.4L353.4 479.6L350.1 480.6L347.0 481.4L343.7 481.9L340.2 482.2L336.8 482.4L333.1 482.2L329.8 481.9L326.4 481.3L323.2 480.6L320.2 479.6L317.3 478.4L314.8 477.1L312.3 475.5L310.4 473.9L308.7 472.2L307.3 470.3L306.4 468.3L305.8 466.4L305.7 465.6L305.8 464.8L306.4 462.8L307.4 460.8L308.7 459.0L310.3 457.3L312.3 455.7L314.8 454.0L388.5 411.5L388.5 411.5L388.5 411.5L509.8 481.5L511.9 482.2L514.5 482.2L516.6 481.5L616.5 423.9L617.7 422.6L617.7 421.2L617.2 420.7ZM534.5 580.2L533.2 581.2L531.9 582.6L531.2 583.5L530.6 584.7L530.1 586.3L530.0 587.5L530.1 588.6L530.2 588.6L530.1 588.7L530.0 589.9L530.1 591.0L530.6 592.5L531.2 593.7L531.9 594.6L533.2 596.0L534.2 596.8L535.7 597.8L537.6 598.8L539.5 599.5L541.4 600.1L543.0 600.5L545.1 600.9L547.8 601.1L549.5 601.2L551.7 601.1L554.4 600.9L556.5 600.5L558.1 600.1L560.4 599.4L562.2 598.6L563.7 597.8L626.4 561.6L627.7 560.4L627.7 558.9L627.2 558.4L627.7 558.0L627.7 556.5L626.4 555.3L605.4 543.1L603.2 542.4L600.7 542.4L598.5 543.1L535.8 579.3ZM647.3 515.5L646.2 516.6L645.5 517.5L644.8 519.0L644.5 520.0L644.4 521.3L644.5 522.6L644.4 523.7L644.5 525.2L644.8 526.2L645.4 527.4L646.4 528.8L647.3 529.7L648.5 530.8L650.3 531.9L652.0 532.8L653.4 533.4L655.7 534.1L657.3 534.5L659.5 534.9L662.1 535.1L663.8 535.2L666.1 535.1L668.7 534.9L670.8 534.5L672.4 534.1L674.7 533.4L676.5 532.6L678.1 531.8L740.7 495.6L742.0 494.4L742.0 492.9L741.5 492.5L742.0 492.0L742.0 490.5L740.7 489.3L719.7 477.1L717.6 476.4L715.0 476.4L712.8 477.1L650.2 513.3L648.8 514.2ZM432.7 391.9L431.5 393.1L430.8 394.2L430.0 395.8L429.6 397.1L429.5 398.3L429.6 399.5L429.6 399.5L429.5 400.7L429.6 402.3L430.1 403.7L430.6 404.8L431.7 406.3L432.9 407.5L434.0 408.5L435.9 409.7L437.4 410.4L439.4 411.3L441.9 412.1L443.7 412.5L446.0 412.9L448.8 413.2L450.8 413.2L453.2 413.2L456.0 412.9L458.4 412.5L460.2 412.1L462.7 411.3L464.6 410.4L466.3 409.6L529.0 373.4L530.2 372.1L530.2 370.7L529.8 370.2L530.2 369.7L530.2 368.3L529.0 367.0L505.4 353.4L503.2 352.7L500.7 352.7L498.5 353.4L435.8 389.6L434.3 390.5ZM388.9 418.7L386.4 418.7L384.2 419.4L321.5 455.6L320.0 456.5L318.6 457.7L317.2 459.1L316.3 460.4L315.7 461.8L315.3 463.1L315.2 464.5L315.3 465.5L315.3 465.5L315.2 466.9L315.3 468.3L315.7 469.4L316.3 470.8L317.2 472.1L318.6 473.5L320.0 474.7L321.3 475.5L323.1 476.4L325.1 477.3L327.6 478.1L329.8 478.6L331.7 478.9L334.5 479.2L336.9 479.2L339.3 479.1L341.3 479.0L344.0 478.5L346.3 477.9L348.4 477.3L350.0 476.6L352.0 475.6L414.7 439.4L415.9 438.1L415.9 436.7L415.5 436.2L415.9 435.7L415.9 434.3L414.7 433.0L391.1 419.4Z" fill="#fbcf95" stroke="#120c05" stroke-width=".9" fill-rule="evenodd"/>
</g>
<path d="M388.5 409.1L388.5 409.1L388.5 409.1L509.8 479.1L511.9 479.8L514.5 479.8L516.6 479.1L616.5 421.5L617.7 420.2L617.7 418.8L616.5 417.5L542.6 374.9L540.5 374.2L537.9 374.2L535.7 374.9L473.1 411.1L470.3 412.5L467.6 413.6L464.6 414.5L461.2 415.4L457.9 415.9L454.5 416.2L450.9 416.4L447.5 416.2L444.1 415.9L440.6 415.3L437.5 414.6L434.5 413.6L431.5 412.4L429.1 411.1L426.8 409.7L424.7 407.9L423.0 406.1L421.7 404.3L420.7 402.5L420.1 400.3L419.9 398.4L420.1 396.5L420.7 394.4L421.7 392.5L423.0 390.7L424.7 388.8L426.7 387.2L429.1 385.7L502.8 343.1L502.8 343.1L502.8 343.1L624.1 413.1L626.3 413.8L628.8 413.8L631.0 413.1L777.3 328.6L777.3 328.6L777.4 328.6L785.0 333.0L785.0 333.0L785.0 333.0L638.6 417.5L637.3 418.8L637.3 420.2L638.6 421.5L758.1 490.5L758.1 490.5L758.1 490.5L684.4 533.1L682.0 534.3L679.3 535.4L676.4 536.3L673.5 537.0L670.5 537.5L667.2 537.8L664.1 537.9L661.0 537.8L657.7 537.5L654.5 537.0L651.6 536.3L648.9 535.4L646.1 534.3L643.8 533.1L641.7 531.8L639.8 530.2L638.3 528.6L637.1 526.9L636.1 525.1L635.6 523.3L635.4 521.5L635.6 519.5L636.1 517.7L637.0 516.0L638.3 514.2L639.8 512.6L641.6 511.1L643.9 509.7L706.5 473.5L707.8 472.2L707.8 470.8L706.5 469.5L631.0 425.9L628.8 425.2L626.3 425.2L624.1 425.9L524.3 483.5L523.0 484.8L523.0 486.2L524.3 487.5L643.8 556.5L643.8 556.5L643.8 556.5L570.1 599.1L567.6 600.3L565.0 601.4L562.2 602.3L559.2 603.0L556.0 603.5L552.9 603.8L549.9 603.9L546.6 603.8L543.4 603.5L540.3 603.0L537.2 602.3L534.4 601.4L531.9 600.3L529.6 599.1L527.4 597.7L525.5 596.2L523.9 594.6L522.7 592.8L521.8 591.1L521.3 589.3L521.1 587.5L521.3 585.6L521.9 583.6L522.7 581.9L524.0 580.2L525.5 578.6L527.4 577.0L529.6 575.7L592.2 539.5L593.5 538.2L593.5 536.8L592.2 535.5L428.3 440.9L426.1 440.2L423.6 440.2L421.4 440.9L358.8 477.1L356.1 478.4L353.4 479.6L350.1 480.6L347.0 481.4L343.7 481.9L340.2 482.2L336.8 482.4L333.1 482.2L329.8 481.9L326.4 481.3L323.2 480.6L320.2 479.6L317.3 478.4L314.8 477.1L312.3 475.5L310.4 473.9L308.7 472.2L307.3 470.3L306.4 468.3L305.8 466.4L305.6 464.5L305.8 462.4L306.4 460.4L307.4 458.4L308.7 456.6L310.3 454.9L312.3 453.3L314.8 451.6ZM535.8 579.3L534.5 580.2L533.2 581.2L531.9 582.6L531.2 583.5L530.6 584.7L530.1 586.3L530.0 587.5L530.1 588.6L530.6 590.1L531.2 591.3L531.9 592.2L533.2 593.6L534.2 594.4L535.7 595.4L537.6 596.4L539.5 597.1L541.4 597.7L543.0 598.1L545.1 598.5L547.8 598.7L549.5 598.8L551.7 598.7L554.4 598.5L556.5 598.1L558.1 597.7L560.4 597.0L562.2 596.2L563.7 595.4L626.4 559.2L627.7 558.0L627.7 556.5L626.4 555.3L605.4 543.1L603.2 542.4L600.7 542.4L598.5 543.1ZM648.8 514.2L647.3 515.5L646.2 516.6L645.5 517.5L644.8 519.0L644.5 520.0L644.4 521.3L644.5 522.8L644.8 523.8L645.4 525.0L646.4 526.4L647.3 527.3L648.5 528.4L650.3 529.5L652.0 530.4L653.4 531.0L655.7 531.7L657.3 532.1L659.5 532.5L662.1 532.7L663.8 532.8L666.1 532.7L668.7 532.5L670.8 532.1L672.4 531.7L674.7 531.0L676.5 530.2L678.1 529.4L740.7 493.2L742.0 492.0L742.0 490.5L740.7 489.3L719.7 477.1L717.6 476.4L715.0 476.4L712.8 477.1L650.2 513.3ZM434.3 390.5L432.7 391.9L431.5 393.1L430.8 394.2L430.0 395.8L429.6 397.1L429.5 398.3L429.6 399.9L430.1 401.3L430.6 402.4L431.7 403.9L432.9 405.1L434.0 406.1L435.9 407.3L437.4 408.0L439.4 408.9L441.9 409.7L443.7 410.1L446.0 410.5L448.8 410.8L450.8 410.8L453.2 410.8L456.0 410.5L458.4 410.1L460.2 409.7L462.7 408.9L464.6 408.0L466.3 407.2L529.0 371.0L530.2 369.7L530.2 368.3L529.0 367.0L505.4 353.4L503.2 352.7L500.7 352.7L498.5 353.4L435.8 389.6ZM391.1 419.4L388.9 418.7L386.4 418.7L384.2 419.4L321.5 455.6L320.0 456.5L318.6 457.7L317.2 459.1L316.3 460.4L315.7 461.8L315.3 463.1L315.2 464.5L315.3 465.9L315.7 467.0L316.3 468.4L317.2 469.7L318.6 471.1L320.0 472.3L321.3 473.1L323.1 474.0L325.1 474.9L327.6 475.7L329.8 476.2L331.7 476.5L334.5 476.8L336.9 476.8L339.3 476.7L341.3 476.6L344.0 476.1L346.3 475.5L348.4 474.9L350.0 474.2L352.0 473.2L414.7 437.0L415.9 435.7L415.9 434.3L414.7 433.0Z" fill="none" stroke="#120c05" stroke-width=".9" stroke-linejoin="round"/>
<path d="M871.0 241.4L872.0 243.2L872.0 246.4L871.0 244.6ZM840.5 250.7L840.7 251.7L841.3 252.6L842.3 253.4L843.7 254.0L843.7 257.2L842.3 256.6L841.3 255.8L840.7 254.9L840.5 253.9ZM876.3 250.3L877.0 251.4L877.0 254.6L876.3 253.5ZM908.6 254.7L910.0 255.3L911.2 256.1L912.4 257.1L913.7 258.7L915.0 260.7L916.2 263.1L917.2 265.6L918.0 268.1L918.4 270.5L918.4 273.7L918.0 271.3L917.2 268.8L916.2 266.3L915.0 263.9L913.7 261.9L912.4 260.3L911.2 259.3L910.0 258.5L908.6 257.9ZM847.2 309.0L856.8 318.0L856.8 321.2L847.2 312.2Z" fill="#94673a" stroke="#94673a" stroke-width=".6"/><path d="M871.0 244.6L872.0 246.4L872.0 251.2L871.0 249.4ZM840.5 253.9L840.7 254.9L841.3 255.8L842.3 256.6L843.7 257.2L843.7 262.0L842.3 261.4L841.3 260.6L840.7 259.7L840.5 258.7ZM876.3 253.5L877.0 254.6L877.0 259.4L876.3 258.3ZM908.6 257.9L910.0 258.5L911.2 259.3L912.4 260.3L913.7 261.9L915.0 263.9L916.2 266.3L917.2 268.8L918.0 271.3L918.4 273.7L918.4 278.5L918.0 276.1L917.2 273.6L916.2 271.1L915.0 268.7L913.7 266.7L912.4 265.1L911.2 264.1L910.0 263.3L908.6 262.7ZM847.2 312.2L856.8 321.2L856.8 326.0L847.2 317.0Z" fill="#7a5530" stroke="#7a5530" stroke-width=".6"/><path d="M843.7 254.0L845.2 254.4L845.2 257.6L843.7 257.2ZM904.6 253.6L906.8 254.2L908.6 254.7L908.6 257.9L906.8 257.4L904.6 256.8Z" fill="#a07243" stroke="#a07243" stroke-width=".6"/><path d="M843.7 257.2L845.2 257.6L845.2 262.4L843.7 262.0ZM904.6 256.8L906.8 257.4L908.6 257.9L908.6 262.7L906.8 262.2L904.6 261.6Z" fill="#815a33" stroke="#815a33" stroke-width=".6"/><path d="M845.2 254.4L846.9 254.5L846.9 257.7L845.2 257.6ZM887.3 250.5L889.3 250.6L891.4 250.9L893.7 251.3L896.3 251.9L899.0 252.4L899.1 252.5L901.9 253.1L904.6 253.6L904.6 256.8L901.9 256.3L899.1 255.7L899.0 255.6L896.3 255.1L893.7 254.5L891.4 254.1L889.3 253.8L887.3 253.7Z" fill="#ac7d4d" stroke="#ac7d4d" stroke-width=".6"/><path d="M845.2 257.6L846.9 257.7L846.9 262.5L845.2 262.4ZM887.3 253.7L889.3 253.8L891.4 254.1L893.7 254.5L896.3 255.1L899.0 255.6L899.1 255.7L901.9 256.3L904.6 256.8L904.6 261.6L901.9 261.1L899.1 260.5L899.0 260.4L896.3 259.9L893.7 259.3L891.4 258.9L889.3 258.6L887.3 258.5Z" fill="#886036" stroke="#886036" stroke-width=".6"/><path d="M846.9 254.5L848.6 254.4L848.6 257.6L846.9 257.7ZM883.4 250.5L885.3 250.4L887.3 250.5L887.3 253.7L885.3 253.6L883.4 253.7Z" fill="#b88856" stroke="#b88856" stroke-width=".6"/><path d="M846.9 257.7L848.6 257.6L848.6 262.4L846.9 262.5ZM883.4 253.7L885.3 253.6L887.3 253.7L887.3 258.5L885.3 258.4L883.4 258.5Z" fill="#90663a" stroke="#90663a" stroke-width=".6"/><path d="M848.6 254.4L861.6 252.5L861.7 252.5L876.3 250.3L876.3 253.5L861.7 255.7L861.6 255.7L848.6 257.6ZM877.0 251.4L879.5 250.9L881.5 250.6L883.4 250.5L883.4 253.7L881.5 253.8L879.5 254.1L877.0 254.6Z" fill="#c3925f" stroke="#c3925f" stroke-width=".6"/><path d="M848.6 257.6L861.6 255.7L861.7 255.7L876.3 253.5L876.3 258.3L861.7 260.5L861.6 260.5L848.6 262.4ZM877.0 254.6L879.5 254.1L881.5 253.8L883.4 253.7L883.4 258.5L881.5 258.6L879.5 258.9L877.0 259.4Z" fill="#976b3d" stroke="#976b3d" stroke-width=".6"/><path d="M856.8 318.0L859.5 317.1L862.3 316.1L862.5 316.0L865.3 315.0L865.5 314.9L868.1 313.9L868.3 313.8L870.9 312.7L871.1 312.7L871.1 315.9L870.9 315.9L868.3 317.0L868.1 317.1L865.5 318.1L865.3 318.2L862.5 319.2L862.3 319.3L859.5 320.3L856.8 321.2ZM903.9 297.5L906.5 296.5L909.1 295.4L911.9 294.4L914.7 293.3L914.9 293.2L917.7 292.1L918.1 292.0L918.1 295.2L917.7 295.3L914.9 296.4L914.7 296.5L911.9 297.6L909.1 298.6L906.5 299.7L903.9 300.7Z" fill="#cf9d69" stroke="#cf9d69" stroke-width=".6"/><path d="M856.8 321.2L859.5 320.3L862.3 319.3L862.5 319.2L865.3 318.2L865.5 318.1L868.1 317.1L868.3 317.0L870.9 315.9L871.1 315.9L871.1 320.7L870.9 320.7L868.3 321.8L868.1 321.9L865.5 322.9L865.3 323.0L862.5 324.0L862.3 324.1L859.5 325.1L856.8 326.0ZM903.9 300.7L906.5 299.7L909.1 298.6L911.9 297.6L914.7 296.5L914.9 296.4L917.7 295.3L918.1 295.2L918.1 300.0L917.7 300.1L914.9 301.2L914.7 301.3L911.9 302.4L909.1 303.4L906.5 304.5L903.9 305.5Z" fill="#9e7040" stroke="#9e7040" stroke-width=".6"/><path d="M871.1 312.7L873.6 311.6L873.8 311.5L876.3 310.4L876.4 310.3L878.9 309.2L879.0 309.2L881.5 308.0L881.5 308.0L884.0 306.8L884.0 306.8L886.5 305.6L886.5 305.6L889.0 304.4L891.4 303.2L893.9 302.0L896.4 300.9L898.9 299.7L901.4 298.6L903.9 297.5L903.9 300.7L901.4 301.8L898.9 302.9L896.4 304.1L893.9 305.2L891.4 306.4L889.0 307.6L886.5 308.8L886.5 308.8L884.0 310.0L884.0 310.0L881.5 311.2L881.5 311.2L879.0 312.4L878.9 312.4L876.4 313.5L876.3 313.6L873.8 314.7L873.6 314.8L871.1 315.9ZM918.1 292.0L920.8 290.8L921.3 290.5L923.9 289.2L924.5 288.9L926.9 287.4L927.6 287.0L929.7 285.4L930.4 284.8L932.2 283.0L932.8 282.3L934.3 280.2L934.6 279.6L935.7 277.2L936.0 276.5L936.6 273.9L936.6 273.3L936.8 270.4L936.8 273.6L936.6 276.5L936.6 277.1L936.0 279.7L935.7 280.4L934.6 282.8L934.3 283.4L932.8 285.5L932.2 286.2L930.4 288.0L929.7 288.6L927.6 290.2L926.9 290.6L924.5 292.1L923.9 292.4L921.3 293.7L920.8 294.0L918.1 295.2Z" fill="#dba872" stroke="#dba872" stroke-width=".6"/><path d="M871.1 315.9L873.6 314.8L873.8 314.7L876.3 313.6L876.4 313.5L878.9 312.4L879.0 312.4L881.5 311.2L881.5 311.2L884.0 310.0L884.0 310.0L886.5 308.8L886.5 308.8L889.0 307.6L891.4 306.4L893.9 305.2L896.4 304.1L898.9 302.9L901.4 301.8L903.9 300.7L903.9 305.5L901.4 306.6L898.9 307.7L896.4 308.9L893.9 310.0L891.4 311.2L889.0 312.4L886.5 313.6L886.5 313.6L884.0 314.8L884.0 314.8L881.5 316.0L881.5 316.0L879.0 317.2L878.9 317.2L876.4 318.3L876.3 318.4L873.8 319.5L873.6 319.6L871.1 320.7ZM918.1 295.2L920.8 294.0L921.3 293.7L923.9 292.4L924.5 292.1L926.9 290.6L927.6 290.2L929.7 288.6L930.4 288.0L932.2 286.2L932.8 285.5L934.3 283.4L934.6 282.8L935.7 280.4L936.0 279.7L936.6 277.1L936.6 276.5L936.8 273.6L936.8 278.4L936.6 281.3L936.6 281.9L936.0 284.5L935.7 285.2L934.6 287.6L934.3 288.2L932.8 290.3L932.2 291.0L930.4 292.8L929.7 293.4L927.6 295.0L926.9 295.4L924.5 296.9L923.9 297.2L921.3 298.5L920.8 298.8L918.1 300.0Z" fill="#a57643" stroke="#a57643" stroke-width=".6"/><path d="M871.0 244.6L872.0 246.4M871.0 249.4L872.0 251.2M840.5 253.9L840.7 254.9L841.3 255.8L842.3 256.6L843.7 257.2M840.5 258.7L840.7 259.7L841.3 260.6L842.3 261.4L843.7 262.0M843.7 257.2L845.2 257.6M843.7 262.0L845.2 262.4M845.2 257.6L846.9 257.7M845.2 262.4L846.9 262.5M846.9 257.7L848.6 257.6M846.9 262.5L848.6 262.4M848.6 257.6L861.6 255.7L861.7 255.7L876.3 253.5M848.6 262.4L861.6 260.5L861.7 260.5L876.3 258.3M876.3 253.5L877.0 254.6M876.3 258.3L877.0 259.4M877.0 254.6L879.5 254.1L881.5 253.8L883.4 253.7M877.0 259.4L879.5 258.9L881.5 258.6L883.4 258.5M883.4 253.7L885.3 253.6L887.3 253.7M883.4 258.5L885.3 258.4L887.3 258.5M887.3 253.7L889.3 253.8L891.4 254.1L893.7 254.5L896.3 255.1L899.0 255.6L899.1 255.7L901.9 256.3L904.6 256.8M887.3 258.5L889.3 258.6L891.4 258.9L893.7 259.3L896.3 259.9L899.0 260.4L899.1 260.5L901.9 261.1L904.6 261.6M904.6 256.8L906.8 257.4L908.6 257.9M904.6 261.6L906.8 262.2L908.6 262.7M908.6 257.9L910.0 258.5L911.2 259.3L912.4 260.3L913.7 261.9L915.0 263.9L916.2 266.3L917.2 268.8L918.0 271.3L918.4 273.7M908.6 262.7L910.0 263.3L911.2 264.1L912.4 265.1L913.7 266.7L915.0 268.7L916.2 271.1L917.2 273.6L918.0 276.1L918.4 278.5M847.2 312.2L856.8 321.2M847.2 317.0L856.8 326.0M856.8 321.2L859.5 320.3L862.3 319.3L862.5 319.2L865.3 318.2L865.5 318.1L868.1 317.1L868.3 317.0L870.9 315.9L871.1 315.9M856.8 326.0L859.5 325.1L862.3 324.1L862.5 324.0L865.3 323.0L865.5 322.9L868.1 321.9L868.3 321.8L870.9 320.7L871.1 320.7M871.1 315.9L873.6 314.8L873.8 314.7L876.3 313.6L876.4 313.5L878.9 312.4L879.0 312.4L881.5 311.2L881.5 311.2L884.0 310.0L884.0 310.0L886.5 308.8L886.5 308.8L889.0 307.6L891.4 306.4L893.9 305.2L896.4 304.1L898.9 302.9L901.4 301.8L903.9 300.7M871.1 320.7L873.6 319.6L873.8 319.5L876.3 318.4L876.4 318.3L878.9 317.2L879.0 317.2L881.5 316.0L881.5 316.0L884.0 314.8L884.0 314.8L886.5 313.6L886.5 313.6L889.0 312.4L891.4 311.2L893.9 310.0L896.4 308.9L898.9 307.7L901.4 306.6L903.9 305.5M903.9 300.7L906.5 299.7L909.1 298.6L911.9 297.6L914.7 296.5L914.9 296.4L917.7 295.3L918.1 295.2M903.9 305.5L906.5 304.5L909.1 303.4L911.9 302.4L914.7 301.3L914.9 301.2L917.7 300.1L918.1 300.0M918.1 295.2L920.8 294.0L921.3 293.7L923.9 292.4L924.5 292.1L926.9 290.6L927.6 290.2L929.7 288.6L930.4 288.0L932.2 286.2L932.8 285.5L934.3 283.4L934.6 282.8L935.7 280.4L936.0 279.7L936.6 277.1L936.6 276.5L936.8 273.6M918.1 300.0L920.8 298.8L921.3 298.5L923.9 297.2L924.5 296.9L926.9 295.4L927.6 295.0L929.7 293.4L930.4 292.8L932.2 291.0L932.8 290.3L934.3 288.2L934.6 287.6L935.7 285.2L936.0 284.5L936.6 281.9L936.6 281.3L936.8 278.4M871.0 241.4v8.0M872.0 243.2v8.0M840.5 250.7v8.0M876.3 250.3v8.0M877.0 251.4v8.0M918.4 270.5v8.0M847.2 309.0v8.0M856.8 318.0v8.0M936.8 270.4v8.0" stroke="#120c05" stroke-width="0.9" fill="none" stroke-linecap="round"/>
<path d="M874.6 240.7L877.4 240.3L878.3 240.2L881.1 239.9L882.0 239.9L884.9 239.8L885.8 239.8L888.6 239.9L889.5 239.9L892.3 240.2L893.1 240.3L895.9 240.6L896.5 240.7L899.3 241.2L899.6 241.3L902.4 241.9L902.6 241.9L905.4 242.5L908.2 243.1L908.3 243.1L911.1 243.7L911.5 243.8L914.4 244.5L915.2 244.7L917.9 245.6L919.0 246.0L921.5 247.1L922.7 247.6L925.0 249.0L926.1 249.8L928.1 251.6L928.8 252.2L930.5 254.4L930.9 254.9L932.4 257.3L932.6 257.6L933.9 260.3L934.0 260.5L935.2 263.3L935.3 263.6L936.2 266.5L936.3 266.9L936.7 269.8L936.8 270.4L936.6 273.3L936.6 273.9L936.0 276.5L935.7 277.2L934.6 279.6L934.3 280.2L932.8 282.3L932.2 283.0L930.4 284.8L929.7 285.4L927.6 287.0L926.9 287.4L924.5 288.9L923.9 289.2L921.3 290.5L920.8 290.8L918.1 292.0L917.7 292.1L914.9 293.2L914.7 293.3L911.9 294.4L909.1 295.4L906.5 296.5L903.9 297.5L901.4 298.6L898.9 299.7L896.4 300.9L893.9 302.0L891.4 303.2L889.0 304.4L886.5 305.6L886.5 305.6L884.0 306.8L884.0 306.8L881.5 308.0L881.5 308.0L879.0 309.2L878.9 309.2L876.4 310.3L876.3 310.4L873.8 311.5L873.6 311.6L871.1 312.7L870.9 312.7L868.3 313.8L868.1 313.9L865.5 314.9L865.3 315.0L862.5 316.0L862.3 316.1L859.5 317.1L856.8 318.0L847.2 309.0L850.0 308.0L850.0 308.0L852.7 307.1L855.2 306.1L857.7 305.1L860.2 304.1L862.6 303.1L865.0 302.0L867.4 300.9L869.9 299.8L872.3 298.6L874.7 297.4L877.2 296.2L877.2 296.2L879.7 295.0L879.8 295.0L882.3 293.8L882.3 293.8L884.8 292.6L884.9 292.6L887.5 291.4L887.6 291.4L890.2 290.2L890.3 290.2L893.0 289.0L893.1 288.9L895.8 287.8L896.0 287.8L898.8 286.7L898.9 286.6L901.8 285.5L904.6 284.5L907.1 283.4L909.5 282.4L911.5 281.4L913.3 280.3L914.8 279.2L916.0 278.0L917.0 276.5L917.8 274.8L918.3 272.8L918.4 270.5L918.0 268.1L917.2 265.6L916.2 263.1L915.0 260.7L913.7 258.7L912.4 257.1L911.2 256.1L910.0 255.3L908.6 254.7L906.8 254.2L904.6 253.6L901.9 253.1L899.1 252.5L899.0 252.4L896.3 251.9L893.7 251.3L891.4 250.9L889.3 250.6L887.3 250.5L885.3 250.4L883.4 250.5L881.5 250.6L879.5 250.9L877.0 251.4L876.3 250.3L861.7 252.5L861.6 252.5L848.6 254.4L846.9 254.5L845.2 254.4L843.7 254.0L842.3 253.4L841.3 252.6L840.7 251.7L840.5 250.7L840.8 249.8L841.4 248.9L842.5 248.1L843.8 247.5L845.4 247.2L858.4 245.3L872.0 243.2L871.0 241.4L873.8 240.8Z" fill="#f1c48c" stroke="#120c05" stroke-width="1" stroke-linejoin="round" fill-rule="evenodd"/>
<clipPath id="c2"><path d="M877.9 241.7L878.7 241.6L881.4 241.3L882.2 241.3L884.9 241.2L885.7 241.2L888.4 241.3L889.2 241.3L891.9 241.6L892.6 241.6L895.3 242.0L895.8 242.1L898.5 242.6L898.8 242.6L901.6 243.2L901.7 243.2L904.5 243.8L907.4 244.4L907.4 244.4L910.3 245.0L910.6 245.1L913.4 245.8L914.0 246.0L916.6 246.8L917.6 247.1L920.0 248.2L921.0 248.7L923.2 250.0L924.1 250.6L926.0 252.3L926.6 252.9L928.3 255.0L928.6 255.4L930.1 257.8L930.2 258.0L931.5 260.7L931.6 260.9L932.8 263.6L932.9 263.9L933.7 266.7L933.8 267.1L934.3 269.9L934.3 270.4L934.2 273.2L934.1 273.7L933.5 276.3L933.3 276.9L932.3 279.2L932.0 279.7L930.5 281.7L930.1 282.3L928.3 284.1L927.7 284.5L925.7 286.1L925.1 286.5L922.8 287.9L922.3 288.2L919.7 289.5L919.3 289.7L916.6 290.8L916.3 291.0L913.5 292.1L913.4 292.1L910.5 293.2L907.7 294.3L905.1 295.3L902.4 296.4L899.9 297.5L897.3 298.6L894.8 299.8L892.4 300.9L889.9 302.1L887.4 303.3L884.9 304.5L882.5 305.7L882.4 305.7L880.0 306.9L879.9 306.9L877.4 308.1L877.4 308.1L874.9 309.2L874.8 309.3L872.3 310.4L872.2 310.4L869.6 311.5L869.5 311.6L866.9 312.7L866.7 312.7L864.1 313.8L863.9 313.8L861.2 314.8L861.0 314.9L858.3 315.9L857.6 316.1L854.9 313.6L855.6 313.3L858.4 312.3L858.4 312.3L861.2 311.3L861.2 311.3L863.9 310.3L863.9 310.2L866.5 309.2L866.5 309.2L869.1 308.0L869.1 308.0L871.7 306.9L871.7 306.9L874.2 305.8L874.2 305.7L876.7 304.6L876.7 304.6L879.2 303.4L879.2 303.4L881.6 302.2L881.6 302.2L884.1 301.0L886.6 299.8L889.1 298.6L891.6 297.5L894.2 296.3L896.8 295.1L899.4 294.0L902.1 292.9L904.9 291.8L907.7 290.7L910.6 289.6L910.6 289.6L913.4 288.5L913.5 288.5L916.2 287.3L916.3 287.2L918.9 285.9L919.0 285.9L921.4 284.4L921.5 284.3L923.7 282.7L923.8 282.6L925.7 280.8L925.7 280.7L927.2 278.6L927.3 278.4L928.4 276.1L928.4 276.0L929.0 273.3L929.1 273.2L929.2 270.3L929.2 270.2L928.7 267.3L928.7 267.2L927.8 264.4L927.8 264.3L926.6 261.5L926.6 261.5L925.3 258.8L925.2 258.8L923.7 256.3L923.7 256.3L921.9 254.1L921.8 254.0L919.7 252.2L919.6 252.2L919.6 252.1L917.2 250.7L917.1 250.6L917.0 250.6L914.5 249.5L914.3 249.4L911.5 248.6L911.4 248.5L908.6 247.8L908.5 247.8L905.6 247.2L905.6 247.2L902.8 246.6L899.9 246.0L899.9 246.0L897.1 245.4L897.0 245.4L894.2 244.9L894.1 244.9L891.3 244.5L891.2 244.5L888.4 244.3L888.2 244.3L885.4 244.2L885.2 244.2L882.4 244.3L882.3 244.3L879.4 244.5L879.3 244.5L876.4 244.9L876.3 245.0L873.5 245.5L874.5 247.3L877.3 246.7L880.0 246.3L882.6 246.1L885.3 246.0L888.0 246.1L890.7 246.3L893.4 246.7L896.1 247.2L898.8 247.7L901.7 248.3L901.7 248.3L904.5 248.9L907.4 249.5L910.1 250.2L912.7 251.0L915.0 252.0L917.2 253.3L919.1 255.0L920.8 257.0L922.2 259.4L923.5 262.0L924.7 264.7L925.5 267.5L926.0 270.3L925.9 273.1L925.3 275.7L924.3 277.9L922.8 279.9L921.1 281.6L919.1 283.2L916.8 284.6L914.3 285.8L911.6 287.0L908.8 288.1L906.0 289.2L903.1 290.3L903.1 290.3L900.3 291.4L900.3 291.4L897.5 292.5L897.5 292.5L894.9 293.7L894.8 293.7L892.2 294.8L892.2 294.8L889.6 296.0L889.6 296.0L887.1 297.2L887.1 297.2L884.6 298.4L884.6 298.4L882.1 299.6L882.1 299.6L879.6 300.8L877.1 302.0L874.7 303.2L872.2 304.3L869.7 305.5L867.2 306.6L864.6 307.7L862.1 308.7L859.4 309.8L856.7 310.8L854.0 311.7L854.0 311.7L853.3 312.0L850.6 309.4L851.3 309.2L854.0 308.3L856.6 307.3L859.1 306.3L861.6 305.3L864.1 304.2L866.5 303.1L869.0 302.0L871.4 300.9L873.9 299.7L876.3 298.5L878.8 297.3L881.3 296.1L881.3 296.1L883.8 294.9L883.9 294.9L886.4 293.7L886.5 293.7L889.0 292.5L889.1 292.5L891.7 291.3L891.8 291.3L894.4 290.1L894.6 290.1L897.3 289.0L897.4 288.9L900.2 287.8L900.3 287.8L903.1 286.7L905.9 285.6L908.6 284.6L911.0 283.5L913.2 282.4L915.1 281.2L916.8 280.0L918.2 278.6L919.4 277.0L920.2 275.1L920.7 272.9L920.8 270.4L920.4 267.9L919.6 265.3L918.6 262.7L917.3 260.3L916.0 258.2L914.6 256.4L913.1 255.2L911.6 254.3L909.9 253.5L907.9 252.9L905.5 252.3L902.7 251.7L899.9 251.1L899.9 251.1L897.1 250.5L894.5 250.0L892.0 249.6L889.7 249.2L887.5 249.1L885.3 249.0L883.1 249.1L881.0 249.2L878.8 249.6L878.5 249.6L877.9 248.6L861.1 251.2L861.0 251.2L848.1 253.0L846.9 253.1L845.9 253.0L844.9 252.8L844.1 252.4L843.5 251.9L843.1 251.4L843.0 250.8L843.1 250.2L843.5 249.6L844.2 249.1L845.0 248.8L846.2 248.5L859.0 246.6L875.2 244.1L874.1 242.3L874.5 242.2L875.2 242.1Z" clip-rule="evenodd"/></clipPath>
<g clip-path="url(#c2)">
<path d="M877.9 241.7L878.7 241.6L881.4 241.3L882.2 241.3L884.9 241.2L885.7 241.2L888.4 241.3L889.2 241.3L891.9 241.6L892.6 241.6L895.3 242.0L895.8 242.1L898.5 242.6L898.8 242.6L901.6 243.2L901.7 243.2L904.5 243.8L907.4 244.4L907.4 244.4L910.3 245.0L910.6 245.1L913.4 245.8L914.0 246.0L916.6 246.8L917.6 247.1L920.0 248.2L921.0 248.7L923.2 250.0L924.1 250.6L926.0 252.3L926.6 252.9L928.3 255.0L928.6 255.4L930.1 257.8L930.2 258.0L931.5 260.7L931.6 260.9L932.8 263.6L932.9 263.9L933.7 266.7L933.8 267.1L934.3 269.9L934.3 270.4L934.2 273.2L934.1 273.7L933.5 276.3L933.3 276.9L932.3 279.2L932.0 279.7L930.5 281.7L930.1 282.3L928.3 284.1L927.7 284.5L925.7 286.1L925.1 286.5L922.8 287.9L922.3 288.2L919.7 289.5L919.3 289.7L916.6 290.8L916.3 291.0L913.5 292.1L913.4 292.1L910.5 293.2L907.7 294.3L905.1 295.3L902.4 296.4L899.9 297.5L897.3 298.6L894.8 299.8L892.4 300.9L889.9 302.1L887.4 303.3L884.9 304.5L882.5 305.7L882.4 305.7L880.0 306.9L879.9 306.9L877.4 308.1L877.4 308.1L874.9 309.2L874.8 309.3L872.3 310.4L872.2 310.4L869.6 311.5L869.5 311.6L866.9 312.7L866.7 312.7L864.1 313.8L863.9 313.8L861.2 314.8L861.0 314.9L858.3 315.9L857.6 316.1L854.9 313.6L855.6 313.3L858.4 312.3L858.4 312.3L861.2 311.3L861.2 311.3L863.9 310.3L863.9 310.2L866.5 309.2L866.5 309.2L869.1 308.0L869.1 308.0L871.7 306.9L871.7 306.9L874.2 305.8L874.2 305.7L876.7 304.6L876.7 304.6L879.2 303.4L879.2 303.4L881.6 302.2L881.6 302.2L884.1 301.0L886.6 299.8L889.1 298.6L891.6 297.5L894.2 296.3L896.8 295.1L899.4 294.0L902.1 292.9L904.9 291.8L907.7 290.7L910.6 289.6L910.6 289.6L913.4 288.5L913.5 288.5L916.2 287.3L916.3 287.2L918.9 285.9L919.0 285.9L921.4 284.4L921.5 284.3L923.7 282.7L923.8 282.6L925.7 280.8L925.7 280.7L927.2 278.6L927.3 278.4L928.4 276.1L928.4 276.0L929.0 273.3L929.1 273.2L929.2 270.3L929.2 270.2L928.7 267.3L928.7 267.2L927.8 264.4L927.8 264.3L926.6 261.5L926.6 261.5L925.3 258.8L925.2 258.8L923.7 256.3L923.7 256.3L921.9 254.1L921.8 254.0L919.7 252.2L919.6 252.2L919.6 252.1L917.2 250.7L917.1 250.6L917.0 250.6L914.5 249.5L914.3 249.4L911.5 248.6L911.4 248.5L908.6 247.8L908.5 247.8L905.6 247.2L905.6 247.2L902.8 246.6L899.9 246.0L899.9 246.0L897.1 245.4L897.0 245.4L894.2 244.9L894.1 244.9L891.3 244.5L891.2 244.5L888.4 244.3L888.2 244.3L885.4 244.2L885.2 244.2L882.4 244.3L882.3 244.3L879.4 244.5L879.3 244.5L876.4 244.9L876.3 245.0L873.5 245.5L874.5 247.3L877.3 246.7L880.0 246.3L882.6 246.1L885.3 246.0L888.0 246.1L890.7 246.3L893.4 246.7L896.1 247.2L898.8 247.7L901.7 248.3L901.7 248.3L904.5 248.9L907.4 249.5L910.1 250.2L912.7 251.0L915.0 252.0L917.2 253.3L919.1 255.0L920.8 257.0L922.2 259.4L923.5 262.0L924.7 264.7L925.5 267.5L926.0 270.3L925.9 273.1L925.3 275.7L924.3 277.9L922.8 279.9L921.1 281.6L919.1 283.2L916.8 284.6L914.3 285.8L911.6 287.0L908.8 288.1L906.0 289.2L903.1 290.3L903.1 290.3L900.3 291.4L900.3 291.4L897.5 292.5L897.5 292.5L894.9 293.7L894.8 293.7L892.2 294.8L892.2 294.8L889.6 296.0L889.6 296.0L887.1 297.2L887.1 297.2L884.6 298.4L884.6 298.4L882.1 299.6L882.1 299.6L879.6 300.8L877.1 302.0L874.7 303.2L872.2 304.3L869.7 305.5L867.2 306.6L864.6 307.7L862.1 308.7L859.4 309.8L856.7 310.8L854.0 311.7L854.0 311.7L853.3 312.0L850.6 309.4L851.3 309.2L854.0 308.3L856.6 307.3L859.1 306.3L861.6 305.3L864.1 304.2L866.5 303.1L869.0 302.0L871.4 300.9L873.9 299.7L876.3 298.5L878.8 297.3L881.3 296.1L881.3 296.1L883.8 294.9L883.9 294.9L886.4 293.7L886.5 293.7L889.0 292.5L889.1 292.5L891.7 291.3L891.8 291.3L894.4 290.1L894.6 290.1L897.3 289.0L897.4 288.9L900.2 287.8L900.3 287.8L903.1 286.7L905.9 285.6L908.6 284.6L911.0 283.5L913.2 282.4L915.1 281.2L916.8 280.0L918.2 278.6L919.4 277.0L920.2 275.1L920.7 272.9L920.8 270.4L920.4 267.9L919.6 265.3L918.6 262.7L917.3 260.3L916.0 258.2L914.6 256.4L913.1 255.2L911.6 254.3L909.9 253.5L907.9 252.9L905.5 252.3L902.7 251.7L899.9 251.1L899.9 251.1L897.1 250.5L894.5 250.0L892.0 249.6L889.7 249.2L887.5 249.1L885.3 249.0L883.1 249.1L881.0 249.2L878.8 249.6L878.5 249.6L877.9 248.6L861.1 251.2L861.0 251.2L848.1 253.0L846.9 253.1L845.9 253.0L844.9 252.8L844.1 252.4L843.5 251.9L843.1 251.4L843.0 250.8L843.1 250.2L843.5 249.6L844.2 249.1L845.0 248.8L846.2 248.5L859.0 246.6L875.2 244.1L874.1 242.3L874.5 242.2L875.2 242.1Z" fill="#a47647" fill-rule="evenodd"/>
<path d="M875.2 244.1L859.0 246.6L846.2 248.5L846.2 250.9L859.0 249.0L875.2 246.5ZM882.6 246.1L880.0 246.3L877.3 246.7L874.5 247.3L874.5 249.7L877.3 249.1L880.0 248.7L882.6 248.5ZM881.4 241.3L878.7 241.6L877.9 241.7L875.2 242.1L874.5 242.2L874.1 242.3L874.1 244.7L874.5 244.6L875.2 244.5L877.9 244.1L878.7 244.0L881.4 243.7Z" fill="#b28250" stroke="#b28250" stroke-width=".6"/><path d="M846.2 248.5L845.0 248.8L845.0 251.2L846.2 250.9ZM908.6 284.6L905.9 285.6L903.1 286.7L900.3 287.8L900.2 287.8L897.4 288.9L897.3 289.0L894.6 290.1L894.6 292.5L897.3 291.4L897.4 291.3L900.2 290.2L900.3 290.2L903.1 289.1L905.9 288.0L908.6 287.0ZM861.6 305.3L859.1 306.3L856.6 307.3L854.0 308.3L851.3 309.2L850.6 309.4L850.6 311.8L851.3 311.6L854.0 310.7L856.6 309.7L859.1 308.7L861.6 307.7ZM913.5 288.5L913.4 288.5L910.6 289.6L910.6 289.6L907.7 290.7L904.9 291.8L902.1 292.9L899.4 294.0L899.4 296.4L902.1 295.3L904.9 294.2L907.7 293.1L910.6 292.0L910.6 292.0L913.4 290.9L913.5 290.9ZM866.5 309.2L866.5 309.2L863.9 310.2L863.9 310.3L861.2 311.3L861.2 311.3L858.4 312.3L858.4 312.3L855.6 313.3L854.9 313.6L854.9 316.0L855.6 315.7L858.4 314.7L858.4 314.7L861.2 313.7L861.2 313.7L863.9 312.7L863.9 312.6L866.5 311.6L866.5 311.6Z" fill="#bb8a56" stroke="#bb8a56" stroke-width=".6"/><path d="M845.0 248.8L844.2 249.1L843.5 249.6L843.1 250.2L843.0 250.8L843.0 253.2L843.1 252.6L843.5 252.0L844.2 251.5L845.0 251.2ZM920.8 270.4L920.7 272.9L920.2 275.1L919.4 277.0L918.2 278.6L916.8 280.0L915.1 281.2L913.2 282.4L911.0 283.5L908.6 284.6L908.6 287.0L911.0 285.9L913.2 284.8L915.1 283.6L916.8 282.4L918.2 281.0L919.4 279.4L920.2 277.5L920.7 275.3L920.8 272.8ZM894.6 290.1L894.4 290.1L891.8 291.3L891.7 291.3L889.1 292.5L889.0 292.5L886.5 293.7L886.4 293.7L883.9 294.9L883.8 294.9L881.3 296.1L881.3 296.1L878.8 297.3L876.3 298.5L873.9 299.7L871.4 300.9L869.0 302.0L866.5 303.1L864.1 304.2L861.6 305.3L861.6 307.7L864.1 306.6L866.5 305.5L869.0 304.4L871.4 303.3L873.9 302.1L876.3 300.9L878.8 299.7L881.3 298.5L881.3 298.5L883.8 297.3L883.9 297.3L886.4 296.1L886.5 296.1L889.0 294.9L889.1 294.9L891.7 293.7L891.8 293.7L894.4 292.5L894.6 292.5ZM929.2 270.3L929.1 273.2L929.0 273.3L928.4 276.0L928.4 276.1L927.3 278.4L927.2 278.6L925.7 280.7L925.7 280.8L923.8 282.6L923.7 282.7L921.5 284.3L921.4 284.4L919.0 285.9L918.9 285.9L916.3 287.2L916.2 287.3L913.5 288.5L913.5 290.9L916.2 289.7L916.3 289.6L918.9 288.3L919.0 288.3L921.4 286.8L921.5 286.7L923.7 285.1L923.8 285.0L925.7 283.2L925.7 283.1L927.2 281.0L927.3 280.8L928.4 278.5L928.4 278.4L929.0 275.7L929.1 275.6L929.2 272.7ZM899.4 294.0L896.8 295.1L894.2 296.3L891.6 297.5L889.1 298.6L886.6 299.8L884.1 301.0L881.6 302.2L881.6 302.2L879.2 303.4L879.2 303.4L876.7 304.6L876.7 304.6L874.2 305.7L874.2 305.8L871.7 306.9L871.7 306.9L869.1 308.0L869.1 308.0L866.5 309.2L866.5 311.6L869.1 310.4L869.1 310.4L871.7 309.3L871.7 309.3L874.2 308.2L874.2 308.1L876.7 307.0L876.7 307.0L879.2 305.8L879.2 305.8L881.6 304.6L881.6 304.6L884.1 303.4L886.6 302.2L889.1 301.0L891.6 299.9L894.2 298.7L896.8 297.5L899.4 296.4Z" fill="#c4915c" stroke="#c4915c" stroke-width=".6"/><path d="M926.0 270.3L925.5 267.5L924.7 264.7L923.5 262.0L922.2 259.4L920.8 257.0L919.1 255.0L917.2 253.3L915.0 252.0L912.7 251.0L912.7 253.4L915.0 254.4L917.2 255.7L919.1 257.4L920.8 259.4L922.2 261.8L923.5 264.4L924.7 267.1L925.5 269.9L926.0 272.7ZM874.5 247.3L873.5 245.5L873.5 247.9L874.5 249.7ZM934.3 270.4L934.3 269.9L933.8 267.1L933.7 266.7L932.9 263.9L932.8 263.6L931.6 260.9L931.5 260.7L930.2 258.0L930.1 257.8L928.6 255.4L928.3 255.0L926.6 252.9L926.0 252.3L924.1 250.6L923.2 250.0L921.0 248.7L920.0 248.2L917.6 247.1L917.6 249.5L920.0 250.6L921.0 251.1L923.2 252.4L924.1 253.0L926.0 254.7L926.6 255.3L928.3 257.4L928.6 257.8L930.1 260.2L930.2 260.4L931.5 263.1L931.6 263.3L932.8 266.0L932.9 266.3L933.7 269.1L933.8 269.5L934.3 272.3L934.3 272.8Z" fill="#8f6439" stroke="#8f6439" stroke-width=".6"/><path d="M912.7 251.0L910.1 250.2L907.4 249.5L907.4 251.9L910.1 252.6L912.7 253.4ZM917.6 247.1L916.6 246.8L914.0 246.0L913.4 245.8L910.6 245.1L910.3 245.0L910.3 247.4L910.6 247.5L913.4 248.2L914.0 248.4L916.6 249.2L917.6 249.5Z" fill="#986c3f" stroke="#986c3f" stroke-width=".6"/><path d="M907.4 249.5L904.5 248.9L901.7 248.3L901.7 248.3L898.8 247.7L896.1 247.2L893.4 246.7L890.7 246.3L888.0 246.1L888.0 248.5L890.7 248.7L893.4 249.1L896.1 249.6L898.8 250.1L901.7 250.7L901.7 250.7L904.5 251.3L907.4 251.9ZM910.3 245.0L907.4 244.4L907.4 244.4L904.5 243.8L901.7 243.2L901.6 243.2L898.8 242.6L898.5 242.6L895.8 242.1L895.3 242.0L892.6 241.6L891.9 241.6L889.2 241.3L889.2 243.7L891.9 244.0L892.6 244.0L895.3 244.4L895.8 244.5L898.5 245.0L898.8 245.0L901.6 245.6L901.7 245.6L904.5 246.2L907.4 246.8L907.4 246.8L910.3 247.4Z" fill="#a17345" stroke="#a17345" stroke-width=".6"/><path d="M888.0 246.1L885.3 246.0L882.6 246.1L882.6 248.5L885.3 248.4L888.0 248.5ZM889.2 241.3L888.4 241.3L885.7 241.2L884.9 241.2L882.2 241.3L881.4 241.3L881.4 243.7L882.2 243.7L884.9 243.6L885.7 243.6L888.4 243.7L889.2 243.7Z" fill="#aa7a4a" stroke="#aa7a4a" stroke-width=".6"/><path d="M875.2 246.5L859.0 249.0L846.2 250.9M846.2 250.9L845.0 251.2M845.0 251.2L844.2 251.5L843.5 252.0L843.1 252.6L843.0 253.2M920.8 272.8L920.7 275.3L920.2 277.5L919.4 279.4L918.2 281.0L916.8 282.4L915.1 283.6L913.2 284.8L911.0 285.9L908.6 287.0M908.6 287.0L905.9 288.0L903.1 289.1L900.3 290.2L900.2 290.2L897.4 291.3L897.3 291.4L894.6 292.5M894.6 292.5L894.4 292.5L891.8 293.7L891.7 293.7L889.1 294.9L889.0 294.9L886.5 296.1L886.4 296.1L883.9 297.3L883.8 297.3L881.3 298.5L881.3 298.5L878.8 299.7L876.3 300.9L873.9 302.1L871.4 303.3L869.0 304.4L866.5 305.5L864.1 306.6L861.6 307.7M861.6 307.7L859.1 308.7L856.6 309.7L854.0 310.7L851.3 311.6L850.6 311.8M926.0 272.7L925.5 269.9L924.7 267.1L923.5 264.4L922.2 261.8L920.8 259.4L919.1 257.4L917.2 255.7L915.0 254.4L912.7 253.4M912.7 253.4L910.1 252.6L907.4 251.9M907.4 251.9L904.5 251.3L901.7 250.7L901.7 250.7L898.8 250.1L896.1 249.6L893.4 249.1L890.7 248.7L888.0 248.5M888.0 248.5L885.3 248.4L882.6 248.5M882.6 248.5L880.0 248.7L877.3 249.1L874.5 249.7M874.5 249.7L873.5 247.9M929.2 272.7L929.1 275.6L929.0 275.7L928.4 278.4L928.4 278.5L927.3 280.8L927.2 281.0L925.7 283.1L925.7 283.2L923.8 285.0L923.7 285.1L921.5 286.7L921.4 286.8L919.0 288.3L918.9 288.3L916.3 289.6L916.2 289.7L913.5 290.9M913.5 290.9L913.4 290.9L910.6 292.0L910.6 292.0L907.7 293.1L904.9 294.2L902.1 295.3L899.4 296.4M899.4 296.4L896.8 297.5L894.2 298.7L891.6 299.9L889.1 301.0L886.6 302.2L884.1 303.4L881.6 304.6L881.6 304.6L879.2 305.8L879.2 305.8L876.7 307.0L876.7 307.0L874.2 308.1L874.2 308.2L871.7 309.3L871.7 309.3L869.1 310.4L869.1 310.4L866.5 311.6M866.5 311.6L866.5 311.6L863.9 312.6L863.9 312.7L861.2 313.7L861.2 313.7L858.4 314.7L858.4 314.7L855.6 315.7L854.9 316.0M934.3 272.8L934.3 272.3L933.8 269.5L933.7 269.1L932.9 266.3L932.8 266.0L931.6 263.3L931.5 263.1L930.2 260.4L930.1 260.2L928.6 257.8L928.3 257.4L926.6 255.3L926.0 254.7L924.1 253.0L923.2 252.4L921.0 251.1L920.0 250.6L917.6 249.5M917.6 249.5L916.6 249.2L914.0 248.4L913.4 248.2L910.6 247.5L910.3 247.4M910.3 247.4L907.4 246.8L907.4 246.8L904.5 246.2L901.7 245.6L901.6 245.6L898.8 245.0L898.5 245.0L895.8 244.5L895.3 244.4L892.6 244.0L891.9 244.0L889.2 243.7M889.2 243.7L888.4 243.7L885.7 243.6L884.9 243.6L882.2 243.7L881.4 243.7M881.4 243.7L878.7 244.0L877.9 244.1L875.2 244.5L874.5 244.6L874.1 244.7M874.1 242.3v2.4M875.2 244.1v2.4M843.0 250.8v2.4M920.8 270.4v2.4M850.6 309.4v2.4M926.0 270.3v2.4M874.5 247.3v2.4M873.5 245.5v2.4M929.2 270.3v2.4M854.9 313.6v2.4M934.3 270.4v2.4" stroke="#120c05" stroke-width="0.6" fill="none" stroke-linecap="round"/>
<path d="M934.2 273.2L934.1 273.7L933.5 276.3L933.3 276.9L932.3 279.2L932.0 279.7L930.5 281.7L930.1 282.3L928.3 284.1L927.7 284.5L925.7 286.1L925.1 286.5L922.8 287.9L922.3 288.2L919.7 289.5L919.3 289.7L916.6 290.8L916.3 291.0L913.5 292.1L913.4 292.1L910.5 293.2L907.7 294.3L905.1 295.3L902.4 296.4L899.9 297.5L897.3 298.6L894.8 299.8L892.4 300.9L889.9 302.1L887.4 303.3L884.9 304.5L882.5 305.7L882.4 305.7L880.0 306.9L879.9 306.9L877.4 308.1L877.4 308.1L874.9 309.2L874.8 309.3L872.3 310.4L872.2 310.4L869.6 311.5L869.5 311.6L866.9 312.7L866.7 312.7L864.1 313.8L863.9 313.8L861.2 314.8L861.0 314.9L858.3 315.9L857.6 316.1L856.8 315.3L858.4 314.7L858.4 314.7L861.2 313.7L861.2 313.7L863.9 312.7L863.9 312.6L866.5 311.6L866.5 311.6L869.1 310.4L869.1 310.4L871.7 309.3L871.7 309.3L874.2 308.2L874.2 308.1L876.7 307.0L876.7 307.0L879.2 305.8L879.2 305.8L881.6 304.6L881.6 304.6L884.1 303.4L886.6 302.2L889.1 301.0L891.6 299.9L894.2 298.7L896.8 297.5L899.4 296.4L902.1 295.3L904.9 294.2L907.7 293.1L910.6 292.0L910.6 292.0L913.4 290.9L913.5 290.9L916.2 289.7L916.3 289.6L918.9 288.3L919.0 288.3L921.4 286.8L921.5 286.7L923.7 285.1L923.8 285.0L925.7 283.2L925.7 283.1L927.2 281.0L927.3 280.8L928.4 278.5L928.4 278.4L929.0 275.7L929.1 275.6L929.2 272.7L929.2 272.6L929.1 272.2L929.2 270.3L929.2 270.2L928.7 267.3L928.7 267.2L927.8 264.4L927.8 264.3L926.6 261.5L926.6 261.5L925.3 258.8L925.2 258.8L923.7 256.3L923.7 256.3L921.9 254.1L921.8 254.0L919.7 252.2L919.6 252.2L919.6 252.1L917.2 250.7L917.1 250.6L917.0 250.6L914.5 249.5L914.3 249.4L911.5 248.6L911.4 248.5L908.6 247.8L908.5 247.8L905.6 247.2L905.6 247.2L902.8 246.6L899.9 246.0L899.9 246.0L897.1 245.4L897.0 245.4L894.2 244.9L894.1 244.9L891.3 244.5L891.2 244.5L888.4 244.3L888.2 244.3L885.4 244.2L885.2 244.2L882.4 244.3L882.3 244.3L879.4 244.5L879.3 244.5L876.4 244.9L876.3 245.0L874.5 245.3L874.1 244.7L874.5 244.6L875.2 244.5L877.9 244.1L878.7 244.0L881.4 243.7L882.2 243.7L884.9 243.6L885.7 243.6L888.4 243.7L889.2 243.7L891.9 244.0L892.6 244.0L895.3 244.4L895.8 244.5L898.5 245.0L898.8 245.0L901.6 245.6L901.7 245.6L904.5 246.2L907.4 246.8L907.4 246.8L910.3 247.4L910.6 247.5L913.4 248.2L914.0 248.4L916.6 249.2L917.6 249.5L920.0 250.6L921.0 251.1L923.2 252.4L924.1 253.0L926.0 254.7L926.6 255.3L928.3 257.4L928.6 257.8L930.1 260.2L930.2 260.4L931.5 263.1L931.6 263.3L932.8 266.0L932.9 266.3L933.7 269.1L933.8 269.5L934.2 272.1ZM854.9 313.6L855.6 313.3L858.4 312.3L858.4 312.3L861.2 311.3L861.2 311.3L863.9 310.3L863.9 310.2L866.5 309.2L866.5 309.2L869.1 308.0L869.1 308.0L871.7 306.9L871.7 306.9L874.2 305.8L874.2 305.7L876.7 304.6L876.7 304.6L879.2 303.4L879.2 303.4L881.6 302.2L881.6 302.2L884.1 301.0L886.6 299.8L889.1 298.6L891.6 297.5L894.2 296.3L896.8 295.1L899.4 294.0L902.1 292.9L904.9 291.8L907.7 290.7L910.6 289.6L910.6 289.6L913.4 288.5L913.5 288.5L915.7 287.5L914.3 288.2L911.6 289.4L908.8 290.5L906.0 291.6L903.1 292.7L903.1 292.7L900.3 293.8L900.3 293.8L897.5 294.9L897.5 294.9L894.9 296.1L894.8 296.1L892.2 297.2L892.2 297.2L889.6 298.4L889.6 298.4L887.1 299.6L887.1 299.6L884.6 300.8L884.6 300.8L882.1 302.0L882.1 302.0L879.6 303.2L877.1 304.4L874.7 305.6L872.2 306.7L869.7 307.9L867.2 309.0L864.6 310.1L862.1 311.1L859.4 312.2L856.7 313.2L855.1 313.7ZM874.5 247.3L877.3 246.7L880.0 246.3L882.6 246.1L885.3 246.0L888.0 246.1L890.7 246.3L893.4 246.7L896.1 247.2L898.8 247.7L901.7 248.3L901.7 248.3L904.5 248.9L907.4 249.5L910.1 250.2L912.7 251.0L915.0 252.0L915.7 252.4L914.5 251.9L914.3 251.8L911.5 251.0L911.4 250.9L908.6 250.2L908.5 250.2L905.6 249.6L905.6 249.6L902.8 249.0L899.9 248.4L899.9 248.4L897.1 247.8L897.0 247.8L894.2 247.3L894.1 247.3L891.3 246.9L891.2 246.9L888.4 246.7L888.2 246.7L885.4 246.6L885.2 246.6L882.4 246.7L882.3 246.7L879.4 246.9L879.3 246.9L876.4 247.3L876.3 247.4L873.5 247.9L874.2 249.1L861.1 251.2L861.0 251.2L848.1 253.0L846.9 253.1L845.9 253.0L844.9 252.8L844.1 252.4L843.6 252.0L844.2 251.5L845.0 251.2L846.2 250.9L859.0 249.0L874.2 246.7ZM925.9 273.1L925.3 275.7L924.3 277.9L922.8 279.9L921.1 281.6L919.1 283.2L916.8 284.6L914.3 285.8L911.6 287.0L908.8 288.1L906.0 289.2L903.1 290.3L903.1 290.3L900.3 291.4L900.3 291.4L897.5 292.5L897.5 292.5L894.9 293.7L894.8 293.7L892.2 294.8L892.2 294.8L889.6 296.0L889.6 296.0L887.1 297.2L887.1 297.2L884.6 298.4L884.6 298.4L882.1 299.6L882.1 299.6L879.6 300.8L877.1 302.0L874.7 303.2L872.2 304.3L869.7 305.5L867.2 306.6L864.6 307.7L862.1 308.7L859.4 309.8L856.7 310.8L854.0 311.7L854.0 311.7L853.3 312.0L852.4 311.2L854.0 310.7L856.6 309.7L859.1 308.7L861.6 307.7L864.1 306.6L866.5 305.5L869.0 304.4L871.4 303.3L873.9 302.1L876.3 300.9L878.8 299.7L881.3 298.5L881.3 298.5L883.8 297.3L883.9 297.3L886.4 296.1L886.5 296.1L889.0 294.9L889.1 294.9L891.7 293.7L891.8 293.7L894.4 292.5L894.6 292.5L897.3 291.4L897.4 291.3L900.2 290.2L900.3 290.2L903.1 289.1L905.9 288.0L908.6 287.0L911.0 285.9L913.2 284.8L915.1 283.6L916.8 282.4L918.2 281.0L919.4 279.4L920.2 277.5L920.7 275.3L920.8 272.8L920.8 272.4L920.8 270.4L920.4 267.9L919.6 265.3L918.6 262.7L917.3 260.3L916.0 258.2L914.6 256.4L913.1 255.2L911.6 254.3L909.9 253.5L907.9 252.9L905.5 252.3L902.7 251.7L899.9 251.1L899.9 251.1L897.1 250.5L894.5 250.0L892.0 249.6L889.7 249.2L887.5 249.1L885.3 249.0L883.1 249.1L881.0 249.2L878.8 249.6L878.5 249.6L878.2 249.0L880.0 248.7L882.6 248.5L885.3 248.4L888.0 248.5L890.7 248.7L893.4 249.1L896.1 249.6L898.8 250.1L901.7 250.7L901.7 250.7L904.5 251.3L907.4 251.9L910.1 252.6L912.7 253.4L915.0 254.4L917.2 255.7L919.1 257.4L920.8 259.4L922.2 261.8L923.5 264.4L924.7 267.1L925.5 269.9L925.9 272.3Z" fill="#f0c088" stroke="#120c05" stroke-width=".9" fill-rule="evenodd"/>
</g>
<path d="M877.9 241.7L878.7 241.6L881.4 241.3L882.2 241.3L884.9 241.2L885.7 241.2L888.4 241.3L889.2 241.3L891.9 241.6L892.6 241.6L895.3 242.0L895.8 242.1L898.5 242.6L898.8 242.6L901.6 243.2L901.7 243.2L904.5 243.8L907.4 244.4L907.4 244.4L910.3 245.0L910.6 245.1L913.4 245.8L914.0 246.0L916.6 246.8L917.6 247.1L920.0 248.2L921.0 248.7L923.2 250.0L924.1 250.6L926.0 252.3L926.6 252.9L928.3 255.0L928.6 255.4L930.1 257.8L930.2 258.0L931.5 260.7L931.6 260.9L932.8 263.6L932.9 263.9L933.7 266.7L933.8 267.1L934.3 269.9L934.3 270.4L934.2 273.2L934.1 273.7L933.5 276.3L933.3 276.9L932.3 279.2L932.0 279.7L930.5 281.7L930.1 282.3L928.3 284.1L927.7 284.5L925.7 286.1L925.1 286.5L922.8 287.9L922.3 288.2L919.7 289.5L919.3 289.7L916.6 290.8L916.3 291.0L913.5 292.1L913.4 292.1L910.5 293.2L907.7 294.3L905.1 295.3L902.4 296.4L899.9 297.5L897.3 298.6L894.8 299.8L892.4 300.9L889.9 302.1L887.4 303.3L884.9 304.5L882.5 305.7L882.4 305.7L880.0 306.9L879.9 306.9L877.4 308.1L877.4 308.1L874.9 309.2L874.8 309.3L872.3 310.4L872.2 310.4L869.6 311.5L869.5 311.6L866.9 312.7L866.7 312.7L864.1 313.8L863.9 313.8L861.2 314.8L861.0 314.9L858.3 315.9L857.6 316.1L854.9 313.6L855.6 313.3L858.4 312.3L858.4 312.3L861.2 311.3L861.2 311.3L863.9 310.3L863.9 310.2L866.5 309.2L866.5 309.2L869.1 308.0L869.1 308.0L871.7 306.9L871.7 306.9L874.2 305.8L874.2 305.7L876.7 304.6L876.7 304.6L879.2 303.4L879.2 303.4L881.6 302.2L881.6 302.2L884.1 301.0L886.6 299.8L889.1 298.6L891.6 297.5L894.2 296.3L896.8 295.1L899.4 294.0L902.1 292.9L904.9 291.8L907.7 290.7L910.6 289.6L910.6 289.6L913.4 288.5L913.5 288.5L916.2 287.3L916.3 287.2L918.9 285.9L919.0 285.9L921.4 284.4L921.5 284.3L923.7 282.7L923.8 282.6L925.7 280.8L925.7 280.7L927.2 278.6L927.3 278.4L928.4 276.1L928.4 276.0L929.0 273.3L929.1 273.2L929.2 270.3L929.2 270.2L928.7 267.3L928.7 267.2L927.8 264.4L927.8 264.3L926.6 261.5L926.6 261.5L925.3 258.8L925.2 258.8L923.7 256.3L923.7 256.3L921.9 254.1L921.8 254.0L919.7 252.2L919.6 252.2L919.6 252.1L917.2 250.7L917.1 250.6L917.0 250.6L914.5 249.5L914.3 249.4L911.5 248.6L911.4 248.5L908.6 247.8L908.5 247.8L905.6 247.2L905.6 247.2L902.8 246.6L899.9 246.0L899.9 246.0L897.1 245.4L897.0 245.4L894.2 244.9L894.1 244.9L891.3 244.5L891.2 244.5L888.4 244.3L888.2 244.3L885.4 244.2L885.2 244.2L882.4 244.3L882.3 244.3L879.4 244.5L879.3 244.5L876.4 244.9L876.3 245.0L873.5 245.5L874.5 247.3L877.3 246.7L880.0 246.3L882.6 246.1L885.3 246.0L888.0 246.1L890.7 246.3L893.4 246.7L896.1 247.2L898.8 247.7L901.7 248.3L901.7 248.3L904.5 248.9L907.4 249.5L910.1 250.2L912.7 251.0L915.0 252.0L917.2 253.3L919.1 255.0L920.8 257.0L922.2 259.4L923.5 262.0L924.7 264.7L925.5 267.5L926.0 270.3L925.9 273.1L925.3 275.7L924.3 277.9L922.8 279.9L921.1 281.6L919.1 283.2L916.8 284.6L914.3 285.8L911.6 287.0L908.8 288.1L906.0 289.2L903.1 290.3L903.1 290.3L900.3 291.4L900.3 291.4L897.5 292.5L897.5 292.5L894.9 293.7L894.8 293.7L892.2 294.8L892.2 294.8L889.6 296.0L889.6 296.0L887.1 297.2L887.1 297.2L884.6 298.4L884.6 298.4L882.1 299.6L882.1 299.6L879.6 300.8L877.1 302.0L874.7 303.2L872.2 304.3L869.7 305.5L867.2 306.6L864.6 307.7L862.1 308.7L859.4 309.8L856.7 310.8L854.0 311.7L854.0 311.7L853.3 312.0L850.6 309.4L851.3 309.2L854.0 308.3L856.6 307.3L859.1 306.3L861.6 305.3L864.1 304.2L866.5 303.1L869.0 302.0L871.4 300.9L873.9 299.7L876.3 298.5L878.8 297.3L881.3 296.1L881.3 296.1L883.8 294.9L883.9 294.9L886.4 293.7L886.5 293.7L889.0 292.5L889.1 292.5L891.7 291.3L891.8 291.3L894.4 290.1L894.6 290.1L897.3 289.0L897.4 288.9L900.2 287.8L900.3 287.8L903.1 286.7L905.9 285.6L908.6 284.6L911.0 283.5L913.2 282.4L915.1 281.2L916.8 280.0L918.2 278.6L919.4 277.0L920.2 275.1L920.7 272.9L920.8 270.4L920.4 267.9L919.6 265.3L918.6 262.7L917.3 260.3L916.0 258.2L914.6 256.4L913.1 255.2L911.6 254.3L909.9 253.5L907.9 252.9L905.5 252.3L902.7 251.7L899.9 251.1L899.9 251.1L897.1 250.5L894.5 250.0L892.0 249.6L889.7 249.2L887.5 249.1L885.3 249.0L883.1 249.1L881.0 249.2L878.8 249.6L878.5 249.6L877.9 248.6L861.1 251.2L861.0 251.2L848.1 253.0L846.9 253.1L845.9 253.0L844.9 252.8L844.1 252.4L843.5 251.9L843.1 251.4L843.0 250.8L843.1 250.2L843.5 249.6L844.2 249.1L845.0 248.8L846.2 248.5L859.0 246.6L875.2 244.1L874.1 242.3L874.5 242.2L875.2 242.1Z" fill="none" stroke="#120c05" stroke-width=".9" stroke-linejoin="round"/>
<path d="M468.1 292.5L469.9 294.7L472.4 295.8L472.4 299.0L469.9 297.9L468.1 295.7ZM747.6 327.8L750.4 329.0L753.3 330.3L756.1 331.5L756.1 334.7L753.3 333.5L750.4 332.2L747.6 331.0ZM764.8 334.6L775.4 341.9L775.4 345.1L764.8 337.8ZM779.8 342.9L783.5 344.5L786.5 346.6L789.0 349.2L790.9 352.1L792.4 355.4L793.6 358.9L794.5 362.5L795.3 366.2L795.9 369.9L796.4 373.6L796.8 377.3L797.2 381.1L797.7 384.8L798.2 388.5L798.7 392.1L799.4 395.7L800.2 399.3L801.2 402.8L802.4 406.2L803.8 409.6L805.5 412.9L807.3 416.1L809.3 419.3L811.4 422.5L813.5 425.6L815.8 428.7L818.1 431.7L820.4 434.7L822.7 437.7L825.0 440.7L827.2 443.7L829.3 446.7L831.3 449.6L833.3 452.6L835.3 455.6L837.4 458.7L839.5 461.7L841.8 464.8L844.2 468.0L846.6 471.2L848.8 474.4L850.4 477.7L851.2 481.1L851.2 484.3L850.4 480.9L848.8 477.6L846.6 474.4L844.2 471.2L841.8 468.0L839.5 464.9L837.4 461.9L835.3 458.8L833.3 455.8L831.3 452.8L829.3 449.9L827.2 446.9L825.0 443.9L822.7 440.9L820.4 437.9L818.1 434.9L815.8 431.9L813.5 428.8L811.4 425.7L809.3 422.5L807.3 419.3L805.5 416.1L803.8 412.8L802.4 409.4L801.2 406.0L800.2 402.5L799.4 398.9L798.7 395.3L798.2 391.7L797.7 388.0L797.2 384.3L796.8 380.5L796.4 376.8L795.9 373.1L795.3 369.4L794.5 365.7L793.6 362.1L792.4 358.6L790.9 355.3L789.0 352.4L786.5 349.8L783.5 347.7L779.8 346.1ZM839.7 507.5L841.0 510.8L843.4 513.6L846.6 515.5L846.6 518.7L843.4 516.8L841.0 514.0L839.7 510.7ZM838.0 419.7L839.4 429.6L839.4 432.8L838.0 422.9ZM822.0 400.0L826.6 405.0L829.5 409.2L829.5 412.4L826.6 408.2L822.0 403.2ZM653.1 306.0L655.0 311.9L655.0 315.1L653.1 309.2Z" fill="#94673a" stroke="#94673a" stroke-width=".6"/><path d="M468.1 295.7L469.9 297.9L472.4 299.0L472.4 304.0L469.9 302.9L468.1 300.7ZM747.6 331.0L750.4 332.2L753.3 333.5L756.1 334.7L756.1 339.7L753.3 338.5L750.4 337.2L747.6 336.0ZM764.8 337.8L775.4 345.1L775.4 350.1L764.8 342.8ZM779.8 346.1L783.5 347.7L786.5 349.8L789.0 352.4L790.9 355.3L792.4 358.6L793.6 362.1L794.5 365.7L795.3 369.4L795.9 373.1L796.4 376.8L796.8 380.5L797.2 384.3L797.7 388.0L798.2 391.7L798.7 395.3L799.4 398.9L800.2 402.5L801.2 406.0L802.4 409.4L803.8 412.8L805.5 416.1L807.3 419.3L809.3 422.5L811.4 425.7L813.5 428.8L815.8 431.9L818.1 434.9L820.4 437.9L822.7 440.9L825.0 443.9L827.2 446.9L829.3 449.9L831.3 452.8L833.3 455.8L835.3 458.8L837.4 461.9L839.5 464.9L841.8 468.0L844.2 471.2L846.6 474.4L848.8 477.6L850.4 480.9L851.2 484.3L851.2 489.3L850.4 485.9L848.8 482.6L846.6 479.4L844.2 476.2L841.8 473.0L839.5 469.9L837.4 466.9L835.3 463.8L833.3 460.8L831.3 457.8L829.3 454.9L827.2 451.9L825.0 448.9L822.7 445.9L820.4 442.9L818.1 439.9L815.8 436.9L813.5 433.8L811.4 430.7L809.3 427.5L807.3 424.3L805.5 421.1L803.8 417.8L802.4 414.4L801.2 411.0L800.2 407.5L799.4 403.9L798.7 400.3L798.2 396.7L797.7 393.0L797.2 389.3L796.8 385.5L796.4 381.8L795.9 378.1L795.3 374.4L794.5 370.7L793.6 367.1L792.4 363.6L790.9 360.3L789.0 357.4L786.5 354.8L783.5 352.7L779.8 351.1ZM839.7 510.7L841.0 514.0L843.4 516.8L846.6 518.7L846.6 523.7L843.4 521.8L841.0 519.0L839.7 515.7ZM838.0 422.9L839.4 432.8L839.4 437.8L838.0 427.9ZM822.0 403.2L826.6 408.2L829.5 412.4L829.5 417.4L826.6 413.2L822.0 408.2ZM653.1 309.2L655.0 315.1L655.0 320.1L653.1 314.2Z" fill="#7a5530" stroke="#7a5530" stroke-width=".6"/><path d="M472.4 295.8L475.2 296.4L475.2 299.6L472.4 299.0ZM524.1 290.1L527.2 290.3L530.2 290.7L533.2 291.2L536.2 291.7L539.2 292.3L539.2 295.5L536.2 294.9L533.2 294.4L530.2 293.9L527.2 293.5L524.1 293.3ZM581.2 302.5L584.2 303.2L587.2 303.8L590.2 304.4L593.2 305.0L596.2 305.5L599.3 306.1L602.3 306.6L605.3 307.1L608.3 307.7L611.4 308.2L614.4 308.8L617.4 309.4L620.4 310.0L623.4 310.6L626.5 311.2L626.5 314.4L623.4 313.8L620.4 313.2L617.4 312.6L614.4 312.0L611.4 311.4L608.3 310.9L605.3 310.3L602.3 309.8L599.3 309.3L596.2 308.7L593.2 308.2L590.2 307.6L587.2 307.0L584.2 306.4L581.2 305.7ZM653.5 317.5L656.5 318.2L659.5 318.8L662.5 319.3L665.6 319.8L668.6 320.2L671.6 320.6L674.7 320.9L677.7 321.2L677.7 324.4L674.7 324.1L671.6 323.8L668.6 323.4L665.6 323.0L662.5 322.5L659.5 322.0L656.5 321.4L653.5 320.7ZM720.9 321.7L724.0 321.9L727.0 322.2L730.0 322.6L733.0 323.2L736.0 323.8L736.0 327.0L733.0 326.4L730.0 325.8L727.0 325.4L724.0 325.1L720.9 324.9ZM815.2 399.0L822.0 400.0L822.0 403.2L815.2 402.2ZM616.8 299.4L630.4 300.8L630.4 304.0L616.8 302.6Z" fill="#ac7d4d" stroke="#ac7d4d" stroke-width=".6"/><path d="M472.4 299.0L475.2 299.6L475.2 304.6L472.4 304.0ZM524.1 293.3L527.2 293.5L530.2 293.9L533.2 294.4L536.2 294.9L539.2 295.5L539.2 300.5L536.2 299.9L533.2 299.4L530.2 298.9L527.2 298.5L524.1 298.3ZM581.2 305.7L584.2 306.4L587.2 307.0L590.2 307.6L593.2 308.2L596.2 308.7L599.3 309.3L602.3 309.8L605.3 310.3L608.3 310.9L611.4 311.4L614.4 312.0L617.4 312.6L620.4 313.2L623.4 313.8L626.5 314.4L626.5 319.4L623.4 318.8L620.4 318.2L617.4 317.6L614.4 317.0L611.4 316.4L608.3 315.9L605.3 315.3L602.3 314.8L599.3 314.3L596.2 313.7L593.2 313.2L590.2 312.6L587.2 312.0L584.2 311.4L581.2 310.7ZM653.5 320.7L656.5 321.4L659.5 322.0L662.5 322.5L665.6 323.0L668.6 323.4L671.6 323.8L674.7 324.1L677.7 324.4L677.7 329.4L674.7 329.1L671.6 328.8L668.6 328.4L665.6 328.0L662.5 327.5L659.5 327.0L656.5 326.4L653.5 325.7ZM720.9 324.9L724.0 325.1L727.0 325.4L730.0 325.8L733.0 326.4L736.0 327.0L736.0 332.0L733.0 331.4L730.0 330.8L727.0 330.4L724.0 330.1L720.9 329.9ZM815.2 402.2L822.0 403.2L822.0 408.2L815.2 407.2ZM616.8 302.6L630.4 304.0L630.4 309.0L616.8 307.6Z" fill="#886036" stroke="#886036" stroke-width=".6"/><path d="M475.2 296.4L478.2 296.5L481.2 296.3L481.2 299.5L478.2 299.7L475.2 299.6ZM515.0 290.1L518.1 289.9L521.1 289.9L524.1 290.1L524.1 293.3L521.1 293.1L518.1 293.1L515.0 293.3ZM677.7 321.2L680.8 321.3L683.9 321.4L687.0 321.5L690.1 321.5L693.2 321.5L696.3 321.5L699.3 321.4L702.4 321.4L705.5 321.4L708.6 321.3L711.7 321.4L714.8 321.4L717.8 321.5L720.9 321.7L720.9 324.9L717.8 324.7L714.8 324.6L711.7 324.6L708.6 324.5L705.5 324.6L702.4 324.6L699.3 324.6L696.3 324.7L693.2 324.7L690.1 324.7L687.0 324.7L683.9 324.6L680.8 324.5L677.7 324.4ZM850.2 516.4L854.0 516.1L854.0 519.3L850.2 519.6Z" fill="#b88856" stroke="#b88856" stroke-width=".6"/><path d="M475.2 299.6L478.2 299.7L481.2 299.5L481.2 304.5L478.2 304.7L475.2 304.6ZM515.0 293.3L518.1 293.1L521.1 293.1L524.1 293.3L524.1 298.3L521.1 298.1L518.1 298.1L515.0 298.3ZM677.7 324.4L680.8 324.5L683.9 324.6L687.0 324.7L690.1 324.7L693.2 324.7L696.3 324.7L699.3 324.6L702.4 324.6L705.5 324.6L708.6 324.5L711.7 324.6L714.8 324.6L717.8 324.7L720.9 324.9L720.9 329.9L717.8 329.7L714.8 329.6L711.7 329.6L708.6 329.5L705.5 329.6L702.4 329.6L699.3 329.6L696.3 329.7L693.2 329.7L690.1 329.7L687.0 329.7L683.9 329.6L680.8 329.5L677.7 329.4ZM850.2 519.6L854.0 519.3L854.0 524.3L850.2 524.6Z" fill="#90663a" stroke="#90663a" stroke-width=".6"/><path d="M481.2 296.3L484.3 295.9L487.4 295.3L490.5 294.7L493.6 294.1L493.6 297.3L490.5 297.9L487.4 298.5L484.3 299.1L481.2 299.5ZM499.8 292.7L502.8 292.0L505.9 291.4L508.9 290.9L512.0 290.4L515.0 290.1L515.0 293.3L512.0 293.6L508.9 294.1L505.9 294.6L502.8 295.2L499.8 295.9Z" fill="#c3925f" stroke="#c3925f" stroke-width=".6"/><path d="M481.2 299.5L484.3 299.1L487.4 298.5L490.5 297.9L493.6 297.3L493.6 302.3L490.5 302.9L487.4 303.5L484.3 304.1L481.2 304.5ZM499.8 295.9L502.8 295.2L505.9 294.6L508.9 294.1L512.0 293.6L515.0 293.3L515.0 298.3L512.0 298.6L508.9 299.1L505.9 299.6L502.8 300.2L499.8 300.9Z" fill="#976b3d" stroke="#976b3d" stroke-width=".6"/><path d="M493.6 294.1L496.7 293.4L499.8 292.7L499.8 295.9L496.7 296.6L493.6 297.3ZM854.0 516.1L857.7 515.0L857.7 518.2L854.0 519.3Z" fill="#cf9d69" stroke="#cf9d69" stroke-width=".6"/><path d="M493.6 297.3L496.7 296.6L499.8 295.9L499.8 300.9L496.7 301.6L493.6 302.3ZM854.0 519.3L857.7 518.2L857.7 523.2L854.0 524.3Z" fill="#9e7040" stroke="#9e7040" stroke-width=".6"/><path d="M539.2 292.3L542.3 293.0L545.3 293.7L548.3 294.5L551.3 295.2L554.2 296.0L557.2 296.7L560.2 297.5L563.2 298.2L566.2 299.0L569.2 299.7L572.2 300.4L575.2 301.1L578.2 301.8L581.2 302.5L581.2 305.7L578.2 305.0L575.2 304.3L572.2 303.6L569.2 302.9L566.2 302.2L563.2 301.4L560.2 300.7L557.2 299.9L554.2 299.2L551.3 298.4L548.3 297.7L545.3 296.9L542.3 296.2L539.2 295.5ZM626.5 311.2L629.5 311.9L632.5 312.6L635.5 313.3L638.5 314.0L641.5 314.7L644.5 315.5L647.5 316.2L650.5 316.9L653.5 317.5L653.5 320.7L650.5 320.1L647.5 319.4L644.5 318.7L641.5 317.9L638.5 317.2L635.5 316.5L632.5 315.8L629.5 315.1L626.5 314.4ZM736.0 323.8L738.9 324.6L741.9 325.5L744.7 326.6L747.6 327.8L747.6 331.0L744.7 329.8L741.9 328.7L738.9 327.8L736.0 327.0ZM756.1 331.5L759.0 332.7L761.9 333.8L764.8 334.6L764.8 337.8L761.9 337.0L759.0 335.9L756.1 334.7ZM775.4 341.9L779.8 342.9L779.8 346.1L775.4 345.1ZM846.6 515.5L850.2 516.4L850.2 519.6L846.6 518.7Z" fill="#a07243" stroke="#a07243" stroke-width=".6"/><path d="M539.2 295.5L542.3 296.2L545.3 296.9L548.3 297.7L551.3 298.4L554.2 299.2L557.2 299.9L560.2 300.7L563.2 301.4L566.2 302.2L569.2 302.9L572.2 303.6L575.2 304.3L578.2 305.0L581.2 305.7L581.2 310.7L578.2 310.0L575.2 309.3L572.2 308.6L569.2 307.9L566.2 307.2L563.2 306.4L560.2 305.7L557.2 304.9L554.2 304.2L551.3 303.4L548.3 302.7L545.3 301.9L542.3 301.2L539.2 300.5ZM626.5 314.4L629.5 315.1L632.5 315.8L635.5 316.5L638.5 317.2L641.5 317.9L644.5 318.7L647.5 319.4L650.5 320.1L653.5 320.7L653.5 325.7L650.5 325.1L647.5 324.4L644.5 323.7L641.5 322.9L638.5 322.2L635.5 321.5L632.5 320.8L629.5 320.1L626.5 319.4ZM736.0 327.0L738.9 327.8L741.9 328.7L744.7 329.8L747.6 331.0L747.6 336.0L744.7 334.8L741.9 333.7L738.9 332.8L736.0 332.0ZM756.1 334.7L759.0 335.9L761.9 337.0L764.8 337.8L764.8 342.8L761.9 342.0L759.0 340.9L756.1 339.7ZM775.4 345.1L779.8 346.1L779.8 351.1L775.4 350.1ZM846.6 518.7L850.2 519.6L850.2 524.6L846.6 523.7Z" fill="#815a33" stroke="#815a33" stroke-width=".6"/><path d="M857.7 515.0L861.1 513.2L863.8 510.6L866.0 507.6L867.7 504.2L869.1 500.6L870.4 497.0L871.6 493.3L872.7 489.7L873.7 486.1L874.4 482.5L874.8 478.9L874.8 475.3L874.8 478.5L874.8 482.1L874.4 485.7L873.7 489.3L872.7 492.9L871.6 496.5L870.4 500.2L869.1 503.8L867.7 507.4L866.0 510.8L863.8 513.8L861.1 516.4L857.7 518.2ZM829.5 409.2L831.2 404.1L831.2 407.3L829.5 412.4ZM819.7 383.4L819.8 381.4L820.0 379.4L820.4 377.5L821.1 375.5L822.0 373.6L823.1 371.8L824.4 370.0L842.3 340.1L844.9 338.4L858.0 316.0L858.0 319.2L844.9 341.6L842.3 343.3L824.4 373.2L823.1 375.0L822.0 376.8L821.1 378.7L820.4 380.7L820.0 382.6L819.8 384.6L819.7 386.6ZM616.2 303.1L616.8 299.4L616.8 302.6L616.2 306.3Z" fill="#dba872" stroke="#dba872" stroke-width=".6"/><path d="M857.7 518.2L861.1 516.4L863.8 513.8L866.0 510.8L867.7 507.4L869.1 503.8L870.4 500.2L871.6 496.5L872.7 492.9L873.7 489.3L874.4 485.7L874.8 482.1L874.8 478.5L874.8 483.5L874.8 487.1L874.4 490.7L873.7 494.3L872.7 497.9L871.6 501.5L870.4 505.2L869.1 508.8L867.7 512.4L866.0 515.8L863.8 518.8L861.1 521.4L857.7 523.2ZM829.5 412.4L831.2 407.3L831.2 412.3L829.5 417.4ZM819.7 386.6L819.8 384.6L820.0 382.6L820.4 380.7L821.1 378.7L822.0 376.8L823.1 375.0L824.4 373.2L842.3 343.3L844.9 341.6L858.0 319.2L858.0 324.2L844.9 346.6L842.3 348.3L824.4 378.2L823.1 380.0L822.0 381.8L821.1 383.7L820.4 385.7L820.0 387.6L819.8 389.6L819.7 391.6ZM616.2 306.3L616.8 302.6L616.8 307.6L616.2 311.3Z" fill="#a57643" stroke="#a57643" stroke-width=".6"/><path d="M468.1 295.7L469.9 297.9L472.4 299.0M468.1 300.7L469.9 302.9L472.4 304.0M472.4 299.0L475.2 299.6M472.4 304.0L475.2 304.6M475.2 299.6L478.2 299.7L481.2 299.5M475.2 304.6L478.2 304.7L481.2 304.5M481.2 299.5L484.3 299.1L487.4 298.5L490.5 297.9L493.6 297.3M481.2 304.5L484.3 304.1L487.4 303.5L490.5 302.9L493.6 302.3M493.6 297.3L496.7 296.6L499.8 295.9M493.6 302.3L496.7 301.6L499.8 300.9M499.8 295.9L502.8 295.2L505.9 294.6L508.9 294.1L512.0 293.6L515.0 293.3M499.8 300.9L502.8 300.2L505.9 299.6L508.9 299.1L512.0 298.6L515.0 298.3M515.0 293.3L518.1 293.1L521.1 293.1L524.1 293.3M515.0 298.3L518.1 298.1L521.1 298.1L524.1 298.3M524.1 293.3L527.2 293.5L530.2 293.9L533.2 294.4L536.2 294.9L539.2 295.5M524.1 298.3L527.2 298.5L530.2 298.9L533.2 299.4L536.2 299.9L539.2 300.5M539.2 295.5L542.3 296.2L545.3 296.9L548.3 297.7L551.3 298.4L554.2 299.2L557.2 299.9L560.2 300.7L563.2 301.4L566.2 302.2L569.2 302.9L572.2 303.6L575.2 304.3L578.2 305.0L581.2 305.7M539.2 300.5L542.3 301.2L545.3 301.9L548.3 302.7L551.3 303.4L554.2 304.2L557.2 304.9L560.2 305.7L563.2 306.4L566.2 307.2L569.2 307.9L572.2 308.6L575.2 309.3L578.2 310.0L581.2 310.7M581.2 305.7L584.2 306.4L587.2 307.0L590.2 307.6L593.2 308.2L596.2 308.7L599.3 309.3L602.3 309.8L605.3 310.3L608.3 310.9L611.4 311.4L614.4 312.0L617.4 312.6L620.4 313.2L623.4 313.8L626.5 314.4M581.2 310.7L584.2 311.4L587.2 312.0L590.2 312.6L593.2 313.2L596.2 313.7L599.3 314.3L602.3 314.8L605.3 315.3L608.3 315.9L611.4 316.4L614.4 317.0L617.4 317.6L620.4 318.2L623.4 318.8L626.5 319.4M626.5 314.4L629.5 315.1L632.5 315.8L635.5 316.5L638.5 317.2L641.5 317.9L644.5 318.7L647.5 319.4L650.5 320.1L653.5 320.7M626.5 319.4L629.5 320.1L632.5 320.8L635.5 321.5L638.5 322.2L641.5 322.9L644.5 323.7L647.5 324.4L650.5 325.1L653.5 325.7M653.5 320.7L656.5 321.4L659.5 322.0L662.5 322.5L665.6 323.0L668.6 323.4L671.6 323.8L674.7 324.1L677.7 324.4M653.5 325.7L656.5 326.4L659.5 327.0L662.5 327.5L665.6 328.0L668.6 328.4L671.6 328.8L674.7 329.1L677.7 329.4M677.7 324.4L680.8 324.5L683.9 324.6L687.0 324.7L690.1 324.7L693.2 324.7L696.3 324.7L699.3 324.6L702.4 324.6L705.5 324.6L708.6 324.5L711.7 324.6L714.8 324.6L717.8 324.7L720.9 324.9M677.7 329.4L680.8 329.5L683.9 329.6L687.0 329.7L690.1 329.7L693.2 329.7L696.3 329.7L699.3 329.6L702.4 329.6L705.5 329.6L708.6 329.5L711.7 329.6L714.8 329.6L717.8 329.7L720.9 329.9M720.9 324.9L724.0 325.1L727.0 325.4L730.0 325.8L733.0 326.4L736.0 327.0M720.9 329.9L724.0 330.1L727.0 330.4L730.0 330.8L733.0 331.4L736.0 332.0M736.0 327.0L738.9 327.8L741.9 328.7L744.7 329.8L747.6 331.0M736.0 332.0L738.9 332.8L741.9 333.7L744.7 334.8L747.6 336.0M747.6 331.0L750.4 332.2L753.3 333.5L756.1 334.7M747.6 336.0L750.4 337.2L753.3 338.5L756.1 339.7M756.1 334.7L759.0 335.9L761.9 337.0L764.8 337.8M756.1 339.7L759.0 340.9L761.9 342.0L764.8 342.8M764.8 337.8L775.4 345.1M764.8 342.8L775.4 350.1M775.4 345.1L779.8 346.1M775.4 350.1L779.8 351.1M779.8 346.1L783.5 347.7L786.5 349.8L789.0 352.4L790.9 355.3L792.4 358.6L793.6 362.1L794.5 365.7L795.3 369.4L795.9 373.1L796.4 376.8L796.8 380.5L797.2 384.3L797.7 388.0L798.2 391.7L798.7 395.3L799.4 398.9L800.2 402.5L801.2 406.0L802.4 409.4L803.8 412.8L805.5 416.1L807.3 419.3L809.3 422.5L811.4 425.7L813.5 428.8L815.8 431.9L818.1 434.9L820.4 437.9L822.7 440.9L825.0 443.9L827.2 446.9L829.3 449.9L831.3 452.8L833.3 455.8L835.3 458.8L837.4 461.9L839.5 464.9L841.8 468.0L844.2 471.2L846.6 474.4L848.8 477.6L850.4 480.9L851.2 484.3M779.8 351.1L783.5 352.7L786.5 354.8L789.0 357.4L790.9 360.3L792.4 363.6L793.6 367.1L794.5 370.7L795.3 374.4L795.9 378.1L796.4 381.8L796.8 385.5L797.2 389.3L797.7 393.0L798.2 396.7L798.7 400.3L799.4 403.9L800.2 407.5L801.2 411.0L802.4 414.4L803.8 417.8L805.5 421.1L807.3 424.3L809.3 427.5L811.4 430.7L813.5 433.8L815.8 436.9L818.1 439.9L820.4 442.9L822.7 445.9L825.0 448.9L827.2 451.9L829.3 454.9L831.3 457.8L833.3 460.8L835.3 463.8L837.4 466.9L839.5 469.9L841.8 473.0L844.2 476.2L846.6 479.4L848.8 482.6L850.4 485.9L851.2 489.3M839.7 510.7L841.0 514.0L843.4 516.8L846.6 518.7M839.7 515.7L841.0 519.0L843.4 521.8L846.6 523.7M846.6 518.7L850.2 519.6M846.6 523.7L850.2 524.6M850.2 519.6L854.0 519.3M850.2 524.6L854.0 524.3M854.0 519.3L857.7 518.2M854.0 524.3L857.7 523.2M857.7 518.2L861.1 516.4L863.8 513.8L866.0 510.8L867.7 507.4L869.1 503.8L870.4 500.2L871.6 496.5L872.7 492.9L873.7 489.3L874.4 485.7L874.8 482.1L874.8 478.5M857.7 523.2L861.1 521.4L863.8 518.8L866.0 515.8L867.7 512.4L869.1 508.8L870.4 505.2L871.6 501.5L872.7 497.9L873.7 494.3L874.4 490.7L874.8 487.1L874.8 483.5M838.0 422.9L839.4 432.8M838.0 427.9L839.4 437.8M815.2 402.2L822.0 403.2M815.2 407.2L822.0 408.2M822.0 403.2L826.6 408.2L829.5 412.4M822.0 408.2L826.6 413.2L829.5 417.4M829.5 412.4L831.2 407.3M829.5 417.4L831.2 412.3M819.7 386.6L819.8 384.6L820.0 382.6L820.4 380.7L821.1 378.7L822.0 376.8L823.1 375.0L824.4 373.2L842.3 343.3L844.9 341.6L858.0 319.2M819.7 391.6L819.8 389.6L820.0 387.6L820.4 385.7L821.1 383.7L822.0 381.8L823.1 380.0L824.4 378.2L842.3 348.3L844.9 346.6L858.0 324.2M653.1 309.2L655.0 315.1M653.1 314.2L655.0 320.1M616.2 306.3L616.8 302.6M616.2 311.3L616.8 307.6M616.8 302.6L630.4 304.0M616.8 307.6L630.4 309.0M468.1 292.5v8.2M469.9 294.7v8.2M775.4 341.9v8.2M851.2 481.1v8.2M839.7 507.5v8.2M850.2 516.4v8.2M874.8 475.3v8.2M838.0 419.7v8.2M839.4 429.6v8.2M815.2 399.0v8.2M822.0 400.0v8.2M829.5 409.2v8.2M831.2 404.1v8.2M819.7 383.4v8.2M858.0 316.0v8.2M653.1 306.0v8.2M655.0 311.9v8.2M616.2 303.1v8.2M616.8 299.4v8.2M630.4 300.8v8.2" stroke="#120c05" stroke-width="0.9" fill="none" stroke-linecap="round"/>
<path d="M468.1 292.5L469.2 289.9L471.0 287.9L473.0 286.2L475.1 284.7L477.5 283.4L479.9 282.3L482.5 281.4L485.1 280.7L487.9 280.0L490.6 279.5L493.5 279.0L496.3 278.6L499.1 278.2L502.0 277.8L504.8 277.4L507.6 277.1L510.4 276.8L513.1 276.5L515.9 276.2L518.7 276.1L521.4 275.9L524.2 275.8L526.9 275.8L529.7 275.8L532.4 275.9L535.1 276.0L537.8 276.3L540.6 276.6L543.3 276.9L546.0 277.4L548.7 277.8L551.4 278.4L554.1 278.9L556.8 279.5L559.5 280.2L562.2 280.9L564.9 281.6L567.6 282.3L570.3 283.0L573.1 283.7L575.8 284.5L578.5 285.2L581.2 286.0L583.9 286.7L586.6 287.4L589.3 288.1L592.0 288.7L594.7 289.3L597.4 289.9L600.1 290.5L602.8 291.0L605.5 291.4L608.3 291.8L611.0 292.1L613.8 292.5L629.6 296.2L630.4 300.8L616.8 299.4L616.2 303.1L655.0 311.9L653.1 306.0L653.3 302.5L666.2 304.4L667.9 305.2L669.6 305.8L671.3 306.3L673.1 306.7L674.9 307.1L676.7 307.3L678.5 307.6L680.3 307.7L682.1 307.8L683.9 307.8L685.8 307.8L687.6 307.7L689.4 307.5L691.3 307.4L693.1 307.2L694.9 306.9L696.8 306.7L698.6 306.4L700.4 306.1L702.2 305.8L704.0 305.5L705.7 305.1L707.5 304.8L760.6 293.5L786.8 305.3L848.3 305.3L858.0 316.0L844.9 338.4L842.3 340.1L824.4 370.0L823.1 371.8L822.0 373.6L821.1 375.5L820.4 377.5L820.0 379.4L819.8 381.4L819.7 383.4L819.9 385.4L820.2 387.3L820.7 389.3L821.3 391.2L822.1 393.1L823.1 394.9L824.2 396.6L825.4 398.3L826.7 399.9L828.1 401.4L829.6 402.8L831.2 404.1L829.5 409.2L826.6 405.0L822.0 400.0L815.2 399.0L815.2 402.6L832.3 430.5L839.4 429.6L838.0 419.7L840.5 418.3L843.7 421.1L846.1 424.0L848.5 427.0L850.7 429.9L852.9 432.9L855.0 435.8L857.0 438.8L859.0 441.9L861.1 445.0L863.1 448.1L865.2 451.3L867.2 454.6L869.2 457.9L871.1 461.3L872.6 464.8L873.8 468.3L874.5 471.8L874.8 475.3L874.8 478.9L874.4 482.5L873.7 486.1L872.7 489.7L871.6 493.3L870.4 497.0L869.1 500.6L867.7 504.2L866.0 507.6L863.8 510.6L861.1 513.2L857.7 515.0L854.0 516.1L850.2 516.4L846.6 515.5L843.4 513.6L841.0 510.8L839.7 507.5L840.0 504.3L841.5 501.0L843.7 497.8L846.1 494.6L848.4 491.3L850.2 488.0L851.1 484.5L851.2 481.1L850.4 477.7L848.8 474.4L846.6 471.2L844.2 468.0L841.8 464.8L839.5 461.7L837.4 458.7L835.3 455.6L833.3 452.6L831.3 449.6L829.3 446.7L827.2 443.7L825.0 440.7L822.7 437.7L820.4 434.7L818.1 431.7L815.8 428.7L813.5 425.6L811.4 422.5L809.3 419.3L807.3 416.1L805.5 412.9L803.8 409.6L802.4 406.2L801.2 402.8L800.2 399.3L799.4 395.7L798.7 392.1L798.2 388.5L797.7 384.8L797.2 381.1L796.8 377.3L796.4 373.6L795.9 369.9L795.3 366.2L794.5 362.5L793.6 358.9L792.4 355.4L790.9 352.1L789.0 349.2L786.5 346.6L783.5 344.5L779.8 342.9L775.4 341.9L764.8 334.6L761.9 333.8L759.0 332.7L756.1 331.5L753.3 330.3L750.4 329.0L747.6 327.8L744.7 326.6L741.9 325.5L738.9 324.6L736.0 323.8L733.0 323.2L730.0 322.6L727.0 322.2L724.0 321.9L720.9 321.7L717.8 321.5L714.8 321.4L711.7 321.4L708.6 321.3L705.5 321.4L702.4 321.4L699.3 321.4L696.3 321.5L693.2 321.5L690.1 321.5L687.0 321.5L683.9 321.4L680.8 321.3L677.7 321.2L674.7 320.9L671.6 320.6L668.6 320.2L665.6 319.8L662.5 319.3L659.5 318.8L656.5 318.2L653.5 317.5L650.5 316.9L647.5 316.2L644.5 315.5L641.5 314.7L638.5 314.0L635.5 313.3L632.5 312.6L629.5 311.9L626.5 311.2L623.4 310.6L620.4 310.0L617.4 309.4L614.4 308.8L611.4 308.2L608.3 307.7L605.3 307.1L602.3 306.6L599.3 306.1L596.2 305.5L593.2 305.0L590.2 304.4L587.2 303.8L584.2 303.2L581.2 302.5L578.2 301.8L575.2 301.1L572.2 300.4L569.2 299.7L566.2 299.0L563.2 298.2L560.2 297.5L557.2 296.7L554.2 296.0L551.3 295.2L548.3 294.5L545.3 293.7L542.3 293.0L539.2 292.3L536.2 291.7L533.2 291.2L530.2 290.7L527.2 290.3L524.1 290.1L521.1 289.9L518.1 289.9L515.0 290.1L512.0 290.4L508.9 290.9L505.9 291.4L502.8 292.0L499.8 292.7L496.7 293.4L493.6 294.1L490.5 294.7L487.4 295.3L484.3 295.9L481.2 296.3L478.2 296.5L475.2 296.4L472.4 295.8L469.9 294.7Z" fill="#f1c48c" stroke="#120c05" stroke-width="1" stroke-linejoin="round" fill-rule="evenodd"/>
<clipPath id="c3"><path d="M471.0 290.3L472.7 288.5L474.5 286.8L476.6 285.5L478.7 284.3L481.0 283.3L483.4 282.4L485.9 281.7L488.5 281.1L491.2 280.6L494.0 280.1L496.8 279.7L499.6 279.3L502.4 278.9L505.2 278.5L508.0 278.2L510.7 277.9L513.4 277.6L516.2 277.4L518.9 277.2L521.6 277.0L524.3 276.9L526.9 276.9L529.6 276.9L532.2 277.0L534.9 277.2L537.5 277.4L540.2 277.7L542.8 278.0L545.5 278.4L548.1 278.9L550.8 279.4L553.4 280.0L556.1 280.6L558.8 281.2L561.5 281.9L564.1 282.6L566.8 283.3L569.5 284.0L572.2 284.8L574.9 285.5L577.6 286.2L580.3 287.0L583.0 287.7L585.8 288.4L588.5 289.1L591.2 289.8L594.0 290.4L596.7 291.0L599.5 291.6L602.3 292.1L605.0 292.5L607.8 292.9L610.6 293.2L613.2 293.6L627.8 297.0L628.2 299.4L615.0 298.1L614.1 303.8L657.6 313.7L655.1 305.9L655.2 303.9L665.3 305.4L666.7 306.2L668.7 306.8L670.5 307.3L672.4 307.8L674.3 308.2L676.2 308.5L678.2 308.7L680.1 308.8L682.0 308.9L684.0 308.9L685.9 308.9L687.8 308.8L689.7 308.7L691.6 308.5L693.5 308.3L695.4 308.1L697.3 307.8L699.1 307.5L701.0 307.2L702.8 306.9L704.6 306.5L706.4 306.2L707.8 305.9L739.2 323.4L736.8 322.7L733.6 322.1L730.5 321.5L727.4 321.1L724.3 320.8L721.1 320.6L718.0 320.4L714.9 320.3L711.7 320.2L708.6 320.2L705.5 320.2L702.4 320.3L699.3 320.3L696.2 320.3L693.1 320.4L690.1 320.4L687.0 320.4L684.0 320.3L681.0 320.2L678.0 320.0L675.0 319.8L672.0 319.5L669.0 319.1L666.1 318.7L663.1 318.2L660.1 317.7L657.1 317.1L654.2 316.5L651.2 315.8L648.2 315.1L645.2 314.4L642.2 313.7L639.2 313.0L636.2 312.3L633.2 311.5L630.2 310.8L627.1 310.2L624.1 309.5L621.1 308.9L618.0 308.3L615.0 307.7L612.0 307.2L608.9 306.6L605.9 306.1L602.9 305.5L599.8 305.0L596.8 304.4L593.8 303.9L590.8 303.3L587.8 302.7L584.8 302.1L581.9 301.4L578.9 300.8L575.9 300.1L572.9 299.4L570.0 298.7L567.0 297.9L564.0 297.2L561.0 296.4L558.0 295.7L555.0 294.9L552.0 294.2L549.0 293.4L546.0 292.7L543.0 292.0L539.9 291.3L536.9 290.7L533.8 290.1L530.7 289.6L527.5 289.2L524.4 288.9L521.2 288.8L518.0 288.8L514.8 289.0L511.6 289.3L508.4 289.8L505.3 290.3L502.2 291.0L499.1 291.6L496.0 292.3L492.9 293.0L489.9 293.7L486.8 294.2L483.8 294.8L480.9 295.1L478.1 295.3L475.6 295.2L473.3 294.8L471.4 294.0L470.2 292.4ZM760.3 294.8L786.1 306.4L786.9 306.4L840.4 339.7L823.2 368.5L792.5 351.4L790.8 348.7L788.2 346.0L784.9 343.7L780.8 341.9L776.6 340.9L766.0 333.7L762.8 332.8L760.1 331.8L757.3 330.6L754.5 329.4L751.6 328.1L748.8 326.8L747.9 326.5L710.1 305.4ZM847.1 306.4L855.9 316.1L843.2 337.8L841.8 338.7L789.9 306.4ZM821.3 371.4L820.1 373.3L819.2 375.3L818.5 377.3L818.0 379.3L817.8 381.4L817.7 383.4L817.9 385.5L818.2 387.5L818.7 389.5L819.4 391.4L820.2 393.4L821.2 395.2L822.3 397.0L823.6 398.8L824.9 400.4L826.4 402.0L828.0 403.4L829.1 404.4L828.8 405.2L828.4 404.5L823.3 399.0L813.2 397.5L813.2 402.8L831.0 431.8L841.5 430.5L840.0 420.1L840.2 420.1L842.0 421.7L844.4 424.5L846.7 427.4L848.9 430.4L851.1 433.3L853.1 436.3L855.2 439.2L857.2 442.3L859.2 445.4L861.3 448.5L863.3 451.7L865.4 455.0L867.4 458.3L869.2 461.6L870.7 465.0L871.9 468.4L872.6 471.9L872.9 475.3L872.8 478.8L872.4 482.4L871.7 485.9L870.8 489.5L869.7 493.1L868.5 496.8L867.2 500.4L865.8 503.9L864.1 507.2L862.1 510.1L859.5 512.4L856.6 514.1L853.5 515.0L850.5 515.2L847.7 514.6L845.0 513.0L842.8 510.4L841.7 507.4L842.0 504.4L843.3 501.4L845.5 498.3L847.9 495.1L850.3 491.7L852.1 488.2L853.0 484.6L853.1 481.0L852.3 477.5L850.6 474.0L848.5 470.7L846.0 467.5L843.6 464.4L841.3 461.3L839.2 458.3L837.2 455.2L835.2 452.2L833.2 449.2L831.1 446.2L829.0 443.2L826.8 440.3L824.5 437.3L822.2 434.3L819.9 431.2L817.6 428.2L815.4 425.2L813.2 422.1L811.1 418.9L809.2 415.8L807.4 412.6L805.7 409.3L804.3 406.0L803.1 402.6L802.2 399.1L801.3 395.6L800.7 392.0L800.1 388.4L799.6 384.7L799.2 381.0L798.8 377.3L798.3 373.5L797.8 369.8L797.2 366.1L796.5 362.3L795.5 358.7L794.3 355.1L793.8 353.9L822.4 369.8Z" clip-rule="evenodd"/></clipPath>
<g clip-path="url(#c3)">
<path d="M471.0 290.3L472.7 288.5L474.5 286.8L476.6 285.5L478.7 284.3L481.0 283.3L483.4 282.4L485.9 281.7L488.5 281.1L491.2 280.6L494.0 280.1L496.8 279.7L499.6 279.3L502.4 278.9L505.2 278.5L508.0 278.2L510.7 277.9L513.4 277.6L516.2 277.4L518.9 277.2L521.6 277.0L524.3 276.9L526.9 276.9L529.6 276.9L532.2 277.0L534.9 277.2L537.5 277.4L540.2 277.7L542.8 278.0L545.5 278.4L548.1 278.9L550.8 279.4L553.4 280.0L556.1 280.6L558.8 281.2L561.5 281.9L564.1 282.6L566.8 283.3L569.5 284.0L572.2 284.8L574.9 285.5L577.6 286.2L580.3 287.0L583.0 287.7L585.8 288.4L588.5 289.1L591.2 289.8L594.0 290.4L596.7 291.0L599.5 291.6L602.3 292.1L605.0 292.5L607.8 292.9L610.6 293.2L613.2 293.6L627.8 297.0L628.2 299.4L615.0 298.1L614.1 303.8L657.6 313.7L655.1 305.9L655.2 303.9L665.3 305.4L666.7 306.2L668.7 306.8L670.5 307.3L672.4 307.8L674.3 308.2L676.2 308.5L678.2 308.7L680.1 308.8L682.0 308.9L684.0 308.9L685.9 308.9L687.8 308.8L689.7 308.7L691.6 308.5L693.5 308.3L695.4 308.1L697.3 307.8L699.1 307.5L701.0 307.2L702.8 306.9L704.6 306.5L706.4 306.2L707.8 305.9L739.2 323.4L736.8 322.7L733.6 322.1L730.5 321.5L727.4 321.1L724.3 320.8L721.1 320.6L718.0 320.4L714.9 320.3L711.7 320.2L708.6 320.2L705.5 320.2L702.4 320.3L699.3 320.3L696.2 320.3L693.1 320.4L690.1 320.4L687.0 320.4L684.0 320.3L681.0 320.2L678.0 320.0L675.0 319.8L672.0 319.5L669.0 319.1L666.1 318.7L663.1 318.2L660.1 317.7L657.1 317.1L654.2 316.5L651.2 315.8L648.2 315.1L645.2 314.4L642.2 313.7L639.2 313.0L636.2 312.3L633.2 311.5L630.2 310.8L627.1 310.2L624.1 309.5L621.1 308.9L618.0 308.3L615.0 307.7L612.0 307.2L608.9 306.6L605.9 306.1L602.9 305.5L599.8 305.0L596.8 304.4L593.8 303.9L590.8 303.3L587.8 302.7L584.8 302.1L581.9 301.4L578.9 300.8L575.9 300.1L572.9 299.4L570.0 298.7L567.0 297.9L564.0 297.2L561.0 296.4L558.0 295.7L555.0 294.9L552.0 294.2L549.0 293.4L546.0 292.7L543.0 292.0L539.9 291.3L536.9 290.7L533.8 290.1L530.7 289.6L527.5 289.2L524.4 288.9L521.2 288.8L518.0 288.8L514.8 289.0L511.6 289.3L508.4 289.8L505.3 290.3L502.2 291.0L499.1 291.6L496.0 292.3L492.9 293.0L489.9 293.7L486.8 294.2L483.8 294.8L480.9 295.1L478.1 295.3L475.6 295.2L473.3 294.8L471.4 294.0L470.2 292.4ZM760.3 294.8L786.1 306.4L786.9 306.4L840.4 339.7L823.2 368.5L792.5 351.4L790.8 348.7L788.2 346.0L784.9 343.7L780.8 341.9L776.6 340.9L766.0 333.7L762.8 332.8L760.1 331.8L757.3 330.6L754.5 329.4L751.6 328.1L748.8 326.8L747.9 326.5L710.1 305.4ZM847.1 306.4L855.9 316.1L843.2 337.8L841.8 338.7L789.9 306.4ZM821.3 371.4L820.1 373.3L819.2 375.3L818.5 377.3L818.0 379.3L817.8 381.4L817.7 383.4L817.9 385.5L818.2 387.5L818.7 389.5L819.4 391.4L820.2 393.4L821.2 395.2L822.3 397.0L823.6 398.8L824.9 400.4L826.4 402.0L828.0 403.4L829.1 404.4L828.8 405.2L828.4 404.5L823.3 399.0L813.2 397.5L813.2 402.8L831.0 431.8L841.5 430.5L840.0 420.1L840.2 420.1L842.0 421.7L844.4 424.5L846.7 427.4L848.9 430.4L851.1 433.3L853.1 436.3L855.2 439.2L857.2 442.3L859.2 445.4L861.3 448.5L863.3 451.7L865.4 455.0L867.4 458.3L869.2 461.6L870.7 465.0L871.9 468.4L872.6 471.9L872.9 475.3L872.8 478.8L872.4 482.4L871.7 485.9L870.8 489.5L869.7 493.1L868.5 496.8L867.2 500.4L865.8 503.9L864.1 507.2L862.1 510.1L859.5 512.4L856.6 514.1L853.5 515.0L850.5 515.2L847.7 514.6L845.0 513.0L842.8 510.4L841.7 507.4L842.0 504.4L843.3 501.4L845.5 498.3L847.9 495.1L850.3 491.7L852.1 488.2L853.0 484.6L853.1 481.0L852.3 477.5L850.6 474.0L848.5 470.7L846.0 467.5L843.6 464.4L841.3 461.3L839.2 458.3L837.2 455.2L835.2 452.2L833.2 449.2L831.1 446.2L829.0 443.2L826.8 440.3L824.5 437.3L822.2 434.3L819.9 431.2L817.6 428.2L815.4 425.2L813.2 422.1L811.1 418.9L809.2 415.8L807.4 412.6L805.7 409.3L804.3 406.0L803.1 402.6L802.2 399.1L801.3 395.6L800.7 392.0L800.1 388.4L799.6 384.7L799.2 381.0L798.8 377.3L798.3 373.5L797.8 369.8L797.2 366.1L796.5 362.3L795.5 358.7L794.3 355.1L793.8 353.9L822.4 369.8Z" fill="#a47647" fill-rule="evenodd"/>
<path d="M739.2 323.4L707.8 305.9L707.8 308.9L739.2 326.4ZM666.7 306.2L665.3 305.4L665.3 308.4L666.7 309.2ZM628.2 299.4L627.8 297.0L627.8 300.0L628.2 302.4ZM840.4 339.7L786.9 306.4L786.9 309.4L840.4 342.7ZM786.1 306.4L760.3 294.8L760.3 297.8L786.1 309.4ZM855.9 316.1L847.1 306.4L847.1 309.4L855.9 319.1ZM822.4 369.8L793.8 353.9L793.8 356.9L822.4 372.8ZM872.9 475.3L872.6 471.9L871.9 468.4L870.7 465.0L869.2 461.6L867.4 458.3L865.4 455.0L863.3 451.7L861.3 448.5L859.2 445.4L857.2 442.3L855.2 439.2L853.1 436.3L851.1 433.3L848.9 430.4L846.7 427.4L844.4 424.5L842.0 421.7L840.2 420.1L840.2 423.1L842.0 424.7L844.4 427.5L846.7 430.4L848.9 433.4L851.1 436.3L853.1 439.3L855.2 442.2L857.2 445.3L859.2 448.4L861.3 451.5L863.3 454.7L865.4 458.0L867.4 461.3L869.2 464.6L870.7 468.0L871.9 471.4L872.6 474.9L872.9 478.3ZM831.0 431.8L813.2 402.8L813.2 405.8L831.0 434.8ZM829.1 404.4L828.0 403.4L826.4 402.0L824.9 400.4L823.6 398.8L822.3 397.0L821.2 395.2L820.2 393.4L819.4 391.4L818.7 389.5L818.2 387.5L817.9 385.5L817.7 383.4L817.7 386.4L817.9 388.5L818.2 390.5L818.7 392.5L819.4 394.4L820.2 396.4L821.2 398.2L822.3 400.0L823.6 401.8L824.9 403.4L826.4 405.0L828.0 406.4L829.1 407.4Z" fill="#8f6439" stroke="#8f6439" stroke-width=".6"/><path d="M707.8 305.9L706.4 306.2L704.6 306.5L702.8 306.9L701.0 307.2L699.1 307.5L697.3 307.8L695.4 308.1L693.5 308.3L691.6 308.5L689.7 308.7L689.7 311.7L691.6 311.5L693.5 311.3L695.4 311.1L697.3 310.8L699.1 310.5L701.0 310.2L702.8 309.9L704.6 309.5L706.4 309.2L707.8 308.9ZM518.9 277.2L516.2 277.4L513.4 277.6L510.7 277.9L508.0 278.2L505.2 278.5L502.4 278.9L499.6 279.3L496.8 279.7L494.0 280.1L491.2 280.6L488.5 281.1L488.5 284.1L491.2 283.6L494.0 283.1L496.8 282.7L499.6 282.3L502.4 281.9L505.2 281.5L508.0 281.2L510.7 280.9L513.4 280.6L516.2 280.4L518.9 280.2ZM760.3 294.8L710.1 305.4L710.1 308.4L760.3 297.8ZM841.5 430.5L831.0 431.8L831.0 434.8L841.5 433.5Z" fill="#b28250" stroke="#b28250" stroke-width=".6"/><path d="M689.7 308.7L687.8 308.8L685.9 308.9L684.0 308.9L682.0 308.9L680.1 308.8L680.1 311.8L682.0 311.9L684.0 311.9L685.9 311.9L687.8 311.8L689.7 311.7ZM534.9 277.2L532.2 277.0L529.6 276.9L526.9 276.9L524.3 276.9L521.6 277.0L518.9 277.2L518.9 280.2L521.6 280.0L524.3 279.9L526.9 279.9L529.6 279.9L532.2 280.0L534.9 280.2ZM786.9 306.4L786.1 306.4L786.1 309.4L786.9 309.4ZM847.1 306.4L789.9 306.4L789.9 309.4L847.1 309.4Z" fill="#aa7a4a" stroke="#aa7a4a" stroke-width=".6"/><path d="M680.1 308.8L678.2 308.7L676.2 308.5L674.3 308.2L672.4 307.8L672.4 310.8L674.3 311.2L676.2 311.5L678.2 311.7L680.1 311.8ZM665.3 305.4L655.2 303.9L655.2 306.9L665.3 308.4ZM613.2 293.6L610.6 293.2L607.8 292.9L605.0 292.5L602.3 292.1L599.5 291.6L596.7 291.0L594.0 290.4L594.0 293.4L596.7 294.0L599.5 294.6L602.3 295.1L605.0 295.5L607.8 295.9L610.6 296.2L613.2 296.6ZM553.4 280.0L550.8 279.4L548.1 278.9L545.5 278.4L542.8 278.0L540.2 277.7L537.5 277.4L534.9 277.2L534.9 280.2L537.5 280.4L540.2 280.7L542.8 281.0L545.5 281.4L548.1 281.9L550.8 282.4L553.4 283.0Z" fill="#a17345" stroke="#a17345" stroke-width=".6"/><path d="M672.4 307.8L670.5 307.3L668.7 306.8L666.7 306.2L666.7 309.2L668.7 309.8L670.5 310.3L672.4 310.8ZM657.6 313.7L614.1 303.8L614.1 306.8L657.6 316.7ZM627.8 297.0L613.2 293.6L613.2 296.6L627.8 300.0ZM594.0 290.4L591.2 289.8L588.5 289.1L585.8 288.4L583.0 287.7L580.3 287.0L577.6 286.2L574.9 285.5L572.2 284.8L569.5 284.0L566.8 283.3L564.1 282.6L561.5 281.9L558.8 281.2L556.1 280.6L553.4 280.0L553.4 283.0L556.1 283.6L558.8 284.2L561.5 284.9L564.1 285.6L566.8 286.3L569.5 287.0L572.2 287.8L574.9 288.5L577.6 289.2L580.3 290.0L583.0 290.7L585.8 291.4L588.5 292.1L591.2 292.8L594.0 293.4Z" fill="#986c3f" stroke="#986c3f" stroke-width=".6"/><path d="M655.2 303.9L655.1 305.9L655.1 308.9L655.2 306.9ZM481.0 283.3L478.7 284.3L476.6 285.5L474.5 286.8L472.7 288.5L471.0 290.3L470.2 292.4L470.2 295.4L471.0 293.3L472.7 291.5L474.5 289.8L476.6 288.5L478.7 287.3L481.0 286.3ZM853.1 481.0L853.0 484.6L852.1 488.2L850.3 491.7L847.9 495.1L845.5 498.3L843.3 501.4L842.0 504.4L841.7 507.4L841.7 510.4L842.0 507.4L843.3 504.4L845.5 501.3L847.9 498.1L850.3 494.7L852.1 491.2L853.0 487.6L853.1 484.0ZM840.2 420.1L840.0 420.1L840.0 423.1L840.2 423.1Z" fill="#c4915c" stroke="#c4915c" stroke-width=".6"/><path d="M488.5 281.1L485.9 281.7L483.4 282.4L481.0 283.3L481.0 286.3L483.4 285.4L485.9 284.7L488.5 284.1Z" fill="#bb8a56" stroke="#bb8a56" stroke-width=".6"/><path d="M739.2 326.4L707.8 308.9M707.8 308.9L706.4 309.2L704.6 309.5L702.8 309.9L701.0 310.2L699.1 310.5L697.3 310.8L695.4 311.1L693.5 311.3L691.6 311.5L689.7 311.7M689.7 311.7L687.8 311.8L685.9 311.9L684.0 311.9L682.0 311.9L680.1 311.8M680.1 311.8L678.2 311.7L676.2 311.5L674.3 311.2L672.4 310.8M672.4 310.8L670.5 310.3L668.7 309.8L666.7 309.2M666.7 309.2L665.3 308.4M665.3 308.4L655.2 306.9M655.2 306.9L655.1 308.9M657.6 316.7L614.1 306.8M628.2 302.4L627.8 300.0M627.8 300.0L613.2 296.6M613.2 296.6L610.6 296.2L607.8 295.9L605.0 295.5L602.3 295.1L599.5 294.6L596.7 294.0L594.0 293.4M594.0 293.4L591.2 292.8L588.5 292.1L585.8 291.4L583.0 290.7L580.3 290.0L577.6 289.2L574.9 288.5L572.2 287.8L569.5 287.0L566.8 286.3L564.1 285.6L561.5 284.9L558.8 284.2L556.1 283.6L553.4 283.0M553.4 283.0L550.8 282.4L548.1 281.9L545.5 281.4L542.8 281.0L540.2 280.7L537.5 280.4L534.9 280.2M534.9 280.2L532.2 280.0L529.6 279.9L526.9 279.9L524.3 279.9L521.6 280.0L518.9 280.2M518.9 280.2L516.2 280.4L513.4 280.6L510.7 280.9L508.0 281.2L505.2 281.5L502.4 281.9L499.6 282.3L496.8 282.7L494.0 283.1L491.2 283.6L488.5 284.1M488.5 284.1L485.9 284.7L483.4 285.4L481.0 286.3M481.0 286.3L478.7 287.3L476.6 288.5L474.5 289.8L472.7 291.5L471.0 293.3L470.2 295.4M470.2 292.4v3.0M739.2 323.4v3.0M707.8 305.9v3.0M665.3 305.4v3.0M655.2 303.9v3.0M655.1 305.9v3.0M657.6 313.7v3.0M614.1 303.8v3.0M628.2 299.4v3.0M627.8 297.0v3.0M840.4 342.7L786.9 309.4M786.9 309.4L786.1 309.4M786.1 309.4L760.3 297.8M760.3 297.8L710.1 308.4M760.3 294.8v3.0M710.1 305.4v3.0M840.4 339.7v3.0M786.9 306.4v3.0M786.1 306.4v3.0M855.9 319.1L847.1 309.4M847.1 309.4L789.9 309.4M847.1 306.4v3.0M789.9 306.4v3.0M855.9 316.1v3.0M822.4 372.8L793.8 356.9M853.1 484.0L853.0 487.6L852.1 491.2L850.3 494.7L847.9 498.1L845.5 501.3L843.3 504.4L842.0 507.4L841.7 510.4M872.9 478.3L872.6 474.9L871.9 471.4L870.7 468.0L869.2 464.6L867.4 461.3L865.4 458.0L863.3 454.7L861.3 451.5L859.2 448.4L857.2 445.3L855.2 442.2L853.1 439.3L851.1 436.3L848.9 433.4L846.7 430.4L844.4 427.5L842.0 424.7L840.2 423.1M840.2 423.1L840.0 423.1M841.5 433.5L831.0 434.8M831.0 434.8L813.2 405.8M829.1 407.4L828.0 406.4L826.4 405.0L824.9 403.4L823.6 401.8L822.3 400.0L821.2 398.2L820.2 396.4L819.4 394.4L818.7 392.5L818.2 390.5L817.9 388.5L817.7 386.4M822.4 369.8v3.0M793.8 353.9v3.0M853.1 481.0v3.0M841.7 507.4v3.0M872.9 475.3v3.0M840.2 420.1v3.0M840.0 420.1v3.0M841.5 430.5v3.0M831.0 431.8v3.0M813.2 402.8v3.0M829.1 404.4v3.0M817.7 383.4v3.0" stroke="#120c05" stroke-width="0.6" fill="none" stroke-linecap="round"/>
<path d="M615.0 298.1L614.1 303.8L614.6 303.9L614.1 306.8L657.6 316.7L656.5 313.5L657.6 313.7L655.4 307.0L665.3 308.4L666.7 309.2L668.7 309.8L670.5 310.3L672.4 310.8L674.3 311.2L676.2 311.5L678.2 311.7L680.1 311.8L682.0 311.9L684.0 311.9L685.9 311.9L687.8 311.8L689.7 311.7L691.6 311.5L693.5 311.3L695.4 311.1L697.3 310.8L699.1 310.5L701.0 310.2L702.8 309.9L704.6 309.5L706.4 309.2L707.8 308.9L730.5 321.5L727.4 321.1L724.3 320.8L721.1 320.6L718.0 320.4L714.9 320.3L711.7 320.2L708.6 320.2L705.5 320.2L702.4 320.3L699.3 320.3L696.2 320.3L693.1 320.4L690.1 320.4L687.0 320.4L684.0 320.3L681.0 320.2L678.0 320.0L675.0 319.8L672.0 319.5L669.0 319.1L666.1 318.7L663.1 318.2L660.1 317.7L657.1 317.1L654.2 316.5L651.2 315.8L648.2 315.1L645.2 314.4L642.2 313.7L639.2 313.0L636.2 312.3L633.2 311.5L630.2 310.8L627.1 310.2L624.1 309.5L621.1 308.9L618.0 308.3L615.0 307.7L612.0 307.2L608.9 306.6L605.9 306.1L602.9 305.5L599.8 305.0L596.8 304.4L593.8 303.9L590.8 303.3L587.8 302.7L584.8 302.1L581.9 301.4L578.9 300.8L575.9 300.1L572.9 299.4L570.0 298.7L567.0 297.9L564.0 297.2L561.0 296.4L558.0 295.7L555.0 294.9L552.0 294.2L549.0 293.4L546.0 292.7L543.0 292.0L539.9 291.3L536.9 290.7L533.8 290.1L530.7 289.6L527.5 289.2L524.4 288.9L521.2 288.8L518.0 288.8L514.8 289.0L511.6 289.3L508.4 289.8L505.3 290.3L502.2 291.0L499.1 291.6L496.0 292.3L492.9 293.0L489.9 293.7L486.8 294.2L483.8 294.8L480.9 295.1L478.1 295.3L475.6 295.2L473.3 294.8L471.4 294.0L471.0 293.4L471.0 293.3L472.7 291.5L474.5 289.8L476.6 288.5L478.7 287.3L481.0 286.3L483.4 285.4L485.9 284.7L488.5 284.1L491.2 283.6L494.0 283.1L496.8 282.7L499.6 282.3L502.4 281.9L505.2 281.5L508.0 281.2L510.7 280.9L513.4 280.6L516.2 280.4L518.9 280.2L521.6 280.0L524.3 279.9L526.9 279.9L529.6 279.9L532.2 280.0L534.9 280.2L537.5 280.4L540.2 280.7L542.8 281.0L545.5 281.4L548.1 281.9L550.8 282.4L553.4 283.0L556.1 283.6L558.8 284.2L561.5 284.9L564.1 285.6L566.8 286.3L569.5 287.0L572.2 287.8L574.9 288.5L577.6 289.2L580.3 290.0L583.0 290.7L585.8 291.4L588.5 292.1L591.2 292.8L594.0 293.4L596.7 294.0L599.5 294.6L602.3 295.1L605.0 295.5L607.8 295.9L610.6 296.2L613.2 296.6L623.1 298.9ZM739.2 323.4L736.8 322.7L735.2 322.4L710.1 308.4L711.7 308.1ZM840.4 339.7L840.0 340.6L789.9 309.4L791.7 309.4ZM823.2 368.5L792.5 351.4L790.8 348.7L788.2 346.0L784.9 343.7L780.8 341.9L776.6 340.9L766.0 333.7L762.8 332.8L760.1 331.8L757.3 330.6L754.5 329.4L751.6 328.1L748.8 326.8L747.9 326.5L714.0 307.6L760.3 297.8L786.1 309.4L786.9 309.4L839.1 341.9ZM843.2 337.8L841.8 338.7L794.7 309.4L847.1 309.4L854.8 317.9ZM820.1 373.3L819.2 375.3L818.5 377.3L818.0 379.3L817.8 381.4L817.7 383.4L817.8 384.2L817.8 384.4L817.7 386.4L817.9 388.5L818.2 390.5L818.7 392.5L819.4 394.4L820.2 396.4L821.2 398.2L821.6 398.8L813.2 397.5L813.2 400.5L813.2 402.8L813.2 405.8L831.0 434.8L841.5 433.5L841.1 430.5L841.5 430.5L840.5 423.3L842.0 424.7L844.4 427.5L846.7 430.4L848.9 433.4L851.1 436.3L853.1 439.3L855.2 442.2L857.2 445.3L859.2 448.4L861.3 451.5L863.3 454.7L865.4 458.0L867.4 461.3L869.2 464.6L870.7 468.0L871.9 471.4L872.6 474.9L872.8 477.7L872.8 478.8L872.4 482.4L871.7 485.9L870.8 489.5L869.7 493.1L868.5 496.8L867.2 500.4L865.8 503.9L864.1 507.2L862.1 510.1L859.5 512.4L856.6 514.1L853.5 515.0L850.5 515.2L847.7 514.6L845.0 513.0L842.8 510.4L841.9 508.0L842.0 507.4L843.3 504.4L845.5 501.3L847.9 498.1L850.3 494.7L852.1 491.2L853.0 487.6L853.1 484.0L853.1 483.7L853.1 481.0L852.3 477.5L850.6 474.0L848.5 470.7L846.0 467.5L843.6 464.4L841.3 461.3L839.2 458.3L837.2 455.2L835.2 452.2L833.2 449.2L831.1 446.2L829.0 443.2L826.8 440.3L824.5 437.3L822.2 434.3L819.9 431.2L817.6 428.2L815.4 425.2L813.2 422.1L811.1 418.9L809.2 415.8L807.4 412.6L805.7 409.3L804.3 406.0L803.1 402.6L802.2 399.1L801.3 395.6L800.7 392.0L800.1 388.4L799.6 384.7L799.2 381.0L798.8 377.3L798.3 373.5L797.8 369.8L797.2 366.1L796.5 362.3L795.5 358.7L795.2 357.7L820.9 372.0ZM794.3 355.1L793.8 353.9L822.4 369.8L821.7 370.7L794.5 355.5Z" fill="#fbcf95" stroke="#120c05" stroke-width=".9" fill-rule="evenodd"/>
</g>
<path d="M471.0 290.3L472.7 288.5L474.5 286.8L476.6 285.5L478.7 284.3L481.0 283.3L483.4 282.4L485.9 281.7L488.5 281.1L491.2 280.6L494.0 280.1L496.8 279.7L499.6 279.3L502.4 278.9L505.2 278.5L508.0 278.2L510.7 277.9L513.4 277.6L516.2 277.4L518.9 277.2L521.6 277.0L524.3 276.9L526.9 276.9L529.6 276.9L532.2 277.0L534.9 277.2L537.5 277.4L540.2 277.7L542.8 278.0L545.5 278.4L548.1 278.9L550.8 279.4L553.4 280.0L556.1 280.6L558.8 281.2L561.5 281.9L564.1 282.6L566.8 283.3L569.5 284.0L572.2 284.8L574.9 285.5L577.6 286.2L580.3 287.0L583.0 287.7L585.8 288.4L588.5 289.1L591.2 289.8L594.0 290.4L596.7 291.0L599.5 291.6L602.3 292.1L605.0 292.5L607.8 292.9L610.6 293.2L613.2 293.6L627.8 297.0L628.2 299.4L615.0 298.1L614.1 303.8L657.6 313.7L655.1 305.9L655.2 303.9L665.3 305.4L666.7 306.2L668.7 306.8L670.5 307.3L672.4 307.8L674.3 308.2L676.2 308.5L678.2 308.7L680.1 308.8L682.0 308.9L684.0 308.9L685.9 308.9L687.8 308.8L689.7 308.7L691.6 308.5L693.5 308.3L695.4 308.1L697.3 307.8L699.1 307.5L701.0 307.2L702.8 306.9L704.6 306.5L706.4 306.2L707.8 305.9L739.2 323.4L736.8 322.7L733.6 322.1L730.5 321.5L727.4 321.1L724.3 320.8L721.1 320.6L718.0 320.4L714.9 320.3L711.7 320.2L708.6 320.2L705.5 320.2L702.4 320.3L699.3 320.3L696.2 320.3L693.1 320.4L690.1 320.4L687.0 320.4L684.0 320.3L681.0 320.2L678.0 320.0L675.0 319.8L672.0 319.5L669.0 319.1L666.1 318.7L663.1 318.2L660.1 317.7L657.1 317.1L654.2 316.5L651.2 315.8L648.2 315.1L645.2 314.4L642.2 313.7L639.2 313.0L636.2 312.3L633.2 311.5L630.2 310.8L627.1 310.2L624.1 309.5L621.1 308.9L618.0 308.3L615.0 307.7L612.0 307.2L608.9 306.6L605.9 306.1L602.9 305.5L599.8 305.0L596.8 304.4L593.8 303.9L590.8 303.3L587.8 302.7L584.8 302.1L581.9 301.4L578.9 300.8L575.9 300.1L572.9 299.4L570.0 298.7L567.0 297.9L564.0 297.2L561.0 296.4L558.0 295.7L555.0 294.9L552.0 294.2L549.0 293.4L546.0 292.7L543.0 292.0L539.9 291.3L536.9 290.7L533.8 290.1L530.7 289.6L527.5 289.2L524.4 288.9L521.2 288.8L518.0 288.8L514.8 289.0L511.6 289.3L508.4 289.8L505.3 290.3L502.2 291.0L499.1 291.6L496.0 292.3L492.9 293.0L489.9 293.7L486.8 294.2L483.8 294.8L480.9 295.1L478.1 295.3L475.6 295.2L473.3 294.8L471.4 294.0L470.2 292.4ZM760.3 294.8L786.1 306.4L786.9 306.4L840.4 339.7L823.2 368.5L792.5 351.4L790.8 348.7L788.2 346.0L784.9 343.7L780.8 341.9L776.6 340.9L766.0 333.7L762.8 332.8L760.1 331.8L757.3 330.6L754.5 329.4L751.6 328.1L748.8 326.8L747.9 326.5L710.1 305.4ZM847.1 306.4L855.9 316.1L843.2 337.8L841.8 338.7L789.9 306.4ZM821.3 371.4L820.1 373.3L819.2 375.3L818.5 377.3L818.0 379.3L817.8 381.4L817.7 383.4L817.9 385.5L818.2 387.5L818.7 389.5L819.4 391.4L820.2 393.4L821.2 395.2L822.3 397.0L823.6 398.8L824.9 400.4L826.4 402.0L828.0 403.4L829.1 404.4L828.8 405.2L828.4 404.5L823.3 399.0L813.2 397.5L813.2 402.8L831.0 431.8L841.5 430.5L840.0 420.1L840.2 420.1L842.0 421.7L844.4 424.5L846.7 427.4L848.9 430.4L851.1 433.3L853.1 436.3L855.2 439.2L857.2 442.3L859.2 445.4L861.3 448.5L863.3 451.7L865.4 455.0L867.4 458.3L869.2 461.6L870.7 465.0L871.9 468.4L872.6 471.9L872.9 475.3L872.8 478.8L872.4 482.4L871.7 485.9L870.8 489.5L869.7 493.1L868.5 496.8L867.2 500.4L865.8 503.9L864.1 507.2L862.1 510.1L859.5 512.4L856.6 514.1L853.5 515.0L850.5 515.2L847.7 514.6L845.0 513.0L842.8 510.4L841.7 507.4L842.0 504.4L843.3 501.4L845.5 498.3L847.9 495.1L850.3 491.7L852.1 488.2L853.0 484.6L853.1 481.0L852.3 477.5L850.6 474.0L848.5 470.7L846.0 467.5L843.6 464.4L841.3 461.3L839.2 458.3L837.2 455.2L835.2 452.2L833.2 449.2L831.1 446.2L829.0 443.2L826.8 440.3L824.5 437.3L822.2 434.3L819.9 431.2L817.6 428.2L815.4 425.2L813.2 422.1L811.1 418.9L809.2 415.8L807.4 412.6L805.7 409.3L804.3 406.0L803.1 402.6L802.2 399.1L801.3 395.6L800.7 392.0L800.1 388.4L799.6 384.7L799.2 381.0L798.8 377.3L798.3 373.5L797.8 369.8L797.2 366.1L796.5 362.3L795.5 358.7L794.3 355.1L793.8 353.9L822.4 369.8Z" fill="none" stroke="#120c05" stroke-width=".9" stroke-linejoin="round"/>
<g fill="none" stroke="#120c05" stroke-linecap="round"><path d="M814.9 323.6C815.3 318.4 821 315.4 829.5 315L857 316.2" stroke-width=".9"/><path d="M817.6 324.8C818.2 320.2 823 317.4 830.5 317L853 318" stroke-width=".8"/><path d="M840.5 318.8L831.4 331.2M847.6 320.8L839.2 332.6" stroke="#3a2713" stroke-width="1.7"/></g>
<path d="M403.6 328.6L405.4 330.9L405.4 334.1L403.6 331.8ZM694.5 369.1L697.3 370.3L700.0 371.5L713.0 380.8L716.1 382.3L718.9 384.1L721.4 386.3L723.6 388.8L725.5 391.5L727.1 394.4L728.3 397.5L729.3 400.7L729.9 403.9L730.3 407.2L730.6 410.5L730.9 413.8L731.3 417.1L731.8 420.4L732.5 423.6L733.4 426.7L734.4 429.9L735.5 432.9L736.7 436.0L738.0 439.0L739.5 441.9L741.0 444.9L742.6 447.8L744.2 450.6L745.9 453.5L747.7 456.3L749.4 459.1L751.2 461.9L753.0 464.7L754.8 467.5L756.5 470.3L758.2 473.1L759.9 475.9L761.5 478.8L763.1 481.6L764.6 484.5L766.1 487.4L767.6 490.3L769.1 493.2L770.7 496.1L772.4 499.0L774.3 501.8L776.2 504.6L778.2 507.4L780.1 510.1L782.0 512.9L783.7 515.8L785.2 518.7L786.5 521.6L787.4 524.6L787.9 527.7L787.9 530.9L787.4 527.8L786.5 524.8L785.2 521.9L783.7 519.0L782.0 516.1L780.1 513.3L778.2 510.6L776.2 507.8L774.3 505.0L772.4 502.2L770.7 499.3L769.1 496.4L767.6 493.5L766.1 490.6L764.6 487.7L763.1 484.8L761.5 482.0L759.9 479.1L758.2 476.3L756.5 473.5L754.8 470.7L753.0 467.9L751.2 465.1L749.4 462.3L747.7 459.5L745.9 456.7L744.2 453.8L742.6 451.0L741.0 448.1L739.5 445.1L738.0 442.2L736.7 439.2L735.5 436.1L734.4 433.1L733.4 429.9L732.5 426.8L731.8 423.6L731.3 420.3L730.9 417.0L730.6 413.7L730.3 410.4L729.9 407.1L729.3 403.9L728.3 400.7L727.1 397.6L725.5 394.7L723.6 392.0L721.4 389.5L718.9 387.3L716.1 385.5L713.0 384.0L700.0 374.7L697.3 373.5L694.5 372.3ZM777.5 546.7L779.2 549.5L781.9 551.5L781.9 554.7L779.2 552.7L777.5 549.9ZM755.6 434.8L759.9 437.6L762.7 442.6L766.3 446.2L766.3 449.4L762.7 445.8L759.9 440.8L755.6 438.0ZM588.6 342.5L590.0 348.6L590.0 351.8L588.6 345.7Z" fill="#94673a" stroke="#94673a" stroke-width=".6"/><path d="M403.6 331.8L405.4 334.1L405.4 339.1L403.6 336.8ZM694.5 372.3L697.3 373.5L700.0 374.7L713.0 384.0L716.1 385.5L718.9 387.3L721.4 389.5L723.6 392.0L725.5 394.7L727.1 397.6L728.3 400.7L729.3 403.9L729.9 407.1L730.3 410.4L730.6 413.7L730.9 417.0L731.3 420.3L731.8 423.6L732.5 426.8L733.4 429.9L734.4 433.1L735.5 436.1L736.7 439.2L738.0 442.2L739.5 445.1L741.0 448.1L742.6 451.0L744.2 453.8L745.9 456.7L747.7 459.5L749.4 462.3L751.2 465.1L753.0 467.9L754.8 470.7L756.5 473.5L758.2 476.3L759.9 479.1L761.5 482.0L763.1 484.8L764.6 487.7L766.1 490.6L767.6 493.5L769.1 496.4L770.7 499.3L772.4 502.2L774.3 505.0L776.2 507.8L778.2 510.6L780.1 513.3L782.0 516.1L783.7 519.0L785.2 521.9L786.5 524.8L787.4 527.8L787.9 530.9L787.9 535.9L787.4 532.8L786.5 529.8L785.2 526.9L783.7 524.0L782.0 521.1L780.1 518.3L778.2 515.6L776.2 512.8L774.3 510.0L772.4 507.2L770.7 504.3L769.1 501.4L767.6 498.5L766.1 495.6L764.6 492.7L763.1 489.8L761.5 487.0L759.9 484.1L758.2 481.3L756.5 478.5L754.8 475.7L753.0 472.9L751.2 470.1L749.4 467.3L747.7 464.5L745.9 461.7L744.2 458.8L742.6 456.0L741.0 453.1L739.5 450.1L738.0 447.2L736.7 444.2L735.5 441.1L734.4 438.1L733.4 434.9L732.5 431.8L731.8 428.6L731.3 425.3L730.9 422.0L730.6 418.7L730.3 415.4L729.9 412.1L729.3 408.9L728.3 405.7L727.1 402.6L725.5 399.7L723.6 397.0L721.4 394.5L718.9 392.3L716.1 390.5L713.0 389.0L700.0 379.7L697.3 378.5L694.5 377.3ZM777.5 549.9L779.2 552.7L781.9 554.7L781.9 559.7L779.2 557.7L777.5 554.9ZM755.6 438.0L759.9 440.8L762.7 445.8L766.3 449.4L766.3 454.4L762.7 450.8L759.9 445.8L755.6 443.0ZM588.6 345.7L590.0 351.8L590.0 356.8L588.6 350.7Z" fill="#7a5530" stroke="#7a5530" stroke-width=".6"/><path d="M405.4 330.9L407.9 331.8L407.9 335.0L405.4 334.1ZM477.5 329.4L480.4 330.0L483.3 330.7L486.2 331.3L489.1 332.0L491.9 332.6L491.9 335.8L489.1 335.2L486.2 334.5L483.3 333.9L480.4 333.2L477.5 332.6ZM515.0 337.6L517.9 338.2L520.7 338.9L523.6 339.5L526.5 340.2L529.4 340.8L532.2 341.5L535.1 342.2L538.0 342.9L540.8 343.6L543.7 344.3L546.6 345.0L549.4 345.7L552.3 346.4L555.2 347.1L558.1 347.7L560.9 348.4L563.8 349.1L566.7 349.8L569.6 350.4L572.5 351.0L572.5 354.2L569.6 353.6L566.7 353.0L563.8 352.3L560.9 351.6L558.1 350.9L555.2 350.3L552.3 349.6L549.4 348.9L546.6 348.2L543.7 347.5L540.8 346.8L538.0 346.1L535.1 345.4L532.2 344.7L529.4 344.0L526.5 343.4L523.6 342.7L520.7 342.1L517.9 341.4L515.0 340.8ZM677.6 363.9L680.5 364.5L683.3 365.2L686.1 366.0L689.0 367.0L691.7 368.0L694.5 369.1L694.5 372.3L691.7 371.2L689.0 370.2L686.1 369.2L683.3 368.4L680.5 367.7L677.6 367.1ZM781.9 551.5L785.0 552.5L785.0 555.7L781.9 554.7Z" fill="#a07243" stroke="#a07243" stroke-width=".6"/><path d="M405.4 334.1L407.9 335.0L407.9 340.0L405.4 339.1ZM477.5 332.6L480.4 333.2L483.3 333.9L486.2 334.5L489.1 335.2L491.9 335.8L491.9 340.8L489.1 340.2L486.2 339.5L483.3 338.9L480.4 338.2L477.5 337.6ZM515.0 340.8L517.9 341.4L520.7 342.1L523.6 342.7L526.5 343.4L529.4 344.0L532.2 344.7L535.1 345.4L538.0 346.1L540.8 346.8L543.7 347.5L546.6 348.2L549.4 348.9L552.3 349.6L555.2 350.3L558.1 350.9L560.9 351.6L563.8 352.3L566.7 353.0L569.6 353.6L572.5 354.2L572.5 359.2L569.6 358.6L566.7 358.0L563.8 357.3L560.9 356.6L558.1 355.9L555.2 355.3L552.3 354.6L549.4 353.9L546.6 353.2L543.7 352.5L540.8 351.8L538.0 351.1L535.1 350.4L532.2 349.7L529.4 349.0L526.5 348.4L523.6 347.7L520.7 347.1L517.9 346.4L515.0 345.8ZM677.6 367.1L680.5 367.7L683.3 368.4L686.1 369.2L689.0 370.2L691.7 371.2L694.5 372.3L694.5 377.3L691.7 376.2L689.0 375.2L686.1 374.2L683.3 373.4L680.5 372.7L677.6 372.1ZM781.9 554.7L785.0 555.7L785.0 560.7L781.9 559.7Z" fill="#815a33" stroke="#815a33" stroke-width=".6"/><path d="M407.9 331.8L410.5 332.3L410.5 335.5L407.9 335.0ZM457.2 326.3L460.1 326.5L463.0 326.8L465.9 327.2L468.8 327.7L471.7 328.2L474.6 328.8L477.5 329.4L477.5 332.6L474.6 332.0L471.7 331.4L468.8 330.9L465.9 330.4L463.0 330.0L460.1 329.7L457.2 329.5ZM491.9 332.6L494.8 333.2L497.7 333.9L500.6 334.5L503.5 335.1L506.3 335.7L509.2 336.3L512.1 337.0L515.0 337.6L515.0 340.8L512.1 340.2L509.2 339.5L506.3 338.9L503.5 338.3L500.6 337.7L497.7 337.1L494.8 336.4L491.9 335.8ZM572.5 351.0L575.3 351.7L578.2 352.3L581.1 352.9L584.0 353.4L586.9 354.0L589.8 354.5L592.7 355.0L595.6 355.5L598.5 356.0L601.4 356.4L604.3 356.9L607.2 357.3L610.2 357.6L613.1 358.0L616.0 358.3L618.9 358.6L621.9 358.9L624.8 359.2L627.7 359.4L630.7 359.6L633.6 359.9L633.6 363.1L630.7 362.8L627.7 362.6L624.8 362.4L621.9 362.1L618.9 361.8L616.0 361.5L613.1 361.2L610.2 360.8L607.2 360.5L604.3 360.1L601.4 359.6L598.5 359.2L595.6 358.7L592.7 358.2L589.8 357.7L586.9 357.2L584.0 356.6L581.1 356.1L578.2 355.5L575.3 354.9L572.5 354.2ZM654.3 361.0L657.2 361.2L660.2 361.5L663.1 361.7L666.0 362.0L668.9 362.4L671.8 362.8L674.7 363.3L677.6 363.9L677.6 367.1L674.7 366.5L671.8 366.0L668.9 365.6L666.0 365.2L663.1 364.9L660.2 364.7L657.2 364.4L654.3 364.2ZM553.6 335.4L566.6 336.6L566.6 339.8L553.6 338.6Z" fill="#ac7d4d" stroke="#ac7d4d" stroke-width=".6"/><path d="M407.9 335.0L410.5 335.5L410.5 340.5L407.9 340.0ZM457.2 329.5L460.1 329.7L463.0 330.0L465.9 330.4L468.8 330.9L471.7 331.4L474.6 332.0L477.5 332.6L477.5 337.6L474.6 337.0L471.7 336.4L468.8 335.9L465.9 335.4L463.0 335.0L460.1 334.7L457.2 334.5ZM491.9 335.8L494.8 336.4L497.7 337.1L500.6 337.7L503.5 338.3L506.3 338.9L509.2 339.5L512.1 340.2L515.0 340.8L515.0 345.8L512.1 345.2L509.2 344.5L506.3 343.9L503.5 343.3L500.6 342.7L497.7 342.1L494.8 341.4L491.9 340.8ZM572.5 354.2L575.3 354.9L578.2 355.5L581.1 356.1L584.0 356.6L586.9 357.2L589.8 357.7L592.7 358.2L595.6 358.7L598.5 359.2L601.4 359.6L604.3 360.1L607.2 360.5L610.2 360.8L613.1 361.2L616.0 361.5L618.9 361.8L621.9 362.1L624.8 362.4L627.7 362.6L630.7 362.8L633.6 363.1L633.6 368.1L630.7 367.8L627.7 367.6L624.8 367.4L621.9 367.1L618.9 366.8L616.0 366.5L613.1 366.2L610.2 365.8L607.2 365.5L604.3 365.1L601.4 364.6L598.5 364.2L595.6 363.7L592.7 363.2L589.8 362.7L586.9 362.2L584.0 361.6L581.1 361.1L578.2 360.5L575.3 359.9L572.5 359.2ZM654.3 364.2L657.2 364.4L660.2 364.7L663.1 364.9L666.0 365.2L668.9 365.6L671.8 366.0L674.7 366.5L677.6 367.1L677.6 372.1L674.7 371.5L671.8 371.0L668.9 370.6L666.0 370.2L663.1 369.9L660.2 369.7L657.2 369.4L654.3 369.2ZM553.6 338.6L566.6 339.8L566.6 344.8L553.6 343.6Z" fill="#886036" stroke="#886036" stroke-width=".6"/><path d="M410.5 332.3L413.2 332.3L413.2 335.5L410.5 335.5ZM448.4 326.4L451.3 326.2L454.3 326.2L457.2 326.3L457.2 329.5L454.3 329.4L451.3 329.4L448.4 329.6ZM633.6 359.9L636.6 360.0L639.5 360.2L642.5 360.4L645.4 360.5L648.4 360.7L651.3 360.8L654.3 361.0L654.3 364.2L651.3 364.0L648.4 363.9L645.4 363.7L642.5 363.6L639.5 363.4L636.6 363.2L633.6 363.1ZM785.0 552.5L788.3 552.5L788.3 555.7L785.0 555.7Z" fill="#b88856" stroke="#b88856" stroke-width=".6"/><path d="M410.5 335.5L413.2 335.5L413.2 340.5L410.5 340.5ZM448.4 329.6L451.3 329.4L454.3 329.4L457.2 329.5L457.2 334.5L454.3 334.4L451.3 334.4L448.4 334.6ZM633.6 363.1L636.6 363.2L639.5 363.4L642.5 363.6L645.4 363.7L648.4 363.9L651.3 364.0L654.3 364.2L654.3 369.2L651.3 369.0L648.4 368.9L645.4 368.7L642.5 368.6L639.5 368.4L636.6 368.2L633.6 368.1ZM785.0 555.7L788.3 555.7L788.3 560.7L785.0 560.7Z" fill="#90663a" stroke="#90663a" stroke-width=".6"/><path d="M413.2 332.3L416.1 332.0L419.0 331.6L421.9 331.0L424.8 330.4L427.8 329.8L430.7 329.2L433.6 328.6L436.6 328.0L439.6 327.5L442.5 327.0L445.5 326.7L448.4 326.4L448.4 329.6L445.5 329.9L442.5 330.2L439.6 330.7L436.6 331.2L433.6 331.8L430.7 332.4L427.8 333.0L424.8 333.6L421.9 334.2L419.0 334.8L416.1 335.2L413.2 335.5Z" fill="#c3925f" stroke="#c3925f" stroke-width=".6"/><path d="M413.2 335.5L416.1 335.2L419.0 334.8L421.9 334.2L424.8 333.6L427.8 333.0L430.7 332.4L433.6 331.8L436.6 331.2L439.6 330.7L442.5 330.2L445.5 329.9L448.4 329.6L448.4 334.6L445.5 334.9L442.5 335.2L439.6 335.7L436.6 336.2L433.6 336.8L430.7 337.4L427.8 338.0L424.8 338.6L421.9 339.2L419.0 339.8L416.1 340.2L413.2 340.5Z" fill="#976b3d" stroke="#976b3d" stroke-width=".6"/><path d="M788.3 552.5L791.7 551.6L791.7 554.8L788.3 555.7ZM750.6 436.2L755.6 434.8L755.6 438.0L750.6 439.4Z" fill="#cf9d69" stroke="#cf9d69" stroke-width=".6"/><path d="M788.3 555.7L791.7 554.8L791.7 559.8L788.3 560.7ZM750.6 439.4L755.6 438.0L755.6 443.0L750.6 444.4Z" fill="#9e7040" stroke="#9e7040" stroke-width=".6"/><path d="M791.7 551.6L794.9 550.1L797.8 548.1L800.3 545.8L802.2 543.2L803.8 540.4L805.1 537.4L806.4 534.4L807.6 531.2L808.8 528.1L809.9 524.8L810.8 521.6L811.6 518.3L812.1 515.0L812.4 511.8L812.4 515.0L812.1 518.2L811.6 521.5L810.8 524.8L809.9 528.0L808.8 531.3L807.6 534.4L806.4 537.6L805.1 540.6L803.8 543.6L802.2 546.4L800.3 549.0L797.8 551.3L794.9 553.3L791.7 554.8ZM749.9 439.8L750.6 436.2L750.6 439.4L749.9 443.0ZM766.3 446.2L767.7 442.6L767.7 445.8L766.3 449.4ZM751.4 410.5L751.5 408.6L751.7 406.6L752.1 404.7L752.8 402.8L768.9 375.1L768.9 378.3L752.8 406.0L752.1 407.9L751.7 409.8L751.5 411.8L751.4 413.7ZM552.6 339.2L553.6 335.4L553.6 338.6L552.6 342.4Z" fill="#dba872" stroke="#dba872" stroke-width=".6"/><path d="M791.7 554.8L794.9 553.3L797.8 551.3L800.3 549.0L802.2 546.4L803.8 543.6L805.1 540.6L806.4 537.6L807.6 534.4L808.8 531.3L809.9 528.0L810.8 524.8L811.6 521.5L812.1 518.2L812.4 515.0L812.4 520.0L812.1 523.2L811.6 526.5L810.8 529.8L809.9 533.0L808.8 536.3L807.6 539.4L806.4 542.6L805.1 545.6L803.8 548.6L802.2 551.4L800.3 554.0L797.8 556.3L794.9 558.3L791.7 559.8ZM749.9 443.0L750.6 439.4L750.6 444.4L749.9 448.0ZM766.3 449.4L767.7 445.8L767.7 450.8L766.3 454.4ZM751.4 413.7L751.5 411.8L751.7 409.8L752.1 407.9L752.8 406.0L768.9 378.3L768.9 383.3L752.8 411.0L752.1 412.9L751.7 414.8L751.5 416.8L751.4 418.7ZM552.6 342.4L553.6 338.6L553.6 343.6L552.6 347.4Z" fill="#a57643" stroke="#a57643" stroke-width=".6"/><path d="M403.6 331.8L405.4 334.1M403.6 336.8L405.4 339.1M405.4 334.1L407.9 335.0M405.4 339.1L407.9 340.0M407.9 335.0L410.5 335.5M407.9 340.0L410.5 340.5M410.5 335.5L413.2 335.5M410.5 340.5L413.2 340.5M413.2 335.5L416.1 335.2L419.0 334.8L421.9 334.2L424.8 333.6L427.8 333.0L430.7 332.4L433.6 331.8L436.6 331.2L439.6 330.7L442.5 330.2L445.5 329.9L448.4 329.6M413.2 340.5L416.1 340.2L419.0 339.8L421.9 339.2L424.8 338.6L427.8 338.0L430.7 337.4L433.6 336.8L436.6 336.2L439.6 335.7L442.5 335.2L445.5 334.9L448.4 334.6M448.4 329.6L451.3 329.4L454.3 329.4L457.2 329.5M448.4 334.6L451.3 334.4L454.3 334.4L457.2 334.5M457.2 329.5L460.1 329.7L463.0 330.0L465.9 330.4L468.8 330.9L471.7 331.4L474.6 332.0L477.5 332.6M457.2 334.5L460.1 334.7L463.0 335.0L465.9 335.4L468.8 335.9L471.7 336.4L474.6 337.0L477.5 337.6M477.5 332.6L480.4 333.2L483.3 333.9L486.2 334.5L489.1 335.2L491.9 335.8M477.5 337.6L480.4 338.2L483.3 338.9L486.2 339.5L489.1 340.2L491.9 340.8M491.9 335.8L494.8 336.4L497.7 337.1L500.6 337.7L503.5 338.3L506.3 338.9L509.2 339.5L512.1 340.2L515.0 340.8M491.9 340.8L494.8 341.4L497.7 342.1L500.6 342.7L503.5 343.3L506.3 343.9L509.2 344.5L512.1 345.2L515.0 345.8M515.0 340.8L517.9 341.4L520.7 342.1L523.6 342.7L526.5 343.4L529.4 344.0L532.2 344.7L535.1 345.4L538.0 346.1L540.8 346.8L543.7 347.5L546.6 348.2L549.4 348.9L552.3 349.6L555.2 350.3L558.1 350.9L560.9 351.6L563.8 352.3L566.7 353.0L569.6 353.6L572.5 354.2M515.0 345.8L517.9 346.4L520.7 347.1L523.6 347.7L526.5 348.4L529.4 349.0L532.2 349.7L535.1 350.4L538.0 351.1L540.8 351.8L543.7 352.5L546.6 353.2L549.4 353.9L552.3 354.6L555.2 355.3L558.1 355.9L560.9 356.6L563.8 357.3L566.7 358.0L569.6 358.6L572.5 359.2M572.5 354.2L575.3 354.9L578.2 355.5L581.1 356.1L584.0 356.6L586.9 357.2L589.8 357.7L592.7 358.2L595.6 358.7L598.5 359.2L601.4 359.6L604.3 360.1L607.2 360.5L610.2 360.8L613.1 361.2L616.0 361.5L618.9 361.8L621.9 362.1L624.8 362.4L627.7 362.6L630.7 362.8L633.6 363.1M572.5 359.2L575.3 359.9L578.2 360.5L581.1 361.1L584.0 361.6L586.9 362.2L589.8 362.7L592.7 363.2L595.6 363.7L598.5 364.2L601.4 364.6L604.3 365.1L607.2 365.5L610.2 365.8L613.1 366.2L616.0 366.5L618.9 366.8L621.9 367.1L624.8 367.4L627.7 367.6L630.7 367.8L633.6 368.1M633.6 363.1L636.6 363.2L639.5 363.4L642.5 363.6L645.4 363.7L648.4 363.9L651.3 364.0L654.3 364.2M633.6 368.1L636.6 368.2L639.5 368.4L642.5 368.6L645.4 368.7L648.4 368.9L651.3 369.0L654.3 369.2M654.3 364.2L657.2 364.4L660.2 364.7L663.1 364.9L666.0 365.2L668.9 365.6L671.8 366.0L674.7 366.5L677.6 367.1M654.3 369.2L657.2 369.4L660.2 369.7L663.1 369.9L666.0 370.2L668.9 370.6L671.8 371.0L674.7 371.5L677.6 372.1M677.6 367.1L680.5 367.7L683.3 368.4L686.1 369.2L689.0 370.2L691.7 371.2L694.5 372.3M677.6 372.1L680.5 372.7L683.3 373.4L686.1 374.2L689.0 375.2L691.7 376.2L694.5 377.3M694.5 372.3L697.3 373.5L700.0 374.7L713.0 384.0L716.1 385.5L718.9 387.3L721.4 389.5L723.6 392.0L725.5 394.7L727.1 397.6L728.3 400.7L729.3 403.9L729.9 407.1L730.3 410.4L730.6 413.7L730.9 417.0L731.3 420.3L731.8 423.6L732.5 426.8L733.4 429.9L734.4 433.1L735.5 436.1L736.7 439.2L738.0 442.2L739.5 445.1L741.0 448.1L742.6 451.0L744.2 453.8L745.9 456.7L747.7 459.5L749.4 462.3L751.2 465.1L753.0 467.9L754.8 470.7L756.5 473.5L758.2 476.3L759.9 479.1L761.5 482.0L763.1 484.8L764.6 487.7L766.1 490.6L767.6 493.5L769.1 496.4L770.7 499.3L772.4 502.2L774.3 505.0L776.2 507.8L778.2 510.6L780.1 513.3L782.0 516.1L783.7 519.0L785.2 521.9L786.5 524.8L787.4 527.8L787.9 530.9M694.5 377.3L697.3 378.5L700.0 379.7L713.0 389.0L716.1 390.5L718.9 392.3L721.4 394.5L723.6 397.0L725.5 399.7L727.1 402.6L728.3 405.7L729.3 408.9L729.9 412.1L730.3 415.4L730.6 418.7L730.9 422.0L731.3 425.3L731.8 428.6L732.5 431.8L733.4 434.9L734.4 438.1L735.5 441.1L736.7 444.2L738.0 447.2L739.5 450.1L741.0 453.1L742.6 456.0L744.2 458.8L745.9 461.7L747.7 464.5L749.4 467.3L751.2 470.1L753.0 472.9L754.8 475.7L756.5 478.5L758.2 481.3L759.9 484.1L761.5 487.0L763.1 489.8L764.6 492.7L766.1 495.6L767.6 498.5L769.1 501.4L770.7 504.3L772.4 507.2L774.3 510.0L776.2 512.8L778.2 515.6L780.1 518.3L782.0 521.1L783.7 524.0L785.2 526.9L786.5 529.8L787.4 532.8L787.9 535.9M777.5 549.9L779.2 552.7L781.9 554.7M777.5 554.9L779.2 557.7L781.9 559.7M781.9 554.7L785.0 555.7M781.9 559.7L785.0 560.7M785.0 555.7L788.3 555.7M785.0 560.7L788.3 560.7M788.3 555.7L791.7 554.8M788.3 560.7L791.7 559.8M791.7 554.8L794.9 553.3L797.8 551.3L800.3 549.0L802.2 546.4L803.8 543.6L805.1 540.6L806.4 537.6L807.6 534.4L808.8 531.3L809.9 528.0L810.8 524.8L811.6 521.5L812.1 518.2L812.4 515.0M791.7 559.8L794.9 558.3L797.8 556.3L800.3 554.0L802.2 551.4L803.8 548.6L805.1 545.6L806.4 542.6L807.6 539.4L808.8 536.3L809.9 533.0L810.8 529.8L811.6 526.5L812.1 523.2L812.4 520.0M749.9 443.0L750.6 439.4M749.9 448.0L750.6 444.4M750.6 439.4L755.6 438.0M750.6 444.4L755.6 443.0M755.6 438.0L759.9 440.8L762.7 445.8L766.3 449.4M755.6 443.0L759.9 445.8L762.7 450.8L766.3 454.4M766.3 449.4L767.7 445.8M766.3 454.4L767.7 450.8M751.4 413.7L751.5 411.8L751.7 409.8L752.1 407.9L752.8 406.0L768.9 378.3M751.4 418.7L751.5 416.8L751.7 414.8L752.1 412.9L752.8 411.0L768.9 383.3M588.6 345.7L590.0 351.8M588.6 350.7L590.0 356.8M552.6 342.4L553.6 338.6M552.6 347.4L553.6 343.6M553.6 338.6L566.6 339.8M553.6 343.6L566.6 344.8M403.6 328.6v8.2M405.4 330.9v8.2M787.9 527.7v8.2M777.5 546.7v8.2M785.0 552.5v8.2M812.4 511.8v8.2M749.9 439.8v8.2M750.6 436.2v8.2M755.6 434.8v8.2M766.3 446.2v8.2M767.7 442.6v8.2M751.4 410.5v8.2M768.9 375.1v8.2M588.6 342.5v8.2M590.0 348.6v8.2M552.6 339.2v8.2M553.6 335.4v8.2M566.6 336.6v8.2" stroke="#120c05" stroke-width="0.9" fill="none" stroke-linecap="round"/>
<path d="M403.6 328.6L404.3 326.0L405.9 324.1L407.7 322.6L409.7 321.2L411.9 320.1L414.2 319.2L416.7 318.4L419.2 317.8L421.8 317.2L424.4 316.6L427.0 316.0L429.6 315.5L432.2 315.0L434.8 314.5L437.4 314.1L440.0 313.7L442.6 313.3L445.3 313.0L447.9 312.7L450.5 312.5L453.1 312.3L455.7 312.2L458.2 312.1L460.8 312.1L463.4 312.1L466.0 312.2L468.6 312.3L471.1 312.5L473.7 312.7L476.3 313.0L478.8 313.3L481.4 313.7L484.0 314.1L486.5 314.6L489.1 315.0L491.6 315.5L494.1 316.0L496.7 316.6L499.2 317.2L501.8 317.7L504.3 318.3L506.8 319.0L509.4 319.6L511.9 320.2L514.5 320.9L517.0 321.5L519.5 322.1L522.1 322.8L524.6 323.4L527.1 324.0L529.7 324.6L532.2 325.2L534.7 325.8L537.3 326.4L539.8 326.9L542.3 327.4L544.9 327.9L547.4 328.4L550.0 328.8L565.8 332.8L566.6 336.6L553.6 335.4L552.6 339.2L590.0 348.6L588.6 342.5L589.0 338.6L605.0 342.2L606.8 342.9L608.6 343.5L610.4 344.0L612.2 344.5L614.0 345.0L615.9 345.4L617.7 345.8L619.6 346.1L621.5 346.4L623.3 346.7L625.2 346.9L627.1 347.1L629.0 347.2L630.9 347.4L632.8 347.4L634.7 347.5L636.6 347.5L638.5 347.5L640.4 347.4L642.2 347.4L644.1 347.2L646.0 347.1L647.9 346.9L649.8 346.7L651.7 346.5L653.5 346.2L655.4 345.9L700.8 337.0L768.9 375.1L752.8 402.8L752.1 404.7L751.7 406.6L751.5 408.6L751.4 410.5L751.6 412.3L751.9 414.2L752.3 416.0L752.8 417.8L753.5 419.6L754.3 421.3L755.1 423.1L756.1 424.8L757.1 426.5L758.1 428.1L759.2 429.8L760.3 431.4L761.4 433.1L762.6 434.7L763.7 436.3L764.7 437.9L765.8 439.4L766.8 441.0L767.7 442.6L766.3 446.2L762.7 442.6L759.9 437.6L755.6 434.8L750.6 436.2L749.9 439.8L766.3 464.0L775.5 464.0L775.5 455.4L778.4 456.1L781.9 462.5L783.8 464.9L785.7 467.3L787.8 469.8L790.0 472.3L792.3 474.8L794.6 477.3L796.9 479.9L799.2 482.5L801.4 485.2L803.5 488.0L805.4 490.7L807.2 493.6L808.8 496.5L810.1 499.4L811.2 502.4L811.9 505.5L812.3 508.6L812.4 511.8L812.1 515.0L811.6 518.3L810.8 521.6L809.9 524.8L808.8 528.1L807.6 531.2L806.4 534.4L805.1 537.4L803.8 540.4L802.2 543.2L800.3 545.8L797.8 548.1L794.9 550.1L791.7 551.6L788.3 552.5L785.0 552.5L781.9 551.5L779.2 549.5L777.5 546.7L777.5 544.0L779.2 541.4L781.6 538.9L784.4 536.3L786.6 533.6L787.8 530.7L787.9 527.7L787.4 524.6L786.5 521.6L785.2 518.7L783.7 515.8L782.0 512.9L780.1 510.1L778.2 507.4L776.2 504.6L774.3 501.8L772.4 499.0L770.7 496.1L769.1 493.2L767.6 490.3L766.1 487.4L764.6 484.5L763.1 481.6L761.5 478.8L759.9 475.9L758.2 473.1L756.5 470.3L754.8 467.5L753.0 464.7L751.2 461.9L749.4 459.1L747.7 456.3L745.9 453.5L744.2 450.6L742.6 447.8L741.0 444.9L739.5 441.9L738.0 439.0L736.7 436.0L735.5 432.9L734.4 429.9L733.4 426.7L732.5 423.6L731.8 420.4L731.3 417.1L730.9 413.8L730.6 410.5L730.3 407.2L729.9 403.9L729.3 400.7L728.3 397.5L727.1 394.4L725.5 391.5L723.6 388.8L721.4 386.3L718.9 384.1L716.1 382.3L713.0 380.8L700.0 371.5L697.3 370.3L694.5 369.1L691.7 368.0L689.0 367.0L686.1 366.0L683.3 365.2L680.5 364.5L677.6 363.9L674.7 363.3L671.8 362.8L668.9 362.4L666.0 362.0L663.1 361.7L660.2 361.5L657.2 361.2L654.3 361.0L651.3 360.8L648.4 360.7L645.4 360.5L642.5 360.4L639.5 360.2L636.6 360.0L633.6 359.9L630.7 359.6L627.7 359.4L624.8 359.2L621.9 358.9L618.9 358.6L616.0 358.3L613.1 358.0L610.2 357.6L607.2 357.3L604.3 356.9L601.4 356.4L598.5 356.0L595.6 355.5L592.7 355.0L589.8 354.5L586.9 354.0L584.0 353.4L581.1 352.9L578.2 352.3L575.3 351.7L572.5 351.0L569.6 350.4L566.7 349.8L563.8 349.1L560.9 348.4L558.1 347.7L555.2 347.1L552.3 346.4L549.4 345.7L546.6 345.0L543.7 344.3L540.8 343.6L538.0 342.9L535.1 342.2L532.2 341.5L529.4 340.8L526.5 340.2L523.6 339.5L520.7 338.9L517.9 338.2L515.0 337.6L512.1 337.0L509.2 336.3L506.3 335.7L503.5 335.1L500.6 334.5L497.7 333.9L494.8 333.2L491.9 332.6L489.1 332.0L486.2 331.3L483.3 330.7L480.4 330.0L477.5 329.4L474.6 328.8L471.7 328.2L468.8 327.7L465.9 327.2L463.0 326.8L460.1 326.5L457.2 326.3L454.3 326.2L451.3 326.2L448.4 326.4L445.5 326.7L442.5 327.0L439.6 327.5L436.6 328.0L433.6 328.6L430.7 329.2L427.8 329.8L424.8 330.4L421.9 331.0L419.0 331.6L416.1 332.0L413.2 332.3L410.5 332.3L407.9 331.8L405.4 330.9Z" fill="#f1c48c" stroke="#120c05" stroke-width="1" stroke-linejoin="round" fill-rule="evenodd"/>
<clipPath id="c4"><path d="M406.2 326.4L407.6 324.7L409.2 323.3L411.1 322.0L413.1 321.0L415.3 320.2L417.6 319.4L420.0 318.8L422.5 318.2L425.1 317.6L427.7 317.1L430.2 316.6L432.8 316.1L435.4 315.6L438.0 315.2L440.5 314.8L443.1 314.4L445.6 314.1L448.2 313.8L450.7 313.6L453.3 313.4L455.8 313.3L458.3 313.2L460.8 313.2L463.3 313.2L465.8 313.3L468.4 313.4L470.9 313.6L473.4 313.9L475.9 314.1L478.4 314.4L480.9 314.8L483.4 315.2L485.9 315.6L488.4 316.1L491.0 316.6L493.5 317.1L496.0 317.6L498.5 318.2L501.0 318.8L503.6 319.4L506.1 320.0L508.6 320.6L511.1 321.3L513.7 321.9L516.2 322.5L518.7 323.2L521.3 323.8L523.8 324.4L526.4 325.1L528.9 325.7L531.5 326.3L534.0 326.9L536.6 327.4L539.1 328.0L541.7 328.5L544.3 329.0L546.9 329.5L549.4 329.8L564.0 333.6L564.3 335.2L552.0 334.1L550.4 339.9L592.4 350.4L590.6 342.5L590.8 340.2L604.1 343.2L605.7 343.8L607.6 344.5L609.5 345.0L611.4 345.5L613.3 346.0L615.2 346.4L617.1 346.8L619.0 347.2L621.0 347.5L622.9 347.8L624.8 348.0L626.8 348.2L628.7 348.4L630.7 348.5L632.6 348.6L634.6 348.6L636.6 348.6L638.5 348.6L640.5 348.6L642.4 348.5L644.4 348.4L646.3 348.2L648.3 348.0L650.2 347.8L652.1 347.6L654.0 347.3L655.8 347.0L689.0 365.7L687.1 365.0L684.1 364.2L681.2 363.5L678.3 362.8L675.3 362.2L672.3 361.7L669.4 361.3L666.4 360.9L663.4 360.6L660.5 360.3L657.5 360.1L654.5 359.9L651.5 359.7L648.6 359.5L645.6 359.4L642.7 359.2L639.7 359.1L636.8 358.9L633.9 358.7L630.9 358.5L628.0 358.3L625.1 358.1L622.2 357.8L619.3 357.5L616.4 357.2L613.5 356.9L610.6 356.5L607.7 356.1L604.8 355.8L601.9 355.3L599.0 354.9L596.1 354.4L593.3 354.0L590.4 353.4L587.5 352.9L584.6 352.4L581.8 351.8L578.9 351.2L576.0 350.6L573.1 350.0L570.3 349.4L567.4 348.7L564.5 348.0L561.7 347.4L558.8 346.7L555.9 346.0L553.1 345.3L550.2 344.6L547.3 343.9L544.5 343.2L541.6 342.5L538.7 341.9L535.8 341.2L533.0 340.5L530.1 339.8L527.2 339.1L524.3 338.5L521.4 337.8L518.6 337.2L515.7 336.5L512.8 335.9L509.9 335.3L507.0 334.7L504.1 334.0L501.3 333.4L498.4 332.8L495.5 332.2L492.6 331.6L489.8 330.9L486.9 330.3L484.0 329.6L481.1 329.0L478.2 328.4L475.3 327.7L472.3 327.1L469.4 326.6L466.4 326.1L463.4 325.7L460.4 325.4L457.4 325.2L454.3 325.1L451.2 325.1L448.2 325.3L445.1 325.5L442.0 325.9L439.0 326.4L436.0 327.0L433.0 327.5L430.0 328.1L427.1 328.8L424.2 329.4L421.3 330.0L418.4 330.5L415.6 330.9L413.1 331.2L410.8 331.1L408.7 330.8L407.0 330.1L405.6 328.4ZM700.3 338.3L766.6 375.4L752.6 399.6L702.4 371.4L701.4 370.7L700.2 370.2L658.1 346.6ZM750.9 402.5L750.1 404.5L749.7 406.5L749.5 408.5L749.5 410.5L749.6 412.4L749.9 414.3L750.4 416.2L750.9 418.0L751.6 419.8L752.4 421.6L753.3 423.4L754.2 425.1L755.2 426.8L756.3 428.5L757.4 430.2L758.5 431.9L759.6 433.5L760.7 435.1L761.8 436.7L762.9 438.3L763.9 439.8L764.9 441.4L765.7 442.7L765.5 443.1L764.5 442.1L761.6 437.0L756.1 433.4L748.8 435.5L747.9 440.0L765.0 465.1L777.5 465.1L777.5 458.1L780.1 462.9L782.0 465.4L784.0 467.8L786.1 470.3L788.3 472.8L790.6 475.3L792.9 477.8L795.1 480.4L797.4 483.0L799.6 485.7L801.7 488.4L803.6 491.1L805.3 493.9L806.9 496.8L808.2 499.7L809.2 502.6L810.0 505.6L810.4 508.7L810.4 511.8L810.2 515.0L809.7 518.2L808.9 521.4L808.0 524.6L806.9 527.8L805.7 531.0L804.5 534.1L803.2 537.1L801.9 540.1L800.4 542.8L798.5 545.3L796.2 547.5L793.5 549.3L790.6 550.7L787.9 551.3L785.5 551.3L783.2 550.6L780.9 548.9L779.5 546.5L779.5 544.2L780.9 541.9L783.3 539.5L786.1 536.9L788.5 534.0L789.7 530.9L789.9 527.6L789.4 524.4L788.4 521.4L787.1 518.4L785.6 515.4L783.8 512.6L782.0 509.7L780.0 506.9L778.0 504.1L776.1 501.4L774.3 498.6L772.6 495.7L771.0 492.9L769.4 490.0L767.9 487.1L766.5 484.2L765.0 481.3L763.4 478.4L761.8 475.6L760.1 472.7L758.4 469.9L756.6 467.1L754.8 464.3L753.0 461.5L751.3 458.7L749.5 455.9L747.8 453.1L746.1 450.3L744.4 447.4L742.8 444.5L741.3 441.6L739.9 438.7L738.6 435.7L737.4 432.7L736.3 429.6L735.3 426.5L734.5 423.4L733.8 420.2L733.2 417.0L732.8 413.8L732.6 410.5L732.3 407.1L731.9 403.8L731.2 400.5L730.3 397.2L729.0 394.1L727.3 391.1L725.4 388.3L723.1 385.8L720.4 383.5L719.1 382.6L751.8 400.9ZM714.4 380.0L713.9 379.6L715.4 380.5Z" clip-rule="evenodd"/></clipPath>
<g clip-path="url(#c4)">
<path d="M406.2 326.4L407.6 324.7L409.2 323.3L411.1 322.0L413.1 321.0L415.3 320.2L417.6 319.4L420.0 318.8L422.5 318.2L425.1 317.6L427.7 317.1L430.2 316.6L432.8 316.1L435.4 315.6L438.0 315.2L440.5 314.8L443.1 314.4L445.6 314.1L448.2 313.8L450.7 313.6L453.3 313.4L455.8 313.3L458.3 313.2L460.8 313.2L463.3 313.2L465.8 313.3L468.4 313.4L470.9 313.6L473.4 313.9L475.9 314.1L478.4 314.4L480.9 314.8L483.4 315.2L485.9 315.6L488.4 316.1L491.0 316.6L493.5 317.1L496.0 317.6L498.5 318.2L501.0 318.8L503.6 319.4L506.1 320.0L508.6 320.6L511.1 321.3L513.7 321.9L516.2 322.5L518.7 323.2L521.3 323.8L523.8 324.4L526.4 325.1L528.9 325.7L531.5 326.3L534.0 326.9L536.6 327.4L539.1 328.0L541.7 328.5L544.3 329.0L546.9 329.5L549.4 329.8L564.0 333.6L564.3 335.2L552.0 334.1L550.4 339.9L592.4 350.4L590.6 342.5L590.8 340.2L604.1 343.2L605.7 343.8L607.6 344.5L609.5 345.0L611.4 345.5L613.3 346.0L615.2 346.4L617.1 346.8L619.0 347.2L621.0 347.5L622.9 347.8L624.8 348.0L626.8 348.2L628.7 348.4L630.7 348.5L632.6 348.6L634.6 348.6L636.6 348.6L638.5 348.6L640.5 348.6L642.4 348.5L644.4 348.4L646.3 348.2L648.3 348.0L650.2 347.8L652.1 347.6L654.0 347.3L655.8 347.0L689.0 365.7L687.1 365.0L684.1 364.2L681.2 363.5L678.3 362.8L675.3 362.2L672.3 361.7L669.4 361.3L666.4 360.9L663.4 360.6L660.5 360.3L657.5 360.1L654.5 359.9L651.5 359.7L648.6 359.5L645.6 359.4L642.7 359.2L639.7 359.1L636.8 358.9L633.9 358.7L630.9 358.5L628.0 358.3L625.1 358.1L622.2 357.8L619.3 357.5L616.4 357.2L613.5 356.9L610.6 356.5L607.7 356.1L604.8 355.8L601.9 355.3L599.0 354.9L596.1 354.4L593.3 354.0L590.4 353.4L587.5 352.9L584.6 352.4L581.8 351.8L578.9 351.2L576.0 350.6L573.1 350.0L570.3 349.4L567.4 348.7L564.5 348.0L561.7 347.4L558.8 346.7L555.9 346.0L553.1 345.3L550.2 344.6L547.3 343.9L544.5 343.2L541.6 342.5L538.7 341.9L535.8 341.2L533.0 340.5L530.1 339.8L527.2 339.1L524.3 338.5L521.4 337.8L518.6 337.2L515.7 336.5L512.8 335.9L509.9 335.3L507.0 334.7L504.1 334.0L501.3 333.4L498.4 332.8L495.5 332.2L492.6 331.6L489.8 330.9L486.9 330.3L484.0 329.6L481.1 329.0L478.2 328.4L475.3 327.7L472.3 327.1L469.4 326.6L466.4 326.1L463.4 325.7L460.4 325.4L457.4 325.2L454.3 325.1L451.2 325.1L448.2 325.3L445.1 325.5L442.0 325.9L439.0 326.4L436.0 327.0L433.0 327.5L430.0 328.1L427.1 328.8L424.2 329.4L421.3 330.0L418.4 330.5L415.6 330.9L413.1 331.2L410.8 331.1L408.7 330.8L407.0 330.1L405.6 328.4ZM700.3 338.3L766.6 375.4L752.6 399.6L702.4 371.4L701.4 370.7L700.2 370.2L658.1 346.6ZM750.9 402.5L750.1 404.5L749.7 406.5L749.5 408.5L749.5 410.5L749.6 412.4L749.9 414.3L750.4 416.2L750.9 418.0L751.6 419.8L752.4 421.6L753.3 423.4L754.2 425.1L755.2 426.8L756.3 428.5L757.4 430.2L758.5 431.9L759.6 433.5L760.7 435.1L761.8 436.7L762.9 438.3L763.9 439.8L764.9 441.4L765.7 442.7L765.5 443.1L764.5 442.1L761.6 437.0L756.1 433.4L748.8 435.5L747.9 440.0L765.0 465.1L777.5 465.1L777.5 458.1L780.1 462.9L782.0 465.4L784.0 467.8L786.1 470.3L788.3 472.8L790.6 475.3L792.9 477.8L795.1 480.4L797.4 483.0L799.6 485.7L801.7 488.4L803.6 491.1L805.3 493.9L806.9 496.8L808.2 499.7L809.2 502.6L810.0 505.6L810.4 508.7L810.4 511.8L810.2 515.0L809.7 518.2L808.9 521.4L808.0 524.6L806.9 527.8L805.7 531.0L804.5 534.1L803.2 537.1L801.9 540.1L800.4 542.8L798.5 545.3L796.2 547.5L793.5 549.3L790.6 550.7L787.9 551.3L785.5 551.3L783.2 550.6L780.9 548.9L779.5 546.5L779.5 544.2L780.9 541.9L783.3 539.5L786.1 536.9L788.5 534.0L789.7 530.9L789.9 527.6L789.4 524.4L788.4 521.4L787.1 518.4L785.6 515.4L783.8 512.6L782.0 509.7L780.0 506.9L778.0 504.1L776.1 501.4L774.3 498.6L772.6 495.7L771.0 492.9L769.4 490.0L767.9 487.1L766.5 484.2L765.0 481.3L763.4 478.4L761.8 475.6L760.1 472.7L758.4 469.9L756.6 467.1L754.8 464.3L753.0 461.5L751.3 458.7L749.5 455.9L747.8 453.1L746.1 450.3L744.4 447.4L742.8 444.5L741.3 441.6L739.9 438.7L738.6 435.7L737.4 432.7L736.3 429.6L735.3 426.5L734.5 423.4L733.8 420.2L733.2 417.0L732.8 413.8L732.6 410.5L732.3 407.1L731.9 403.8L731.2 400.5L730.3 397.2L729.0 394.1L727.3 391.1L725.4 388.3L723.1 385.8L720.4 383.5L719.1 382.6L751.8 400.9ZM714.4 380.0L713.9 379.6L715.4 380.5Z" fill="#a47647" fill-rule="evenodd"/>
<path d="M689.0 365.7L655.8 347.0L655.8 350.0L689.0 368.7ZM564.3 335.2L564.0 333.6L564.0 336.6L564.3 338.2ZM766.6 375.4L700.3 338.3L700.3 341.3L766.6 378.4ZM751.8 400.9L719.1 382.6L719.1 385.6L751.8 403.9ZM810.4 511.8L810.4 508.7L810.0 505.6L809.2 502.6L808.2 499.7L806.9 496.8L805.3 493.9L803.6 491.1L801.7 488.4L799.6 485.7L797.4 483.0L795.1 480.4L792.9 477.8L790.6 475.3L788.3 472.8L786.1 470.3L784.0 467.8L782.0 465.4L780.1 462.9L777.5 458.1L777.5 461.1L780.1 465.9L782.0 468.4L784.0 470.8L786.1 473.3L788.3 475.8L790.6 478.3L792.9 480.8L795.1 483.4L797.4 486.0L799.6 488.7L801.7 491.4L803.6 494.1L805.3 496.9L806.9 499.8L808.2 502.7L809.2 505.6L810.0 508.6L810.4 511.7L810.4 514.8ZM765.0 465.1L747.9 440.0L747.9 443.0L765.0 468.1ZM765.7 442.7L764.9 441.4L763.9 439.8L762.9 438.3L761.8 436.7L760.7 435.1L759.6 433.5L758.5 431.9L757.4 430.2L756.3 428.5L755.2 426.8L754.2 425.1L753.3 423.4L752.4 421.6L751.6 419.8L750.9 418.0L750.4 416.2L749.9 414.3L749.6 412.4L749.5 410.5L749.5 413.5L749.6 415.4L749.9 417.3L750.4 419.2L750.9 421.0L751.6 422.8L752.4 424.6L753.3 426.4L754.2 428.1L755.2 429.8L756.3 431.5L757.4 433.2L758.5 434.9L759.6 436.5L760.7 438.1L761.8 439.7L762.9 441.3L763.9 442.8L764.9 444.4L765.7 445.7ZM715.4 380.5L713.9 379.6L713.9 382.6L715.4 383.5Z" fill="#8f6439" stroke="#8f6439" stroke-width=".6"/><path d="M655.8 347.0L654.0 347.3L652.1 347.6L650.2 347.8L648.3 348.0L646.3 348.2L644.4 348.4L644.4 351.4L646.3 351.2L648.3 351.0L650.2 350.8L652.1 350.6L654.0 350.3L655.8 350.0ZM453.3 313.4L450.7 313.6L448.2 313.8L445.6 314.1L443.1 314.4L440.5 314.8L438.0 315.2L435.4 315.6L432.8 316.1L430.2 316.6L427.7 317.1L425.1 317.6L425.1 320.6L427.7 320.1L430.2 319.6L432.8 319.1L435.4 318.6L438.0 318.2L440.5 317.8L443.1 317.4L445.6 317.1L448.2 316.8L450.7 316.6L453.3 316.4ZM700.3 338.3L658.1 346.6L658.1 349.6L700.3 341.3Z" fill="#b28250" stroke="#b28250" stroke-width=".6"/><path d="M644.4 348.4L642.4 348.5L640.5 348.6L638.5 348.6L636.6 348.6L634.6 348.6L632.6 348.6L630.7 348.5L628.7 348.4L628.7 351.4L630.7 351.5L632.6 351.6L634.6 351.6L636.6 351.6L638.5 351.6L640.5 351.6L642.4 351.5L644.4 351.4ZM468.4 313.4L465.8 313.3L463.3 313.2L460.8 313.2L458.3 313.2L455.8 313.3L453.3 313.4L453.3 316.4L455.8 316.3L458.3 316.2L460.8 316.2L463.3 316.2L465.8 316.3L468.4 316.4ZM777.5 465.1L765.0 465.1L765.0 468.1L777.5 468.1Z" fill="#aa7a4a" stroke="#aa7a4a" stroke-width=".6"/><path d="M628.7 348.4L626.8 348.2L624.8 348.0L622.9 347.8L621.0 347.5L619.0 347.2L617.1 346.8L615.2 346.4L615.2 349.4L617.1 349.8L619.0 350.2L621.0 350.5L622.9 350.8L624.8 351.0L626.8 351.2L628.7 351.4ZM549.4 329.8L546.9 329.5L544.3 329.0L541.7 328.5L539.1 328.0L536.6 327.4L536.6 330.4L539.1 331.0L541.7 331.5L544.3 332.0L546.9 332.5L549.4 332.8ZM496.0 317.6L493.5 317.1L491.0 316.6L488.4 316.1L485.9 315.6L483.4 315.2L480.9 314.8L478.4 314.4L475.9 314.1L473.4 313.9L470.9 313.6L468.4 313.4L468.4 316.4L470.9 316.6L473.4 316.9L475.9 317.1L478.4 317.4L480.9 317.8L483.4 318.2L485.9 318.6L488.4 319.1L491.0 319.6L493.5 320.1L496.0 320.6Z" fill="#a17345" stroke="#a17345" stroke-width=".6"/><path d="M615.2 346.4L613.3 346.0L611.4 345.5L609.5 345.0L607.6 344.5L605.7 343.8L604.1 343.2L590.8 340.2L590.8 343.2L604.1 346.2L605.7 346.8L607.6 347.5L609.5 348.0L611.4 348.5L613.3 349.0L615.2 349.4ZM592.4 350.4L550.4 339.9L550.4 342.9L592.4 353.4ZM564.0 333.6L549.4 329.8L549.4 332.8L564.0 336.6ZM536.6 327.4L534.0 326.9L531.5 326.3L528.9 325.7L526.4 325.1L523.8 324.4L521.3 323.8L518.7 323.2L516.2 322.5L513.7 321.9L511.1 321.3L508.6 320.6L506.1 320.0L503.6 319.4L501.0 318.8L498.5 318.2L496.0 317.6L496.0 320.6L498.5 321.2L501.0 321.8L503.6 322.4L506.1 323.0L508.6 323.6L511.1 324.3L513.7 324.9L516.2 325.5L518.7 326.2L521.3 326.8L523.8 327.4L526.4 328.1L528.9 328.7L531.5 329.3L534.0 329.9L536.6 330.4Z" fill="#986c3f" stroke="#986c3f" stroke-width=".6"/><path d="M590.8 340.2L590.6 342.5L590.6 345.5L590.8 343.2ZM413.1 321.0L411.1 322.0L409.2 323.3L407.6 324.7L406.2 326.4L405.6 328.4L405.6 331.4L406.2 329.4L407.6 327.7L409.2 326.3L411.1 325.0L413.1 324.0ZM789.9 527.6L789.7 530.9L788.5 534.0L786.1 536.9L783.3 539.5L780.9 541.9L779.5 544.2L779.5 546.5L779.5 549.5L779.5 547.2L780.9 544.9L783.3 542.5L786.1 539.9L788.5 537.0L789.7 533.9L789.9 530.6Z" fill="#c4915c" stroke="#c4915c" stroke-width=".6"/><path d="M425.1 317.6L422.5 318.2L420.0 318.8L417.6 319.4L415.3 320.2L413.1 321.0L413.1 324.0L415.3 323.2L417.6 322.4L420.0 321.8L422.5 321.2L425.1 320.6Z" fill="#bb8a56" stroke="#bb8a56" stroke-width=".6"/><path d="M689.0 368.7L655.8 350.0M655.8 350.0L654.0 350.3L652.1 350.6L650.2 350.8L648.3 351.0L646.3 351.2L644.4 351.4M644.4 351.4L642.4 351.5L640.5 351.6L638.5 351.6L636.6 351.6L634.6 351.6L632.6 351.6L630.7 351.5L628.7 351.4M628.7 351.4L626.8 351.2L624.8 351.0L622.9 350.8L621.0 350.5L619.0 350.2L617.1 349.8L615.2 349.4M615.2 349.4L613.3 349.0L611.4 348.5L609.5 348.0L607.6 347.5L605.7 346.8L604.1 346.2L590.8 343.2M590.8 343.2L590.6 345.5M592.4 353.4L550.4 342.9M564.3 338.2L564.0 336.6M564.0 336.6L549.4 332.8M549.4 332.8L546.9 332.5L544.3 332.0L541.7 331.5L539.1 331.0L536.6 330.4M536.6 330.4L534.0 329.9L531.5 329.3L528.9 328.7L526.4 328.1L523.8 327.4L521.3 326.8L518.7 326.2L516.2 325.5L513.7 324.9L511.1 324.3L508.6 323.6L506.1 323.0L503.6 322.4L501.0 321.8L498.5 321.2L496.0 320.6M496.0 320.6L493.5 320.1L491.0 319.6L488.4 319.1L485.9 318.6L483.4 318.2L480.9 317.8L478.4 317.4L475.9 317.1L473.4 316.9L470.9 316.6L468.4 316.4M468.4 316.4L465.8 316.3L463.3 316.2L460.8 316.2L458.3 316.2L455.8 316.3L453.3 316.4M453.3 316.4L450.7 316.6L448.2 316.8L445.6 317.1L443.1 317.4L440.5 317.8L438.0 318.2L435.4 318.6L432.8 319.1L430.2 319.6L427.7 320.1L425.1 320.6M425.1 320.6L422.5 321.2L420.0 321.8L417.6 322.4L415.3 323.2L413.1 324.0M413.1 324.0L411.1 325.0L409.2 326.3L407.6 327.7L406.2 329.4L405.6 331.4M405.6 328.4v3.0M689.0 365.7v3.0M655.8 347.0v3.0M590.8 340.2v3.0M590.6 342.5v3.0M592.4 350.4v3.0M550.4 339.9v3.0M564.3 335.2v3.0M564.0 333.6v3.0M766.6 378.4L700.3 341.3M700.3 341.3L658.1 349.6M700.3 338.3v3.0M658.1 346.6v3.0M766.6 375.4v3.0M751.8 403.9L719.1 385.6M789.9 530.6L789.7 533.9L788.5 537.0L786.1 539.9L783.3 542.5L780.9 544.9L779.5 547.2L779.5 549.5M810.4 514.8L810.4 511.7L810.0 508.6L809.2 505.6L808.2 502.7L806.9 499.8L805.3 496.9L803.6 494.1L801.7 491.4L799.6 488.7L797.4 486.0L795.1 483.4L792.9 480.8L790.6 478.3L788.3 475.8L786.1 473.3L784.0 470.8L782.0 468.4L780.1 465.9L777.5 461.1M777.5 468.1L765.0 468.1M765.0 468.1L747.9 443.0M765.7 445.7L764.9 444.4L763.9 442.8L762.9 441.3L761.8 439.7L760.7 438.1L759.6 436.5L758.5 434.9L757.4 433.2L756.3 431.5L755.2 429.8L754.2 428.1L753.3 426.4L752.4 424.6L751.6 422.8L750.9 421.0L750.4 419.2L749.9 417.3L749.6 415.4L749.5 413.5M751.8 400.9v3.0M719.1 382.6v3.0M789.9 527.6v3.0M779.5 546.5v3.0M810.4 511.8v3.0M777.5 458.1v3.0M777.5 465.1v3.0M765.0 465.1v3.0M747.9 440.0v3.0M765.7 442.7v3.0M749.5 410.5v3.0M715.4 383.5L713.9 382.6M715.4 380.5v3.0M713.9 379.6v3.0" stroke="#120c05" stroke-width="0.6" fill="none" stroke-linecap="round"/>
<path d="M552.0 334.1L550.4 339.9L551.2 340.1L550.4 342.9L592.4 353.4L591.7 350.3L592.4 350.4L590.8 343.4L590.8 343.2L604.1 346.2L605.7 346.8L607.6 347.5L609.5 348.0L611.4 348.5L613.3 349.0L615.2 349.4L617.1 349.8L619.0 350.2L621.0 350.5L622.9 350.8L624.8 351.0L626.8 351.2L628.7 351.4L630.7 351.5L632.6 351.6L634.6 351.6L636.6 351.6L638.5 351.6L640.5 351.6L642.4 351.5L644.4 351.4L646.3 351.2L648.3 351.0L650.2 350.8L652.1 350.6L654.0 350.3L655.8 350.0L678.8 362.9L678.3 362.8L675.3 362.2L672.3 361.7L669.4 361.3L666.4 360.9L663.4 360.6L660.5 360.3L657.5 360.1L654.5 359.9L651.5 359.7L648.6 359.5L645.6 359.4L642.7 359.2L639.7 359.1L636.8 358.9L633.9 358.7L630.9 358.5L628.0 358.3L625.1 358.1L622.2 357.8L619.3 357.5L616.4 357.2L613.5 356.9L610.6 356.5L607.7 356.1L604.8 355.8L601.9 355.3L599.0 354.9L596.1 354.4L593.3 354.0L590.4 353.4L587.5 352.9L584.6 352.4L581.8 351.8L578.9 351.2L576.0 350.6L573.1 350.0L570.3 349.4L567.4 348.7L564.5 348.0L561.7 347.4L558.8 346.7L555.9 346.0L553.1 345.3L550.2 344.6L547.3 343.9L544.5 343.2L541.6 342.5L538.7 341.9L535.8 341.2L533.0 340.5L530.1 339.8L527.2 339.1L524.3 338.5L521.4 337.8L518.6 337.2L515.7 336.5L512.8 335.9L509.9 335.3L507.0 334.7L504.1 334.0L501.3 333.4L498.4 332.8L495.5 332.2L492.6 331.6L489.8 330.9L486.9 330.3L484.0 329.6L481.1 329.0L478.2 328.4L475.3 327.7L472.3 327.1L469.4 326.6L466.4 326.1L463.4 325.7L460.4 325.4L457.4 325.2L454.3 325.1L451.2 325.1L448.2 325.3L445.1 325.5L442.0 325.9L439.0 326.4L436.0 327.0L433.0 327.5L430.0 328.1L427.1 328.8L424.2 329.4L421.3 330.0L418.4 330.5L415.6 330.9L413.1 331.2L410.8 331.1L408.7 330.8L407.0 330.1L406.3 329.3L407.6 327.7L409.2 326.3L411.1 325.0L413.1 324.0L415.3 323.2L417.6 322.4L420.0 321.8L422.5 321.2L425.1 320.6L427.7 320.1L430.2 319.6L432.8 319.1L435.4 318.6L438.0 318.2L440.5 317.8L443.1 317.4L445.6 317.1L448.2 316.8L450.7 316.6L453.3 316.4L455.8 316.3L458.3 316.2L460.8 316.2L463.3 316.2L465.8 316.3L468.4 316.4L470.9 316.6L473.4 316.9L475.9 317.1L478.4 317.4L480.9 317.8L483.4 318.2L485.9 318.6L488.4 319.1L491.0 319.6L493.5 320.1L496.0 320.6L498.5 321.2L501.0 321.8L503.6 322.4L506.1 323.0L508.6 323.6L511.1 324.3L513.7 324.9L516.2 325.5L518.7 326.2L521.3 326.8L523.8 327.4L526.4 328.1L528.9 328.7L531.5 329.3L534.0 329.9L536.6 330.4L539.1 331.0L541.7 331.5L544.3 332.0L546.9 332.5L549.4 332.8L555.7 334.4ZM689.0 365.7L687.1 365.0L684.3 364.3L658.1 349.6L659.7 349.2ZM752.6 399.6L702.4 371.4L701.4 370.7L700.2 370.2L662.1 348.8L700.3 341.3L765.3 377.7ZM750.1 404.5L749.7 406.5L749.5 408.5L749.5 410.5L749.5 411.3L749.5 411.5L749.5 413.5L749.6 415.4L749.9 417.3L750.4 419.2L750.9 421.0L751.6 422.8L752.4 424.6L753.3 426.4L754.2 428.1L755.2 429.8L756.3 431.5L757.4 433.2L758.5 434.9L758.6 435.1L756.1 433.4L748.8 435.5L747.9 440.0L748.4 440.6L747.9 443.0L765.0 468.1L777.5 468.1L777.5 465.1L777.5 461.1L780.1 465.9L782.0 468.4L784.0 470.8L786.1 473.3L788.3 475.8L790.6 478.3L792.9 480.8L795.1 483.4L797.4 486.0L799.6 488.7L801.7 491.4L803.6 494.1L805.3 496.9L806.9 499.8L808.2 502.7L809.2 505.6L810.0 508.6L810.4 511.7L810.4 512.3L810.2 515.0L809.7 518.2L808.9 521.4L808.0 524.6L806.9 527.8L805.7 531.0L804.5 534.1L803.2 537.1L801.9 540.1L800.4 542.8L798.5 545.3L796.2 547.5L793.5 549.3L790.6 550.7L787.9 551.3L785.5 551.3L783.2 550.6L780.9 548.9L779.7 546.9L780.9 544.9L783.3 542.5L786.1 539.9L788.5 537.0L789.7 533.9L789.9 530.6L789.8 529.9L789.9 527.6L789.4 524.4L788.4 521.4L787.1 518.4L785.6 515.4L783.8 512.6L782.0 509.7L780.0 506.9L778.0 504.1L776.1 501.4L774.3 498.6L772.6 495.7L771.0 492.9L769.4 490.0L767.9 487.1L766.5 484.2L765.0 481.3L763.4 478.4L761.8 475.6L760.1 472.7L758.4 469.9L756.6 467.1L754.8 464.3L753.0 461.5L751.3 458.7L749.5 455.9L747.8 453.1L746.1 450.3L744.4 447.4L742.8 444.5L741.3 441.6L739.9 438.7L738.6 435.7L737.4 432.7L736.3 429.6L735.3 426.5L734.5 423.4L733.8 420.2L733.2 417.0L732.8 413.8L732.6 410.5L732.3 407.1L731.9 403.8L731.2 400.5L730.3 397.2L729.0 394.1L727.3 391.1L726.2 389.6L750.6 403.2ZM723.1 385.8L720.4 383.5L719.1 382.6L751.8 400.9L751.2 401.8L723.6 386.3ZM713.9 379.6L715.4 380.5L714.4 380.0Z" fill="#fbcf95" stroke="#120c05" stroke-width=".9" fill-rule="evenodd"/>
</g>
<path d="M406.2 326.4L407.6 324.7L409.2 323.3L411.1 322.0L413.1 321.0L415.3 320.2L417.6 319.4L420.0 318.8L422.5 318.2L425.1 317.6L427.7 317.1L430.2 316.6L432.8 316.1L435.4 315.6L438.0 315.2L440.5 314.8L443.1 314.4L445.6 314.1L448.2 313.8L450.7 313.6L453.3 313.4L455.8 313.3L458.3 313.2L460.8 313.2L463.3 313.2L465.8 313.3L468.4 313.4L470.9 313.6L473.4 313.9L475.9 314.1L478.4 314.4L480.9 314.8L483.4 315.2L485.9 315.6L488.4 316.1L491.0 316.6L493.5 317.1L496.0 317.6L498.5 318.2L501.0 318.8L503.6 319.4L506.1 320.0L508.6 320.6L511.1 321.3L513.7 321.9L516.2 322.5L518.7 323.2L521.3 323.8L523.8 324.4L526.4 325.1L528.9 325.7L531.5 326.3L534.0 326.9L536.6 327.4L539.1 328.0L541.7 328.5L544.3 329.0L546.9 329.5L549.4 329.8L564.0 333.6L564.3 335.2L552.0 334.1L550.4 339.9L592.4 350.4L590.6 342.5L590.8 340.2L604.1 343.2L605.7 343.8L607.6 344.5L609.5 345.0L611.4 345.5L613.3 346.0L615.2 346.4L617.1 346.8L619.0 347.2L621.0 347.5L622.9 347.8L624.8 348.0L626.8 348.2L628.7 348.4L630.7 348.5L632.6 348.6L634.6 348.6L636.6 348.6L638.5 348.6L640.5 348.6L642.4 348.5L644.4 348.4L646.3 348.2L648.3 348.0L650.2 347.8L652.1 347.6L654.0 347.3L655.8 347.0L689.0 365.7L687.1 365.0L684.1 364.2L681.2 363.5L678.3 362.8L675.3 362.2L672.3 361.7L669.4 361.3L666.4 360.9L663.4 360.6L660.5 360.3L657.5 360.1L654.5 359.9L651.5 359.7L648.6 359.5L645.6 359.4L642.7 359.2L639.7 359.1L636.8 358.9L633.9 358.7L630.9 358.5L628.0 358.3L625.1 358.1L622.2 357.8L619.3 357.5L616.4 357.2L613.5 356.9L610.6 356.5L607.7 356.1L604.8 355.8L601.9 355.3L599.0 354.9L596.1 354.4L593.3 354.0L590.4 353.4L587.5 352.9L584.6 352.4L581.8 351.8L578.9 351.2L576.0 350.6L573.1 350.0L570.3 349.4L567.4 348.7L564.5 348.0L561.7 347.4L558.8 346.7L555.9 346.0L553.1 345.3L550.2 344.6L547.3 343.9L544.5 343.2L541.6 342.5L538.7 341.9L535.8 341.2L533.0 340.5L530.1 339.8L527.2 339.1L524.3 338.5L521.4 337.8L518.6 337.2L515.7 336.5L512.8 335.9L509.9 335.3L507.0 334.7L504.1 334.0L501.3 333.4L498.4 332.8L495.5 332.2L492.6 331.6L489.8 330.9L486.9 330.3L484.0 329.6L481.1 329.0L478.2 328.4L475.3 327.7L472.3 327.1L469.4 326.6L466.4 326.1L463.4 325.7L460.4 325.4L457.4 325.2L454.3 325.1L451.2 325.1L448.2 325.3L445.1 325.5L442.0 325.9L439.0 326.4L436.0 327.0L433.0 327.5L430.0 328.1L427.1 328.8L424.2 329.4L421.3 330.0L418.4 330.5L415.6 330.9L413.1 331.2L410.8 331.1L408.7 330.8L407.0 330.1L405.6 328.4ZM700.3 338.3L766.6 375.4L752.6 399.6L702.4 371.4L701.4 370.7L700.2 370.2L658.1 346.6ZM750.9 402.5L750.1 404.5L749.7 406.5L749.5 408.5L749.5 410.5L749.6 412.4L749.9 414.3L750.4 416.2L750.9 418.0L751.6 419.8L752.4 421.6L753.3 423.4L754.2 425.1L755.2 426.8L756.3 428.5L757.4 430.2L758.5 431.9L759.6 433.5L760.7 435.1L761.8 436.7L762.9 438.3L763.9 439.8L764.9 441.4L765.7 442.7L765.5 443.1L764.5 442.1L761.6 437.0L756.1 433.4L748.8 435.5L747.9 440.0L765.0 465.1L777.5 465.1L777.5 458.1L780.1 462.9L782.0 465.4L784.0 467.8L786.1 470.3L788.3 472.8L790.6 475.3L792.9 477.8L795.1 480.4L797.4 483.0L799.6 485.7L801.7 488.4L803.6 491.1L805.3 493.9L806.9 496.8L808.2 499.7L809.2 502.6L810.0 505.6L810.4 508.7L810.4 511.8L810.2 515.0L809.7 518.2L808.9 521.4L808.0 524.6L806.9 527.8L805.7 531.0L804.5 534.1L803.2 537.1L801.9 540.1L800.4 542.8L798.5 545.3L796.2 547.5L793.5 549.3L790.6 550.7L787.9 551.3L785.5 551.3L783.2 550.6L780.9 548.9L779.5 546.5L779.5 544.2L780.9 541.9L783.3 539.5L786.1 536.9L788.5 534.0L789.7 530.9L789.9 527.6L789.4 524.4L788.4 521.4L787.1 518.4L785.6 515.4L783.8 512.6L782.0 509.7L780.0 506.9L778.0 504.1L776.1 501.4L774.3 498.6L772.6 495.7L771.0 492.9L769.4 490.0L767.9 487.1L766.5 484.2L765.0 481.3L763.4 478.4L761.8 475.6L760.1 472.7L758.4 469.9L756.6 467.1L754.8 464.3L753.0 461.5L751.3 458.7L749.5 455.9L747.8 453.1L746.1 450.3L744.4 447.4L742.8 444.5L741.3 441.6L739.9 438.7L738.6 435.7L737.4 432.7L736.3 429.6L735.3 426.5L734.5 423.4L733.8 420.2L733.2 417.0L732.8 413.8L732.6 410.5L732.3 407.1L731.9 403.8L731.2 400.5L730.3 397.2L729.0 394.1L727.3 391.1L725.4 388.3L723.1 385.8L720.4 383.5L719.1 382.6L751.8 400.9ZM714.4 380.0L713.9 379.6L715.4 380.5Z" fill="none" stroke="#120c05" stroke-width=".9" stroke-linejoin="round"/>
</svg>
<div id="title"></div>
<svg class="a" style="left:0px;top:0px" width="26" height="30" viewBox="0 0 26 30"><g fill="none" stroke="#da291c" stroke-width="1.65" stroke-linecap="round" stroke-linejoin="round">
      <path d="M10.2 5.6L16.6 5.5C18.3 6.4 17.6 8.6 15.4 10.3C14 11.4 12.7 12.1 11.6 12.5"/>
      <path d="M5.3 15.3L13.2 14.3C14.5 16.4 12.7 19.4 10.3 21.5C8 23.3 5.6 24.2 3.3 24.6L7.8 17.3"/>
      <path d="M22.9 12.2L18.5 12C17 12.2 16 13.4 16.7 14.7L20.6 18C22.2 19.6 22.2 21.4 19.5 22.4L13.6 22.5"/></g></svg>
<span class="t" style="left:28.2px;top:13.0px;font-size:12.4px;font-weight:700;font-style:italic;letter-spacing:0.28px;color:#da291c;">SOLID</span>
<span class="t" style="left:67.6px;top:13.0px;font-size:12.4px;font-weight:400;font-style:italic;letter-spacing:0.00px;color:#da291c;transform:scaleX(0.9136);transform-origin:0 0;-webkit-text-stroke:0;">WORKS</span>
<span class="t" style="left:141.6px;top:12.6px;font-size:12px;font-weight:400;font-style:normal;letter-spacing:0.00px;color:#14141e;transform:scaleX(0.8637);transform-origin:0 0;">File</span>
<span class="t" style="left:175.4px;top:12.6px;font-size:12px;font-weight:400;font-style:normal;letter-spacing:0.00px;color:#14141e;transform:scaleX(0.9285);transform-origin:0 0;">Edit</span>
<span class="t" style="left:211.3px;top:12.6px;font-size:12px;font-weight:400;font-style:normal;letter-spacing:0.00px;color:#14141e;transform:scaleX(0.9460);transform-origin:0 0;">View</span>
<span class="t" style="left:252.6px;top:12.6px;font-size:12px;font-weight:400;font-style:normal;letter-spacing:0.00px;color:#14141e;transform:scaleX(0.9396);transform-origin:0 0;">Insert</span>
<span class="t" style="left:297.0px;top:12.6px;font-size:12px;font-weight:400;font-style:normal;letter-spacing:0.00px;color:#14141e;transform:scaleX(0.9388);transform-origin:0 0;">Tools</span>
<span class="t" style="left:340.2px;top:12.6px;font-size:12px;font-weight:400;font-style:normal;letter-spacing:0.18px;color:#14141e;">Window</span>
<svg class="a" style="left:398px;top:10px" width="14" height="15" viewBox="0 0 14 15"><g transform="rotate(40 7 7)"><path d="M4.2 1h5.6l-1 1.2v3.6l2 2.2H3.2l2-2.2V2.2Z" fill="#8a8a8a"/><path d="M7 8v5.5" stroke="#8a8a8a" stroke-width="1.2"/></g></svg>
<div class="vs" style="left:417px;top:2px;height:32px;background:#c9c9c9"></div>
<svg class="a" style="left:439px;top:8px" width="20" height="20" viewBox="0 0 20 20"><path d="M1.5 10.2L10 2l8.5 8.2" fill="none" stroke="#1d5f94" stroke-width="2.4" stroke-linejoin="miter"/>
      <path d="M4.2 9.5V18.4H15.8V9.5" fill="#fff" stroke="#3b3b3b" stroke-width="1.2"/><path d="M8.4 18.4V12h3.4v6.4" fill="none" stroke="#3b3b3b" stroke-width="1.1"/></svg>
<svg class="a" style="left:471px;top:8px" width="17" height="20" viewBox="0 0 17 20"><path d="M1.5 1.5H10.2L15 6.3V18.5H1.5Z" fill="#fdfdfd" stroke="#4a4a4a" stroke-width="1.2"/><path d="M10.2 1.5V6.3H15" fill="#e4e4e4" stroke="#4a4a4a" stroke-width="1"/></svg>
<svg class="a" style="left:497.5px;top:16px" width="6" height="4" viewBox="0 0 6 4"><path d="M0 0H6L3 3.6Z" fill="#333"/></svg>
<svg class="a" style="left:512px;top:7px" width="22" height="21" viewBox="0 0 22 21"><path d="M1.5 19.5V4.5H7l1.6 2H15v3" fill="#f1f1f1" stroke="#4a4a4a" stroke-width="1.1"/>
      <path d="M1.5 19.5L5.4 9.5H20.6L16.4 19.5Z" fill="#e6e6e6" stroke="#4a4a4a" stroke-width="1.1"/>
      <path d="M9 2.4c4-.6 6.4 1.2 6.8 4.4h2.6l-4 4.6-3.8-4.6h2.4c-.2-1.6-1.6-2.8-4-2.6Z" fill="#3f9c2c" stroke="#2b7a1c" stroke-width=".5"/></svg>
<svg class="a" style="left:542px;top:16px" width="6" height="4" viewBox="0 0 6 4"><path d="M0 0H6L3 3.6Z" fill="#333"/></svg>
<svg class="a" style="left:557px;top:8px" width="20" height="20" viewBox="0 0 20 20"><path d="M1.2 2.6C1.2 1.8 1.8 1.2 2.6 1.2H17.4C18.2 1.2 18.8 1.8 18.8 2.6V17.4C18.8 18.2 18.2 18.8 17.4 18.8H3.4L1.2 16.6Z" fill="#2f77b2" stroke="#174a75" stroke-width="1.1"/>
      <rect x="4.2" y="2.2" width="11.6" height="8.2" fill="#f4f4f4" stroke="#174a75" stroke-width=".6"/><path d="M5.6 4.4h8.8M5.6 6.2h8.8M5.6 8h8.8" stroke="#8a8a8a" stroke-width=".8"/>
      <rect x="6" y="12.6" width="8.4" height="6.2" fill="#dcdcdc" stroke="#174a75" stroke-width=".6"/><rect x="7.4" y="13.6" width="2.6" height="4.4" fill="#333"/></svg>
<svg class="a" style="left:586px;top:16px" width="6" height="4" viewBox="0 0 6 4"><path d="M0 0H6L3 3.6Z" fill="#333"/></svg>
<svg class="a" style="left:601px;top:7px" width="21" height="21" viewBox="0 0 21 21"><rect x="5.2" y="1.6" width="10.6" height="8" fill="#fafafa" stroke="#777" stroke-width="1"/>
      <path d="M1.6 9.4C1.6 8.4 2.4 7.8 3.2 7.8H17.8C18.6 7.8 19.4 8.4 19.4 9.4V15.6H1.6Z" fill="#3f86bd" stroke="#1d5585" stroke-width="1"/>
      <rect x="3.4" y="11" width="14.2" height="1.6" fill="#153e63"/>
      <rect x="4.6" y="14.2" width="11.8" height="5" fill="#f4f4f4" stroke="#666" stroke-width="1"/></svg>
<svg class="a" style="left:630px;top:16px" width="6" height="4" viewBox="0 0 6 4"><path d="M0 0H6L3 3.6Z" fill="#333"/></svg>
<svg class="a" style="left:646px;top:9px" width="18" height="18" viewBox="0 0 18 18"><path d="M1 1.4L1.8 9.6L9.6 7.6L6.6 5.6C10.4 3.8 13.8 6.6 13.4 10.4C13.2 12.6 12.2 14.4 10.6 16C15 14.2 17.4 10.6 16.6 6.8C15.6 2.2 9.4.4 4.4 3.8Z" fill="#2f77b2" stroke="#174a75" stroke-width=".8" stroke-linejoin="round"/></svg>
<svg class="a" style="left:674px;top:16px" width="6" height="4" viewBox="0 0 6 4"><path d="M0 0H6L3 3.6Z" fill="#333"/></svg>
<svg class="a" style="left:690px;top:10px" width="18" height="16" viewBox="0 0 18 16"><g transform="translate(18 0) scale(-1 1)"><path d="M1 .6L1.8 8.8L9.6 6.8L6.6 4.8C10.4 3 13.8 5.8 13.4 9.6C13.2 11.6 12.4 13 11 14.4C15 13 17.2 10 16.6 6C15.6 1.4 9.4-.4 4.4 3Z" fill="#d9d9d9" stroke="#bdbdbd" stroke-width=".8" stroke-linejoin="round"/></g></svg>
<svg class="a" style="left:718px;top:16px" width="6" height="4" viewBox="0 0 6 4"><path d="M0 0H6L3 3.6Z" fill="#b0b0b0"/></svg>
<div class="a" style="left:728px;top:3px;width:43px;height:29px;border:1px solid #a6a6a6;background:#f6f6f6;box-sizing:content-box"></div>
<div class="a" style="left:729px;top:4px;width:29px;height:29px;background:#e3e3e3;border-right:1px solid #a6a6a6"></div>
<svg class="a" style="left:736px;top:7px" width="15" height="21" viewBox="0 0 15 21"><path d="M1.6 1.4V16.2L5.4 12.8L8 18.8L10.6 17.6L8 11.8H13Z" fill="#fff" stroke="#222" stroke-width="1.2" stroke-linejoin="round"/></svg>
<svg class="a" style="left:761.5px;top:16px" width="6" height="4" viewBox="0 0 6 4"><path d="M0 0H6L3 3.6Z" fill="#333"/></svg>
<svg class="a" style="left:781px;top:8px" width="12" height="20" viewBox="0 0 12 20"><rect x="1" y="1" width="10" height="18" rx="5" fill="#2a2a2a"/><circle cx="6" cy="6" r="2.6" fill="#e21b1b"/><circle cx="6" cy="14" r="2.6" fill="#22a022"/></svg>
<svg class="a" style="left:809px;top:8px" width="17" height="20" viewBox="0 0 17 20"><rect x=".8" y=".8" width="15.4" height="18.4" fill="#fdfdfd" stroke="#3a3a3a" stroke-width="1.2"/>
      <g fill="#2f77b2" stroke="#174a75" stroke-width=".5"><rect x="2.8" y="3" width="3.6" height="3"/><rect x="2.8" y="8.4" width="3.6" height="3"/><rect x="2.8" y="13.8" width="3.6" height="3"/></g>
      <path d="M8 4.5h6M8 9.9h6M8 15.3h6" stroke="#444" stroke-width="1"/></svg>
<svg class="a" style="left:838px;top:9px" width="18" height="18" viewBox="0 0 18 18"><path d="M17.13 7.35L17.13 10.65L15.11 10.89L14.66 11.98L15.92 13.59L13.59 15.92L11.99 14.66L10.89 15.11L10.65 17.13L7.35 17.13L7.11 15.11L6.02 14.66L4.41 15.92L2.08 13.59L3.34 11.99L2.89 10.89L0.87 10.65L0.87 7.35L2.89 7.11L3.34 6.02L2.08 4.41L4.41 2.08L6.01 3.34L7.11 2.89L7.35 0.87L10.65 0.87L10.89 2.89L11.98 3.34L13.59 2.08L15.92 4.41L14.66 6.01L15.11 7.11Z" fill="#fafafa" stroke="#4a4a4a" stroke-width="1.1" stroke-linejoin="round"/><circle cx="9" cy="9" r="2.9" fill="#f6f6f6" stroke="#4a4a4a" stroke-width="1.1"/></svg>
<svg class="a" style="left:865.5px;top:16px" width="6" height="4" viewBox="0 0 6 4"><path d="M0 0H6L3 3.6Z" fill="#333"/></svg>
<span class="t" style="left:887.4px;top:12.0px;font-size:12px;font-weight:400;font-style:normal;letter-spacing:0.00px;color:#14141e;transform:scaleX(0.8501);transform-origin:0 0;">ma1.SLDPRT s *</span>
<div class="a" style="left:976px;top:6px;width:201px;height:22px;border:1px solid #c6c6c6;background:#fff;box-sizing:content-box"></div>
<svg class="a" style="left:982px;top:9px" width="15" height="15" viewBox="0 0 15 15"><rect x=".6" y=".6" width="13.8" height="13.8" fill="#1d1d1d" stroke="#000" stroke-width=".8"/><rect x="1.6" y="1.6" width="11.8" height="11.8" fill="none" stroke="#dcdcdc" stroke-width=".7"/><path d="M4 4.2L8 7.4L4 10.6" fill="none" stroke="#fff" stroke-width="1.4"/><path d="M8.4 11h3.4" stroke="#fff" stroke-width="1.2"/></svg>
<span class="t" style="left:1003.7px;top:12.0px;font-size:12px;font-weight:400;font-style:normal;letter-spacing:0.00px;color:#6a6a6a;transform:scaleX(0.9006);transform-origin:0 0;">Search Commands</span>
<svg class="a" style="left:1147px;top:10px" width="15" height="15" viewBox="0 0 15 15"><circle cx="5.6" cy="5.6" r="4.2" fill="none" stroke="#9a9a9a" stroke-width="1.3"/><path d="M8.6 8.8L13.6 13.8" stroke="#9a9a9a" stroke-width="1.8"/></svg>
<svg class="a" style="left:1169px;top:16px" width="6" height="4" viewBox="0 0 6 4"><path d="M0 0H6L3 3.6Z" fill="#8c8c8c"/></svg>
<svg class="a" style="left:1189px;top:8px" width="20" height="20" viewBox="0 0 20 20"><circle cx="10" cy="10" r="8.6" fill="none" stroke="#3c3c3c" stroke-width="1.2"/><circle cx="10" cy="8" r="3.1" fill="none" stroke="#3c3c3c" stroke-width="1.2"/><path d="M4.2 16.2C5 12.8 7.4 11.8 10 11.8S15 12.8 15.8 16.2" fill="none" stroke="#3c3c3c" stroke-width="1.2"/></svg>
<svg class="a" style="left:1225px;top:8px" width="20" height="20" viewBox="0 0 20 20"><circle cx="10" cy="10" r="8.6" fill="none" stroke="#3c3c3c" stroke-width="1.2"/><path d="M7 7.8C7 5.8 8.4 4.8 10 4.8S13 5.8 13 7.6C13 9.6 10 9.8 10 12.2" fill="none" stroke="#3c3c3c" stroke-width="1.7"/><circle cx="10" cy="14.8" r="1.1" fill="#3c3c3c"/></svg>
<div class="a" style="left:1266px;top:21.5px;width:10px;height:2.6px;background:#2b2b2b"></div>
<svg class="a" style="left:1299px;top:10px" width="17" height="16" viewBox="0 0 17 16"><path d="M4.4 4.4V1.2H15.2V10.2H12" fill="none" stroke="#2b2b2b" stroke-width="1.4"/><rect x="1.4" y="5.2" width="10.6" height="9" fill="none" stroke="#2b2b2b" stroke-width="1.4"/></svg>
<svg class="a" style="left:1337px;top:12px" width="13" height="13" viewBox="0 0 13 13"><path d="M1.4 1.4L11.4 11.4M11.4 1.4L1.4 11.4" stroke="#2b2b2b" stroke-width="1.6"/></svg>
<div id="ribbon"></div>
<div class="vs" style="left:59px;top:37px;height:77px;background:#c8c8c8"></div>
<div class="vs" style="left:210px;top:37px;height:77px;background:#c8c8c8"></div>
<div class="vs" style="left:644px;top:37px;height:77px;background:#c8c8c8"></div>
<div class="vs" style="left:715px;top:37px;height:77px;background:#c8c8c8"></div>
<div class="vs" style="left:1165px;top:37px;height:77px;background:#c8c8c8"></div>
<div class="vs" style="left:1229px;top:37px;height:77px;background:#c8c8c8"></div>
<svg class="a" style="left:21px;top:40px" width="21" height="21" viewBox="0 0 21 21"><rect x="4" y="1.2" width="13" height="3.2" fill="#2f7fb5" stroke="#1b1b1b" stroke-width="1"/>
      <path d="M6.6 4.4H14.4V9.4L12.8 11H8.2L6.6 9.4Z" fill="#9fd0ee" stroke="#1b1b1b" stroke-width="1"/>
      <path d="M9.2 11H11.8V13.2L10.5 15.4L9.2 13.2Z" fill="#e9e9e9" stroke="#1b1b1b" stroke-width=".9"/>
      <path d="M14.4 6.4C16.6 7 17 9.4 16.2 11.4L14 13.6" fill="none" stroke="#1b1b1b" stroke-width=".9"/>
      <rect x=".8" y="17" width="19.4" height="3" fill="#2f7fb5" stroke="#1b1b1b" stroke-width="1"/></svg>
<span class="t" style="left:14.5px;top:61.8px;font-size:12px;font-weight:400;font-style:normal;letter-spacing:0.00px;color:#14141e;transform:scaleX(0.9456);transform-origin:0 0;">Define</span>
<span class="t" style="left:9.5px;top:74.8px;font-size:12px;font-weight:400;font-style:normal;letter-spacing:0.00px;color:#14141e;transform:scaleX(0.9480);transform-origin:0 0;">Machine</span>
<svg class="a" style="left:63px;top:39px" width="21" height="21" viewBox="0 0 21 21"><path d="M11.30 12.60L11.30 6.00L13.60 6.00L9.60 0.60L5.60 6.00L7.90 6.00L7.90 12.60Z" fill="#3f8dc2" stroke="#1d4f78" stroke-width=".9" stroke-linejoin="round"/><path d="M9.73 14.29L14.75 13.91L14.92 16.20L20.00 11.80L14.31 8.23L14.49 10.52L9.47 10.91Z" fill="#3f8dc2" stroke="#1d4f78" stroke-width=".9" stroke-linejoin="round"/><path d="M8.57 11.25L3.67 14.98L2.28 13.15L0.40 19.60L7.12 19.51L5.73 17.68L10.63 13.95Z" fill="#3f8dc2" stroke="#1d4f78" stroke-width=".9" stroke-linejoin="round"/><circle cx="9.6" cy="12.6" r="1.9" fill="#3f8dc2"/></svg>
<span class="t" style="left:89.4px;top:42.8px;font-size:12px;font-weight:400;font-style:normal;letter-spacing:0.00px;color:#14141e;transform:scaleX(0.9290);transform-origin:0 0;">Coordinate System</span>
<svg class="a" style="left:63px;top:65px" width="21" height="21" viewBox="0 0 21 21"><path d="M10.5 1L19.8 5.6V15.4L10.5 20L1.2 15.4V5.6Z" fill="#efefef" stroke="#4d4d4d" stroke-width="1"/>
      <path d="M1.2 5.6L10.5 10.2L19.8 5.6M10.5 10.2V20" fill="none" stroke="#6a6a6a" stroke-width=".8"/>
      <path d="M10.5 4.6L15.4 7V10L10.5 12.4L5.6 10V7Z" fill="#5fa9d8" stroke="#174a75" stroke-width=".8"/>
      <path d="M10.5 10.6L17.4 13.4V16L10.5 19L3.6 16V13.4Z" fill="#2f7fb5" stroke="#174a75" stroke-width=".8"/>
      <path d="M5.6 7L10.5 9.4L15.4 7" fill="none" stroke="#174a75" stroke-width=".7"/></svg>
<span class="t" style="left:89.4px;top:68.8px;font-size:12px;font-weight:400;font-style:normal;letter-spacing:0.00px;color:#14141e;transform:scaleX(0.9442);transform-origin:0 0;">Stock Manager</span>
<svg class="a" style="left:65px;top:91px" width="16" height="21" viewBox="0 0 16 21"><path d="M7.4 1V11.4" stroke="#1b1b1b" stroke-width="1.6"/>
      <path d="M2.8 10.2H12.2L7.5 17.4Z" fill="#3b89bd" stroke="#17456b" stroke-width=".9"/>
      <ellipse cx="8" cy="16.6" rx="6.8" ry="3" fill="none" stroke="#17507c" stroke-width="1.3"/>
      <path d="M1.4 17.2C3.6 20.6 12.4 20.6 14.8 17.2" fill="none" stroke="#3b89bd" stroke-width="1.2"/></svg>
<span class="t" style="left:89.4px;top:94.6px;font-size:12px;font-weight:400;font-style:normal;letter-spacing:0.00px;color:#14141e;transform:scaleX(0.9120);transform-origin:0 0;">Setup</span>
<svg class="a" style="left:199px;top:99px" width="6" height="4" viewBox="0 0 6 4"><path d="M0 0H6L3 3.6Z" fill="#333"/></svg>
<svg class="a" style="left:236px;top:40px" width="22" height="22" viewBox="0 0 22 22"><path d="M2 6.2L7 1.4H20.6V15.8L15.6 20.6H2Z" fill="#fbfbfb" stroke="#1b1b1b" stroke-width="1.2" stroke-linejoin="round"/>
      <path d="M2 6.2H15.6V20.6M15.6 6.2L20.6 1.4" fill="none" stroke="#1b1b1b" stroke-width="1"/>
      <path d="M2 6.2L7 1.4H13.4L8.6 6.2Z" fill="#8cc4e8" stroke="#174a75" stroke-width=".7"/>
      <path d="M2 6.2H8.6V13.2H2Z" fill="#2f7fb5" stroke="#174a75" stroke-width=".7"/>
      <path d="M8.6 6.2L13.4 1.4V8.4L8.6 13.2Z" fill="#5fa9d8" stroke="#174a75" stroke-width=".7"/>
      <path d="M15.6 12C17.6 13.6 19.4 12 20.6 9.6V15.8L15.6 20.6Z" fill="#d0d0d0" stroke="none"/></svg>
<span class="t" style="left:230.2px;top:61.8px;font-size:12px;font-weight:400;font-style:normal;letter-spacing:0.00px;color:#14141e;transform:scaleX(0.8971);transform-origin:0 0;">Extract</span>
<span class="t" style="left:217.3px;top:74.8px;font-size:12px;font-weight:400;font-style:normal;letter-spacing:0.00px;color:#14141e;transform:scaleX(0.9630);transform-origin:0 0;">Machinable</span>
<span class="t" style="left:225.6px;top:87.8px;font-size:12px;font-weight:400;font-style:normal;letter-spacing:0.00px;color:#14141e;transform:scaleX(0.9017);transform-origin:0 0;">Features</span>
<svg class="a" style="left:303px;top:40px" width="20" height="22" viewBox="0 0 20 22"><path d="M2.2 1.4H13.4V18.4H2.2Z" fill="#f4f4f4" stroke="#c9c9c9" stroke-width="1.2"/><path d="M4.4 4.6h6.8M4.4 7.2h6.8M4.4 9.8h6.8M4.4 12.4h5" stroke="#dedede" stroke-width="1"/>
      <path d="M14.6 2.4H17.4V15H19.4L16 20L12.6 15H14.6Z" fill="#efefef" stroke="#c9c9c9" stroke-width="1"/></svg>
<span class="t" style="left:290.7px;top:61.8px;font-size:12px;font-weight:400;font-style:normal;letter-spacing:0.00px;color:#b8b8c2;transform:scaleX(0.9154);transform-origin:0 0;">Generate</span>
<span class="t" style="left:288.0px;top:74.8px;font-size:12px;font-weight:400;font-style:normal;letter-spacing:-0.12px;color:#b8b8c2;">Operation</span>
<span class="t" style="left:302.6px;top:87.8px;font-size:12px;font-weight:400;font-style:normal;letter-spacing:0.00px;color:#b8b8c2;transform:scaleX(0.8785);transform-origin:0 0;">Plan</span>
<svg class="a" style="left:363px;top:40px" width="20" height="22" viewBox="0 0 20 22"><path d="M2.4 3C2.4 1.8 7.2 1.8 7.2 3V14.4L4.8 17L2.4 14.4Z" fill="#ececec" stroke="#c9c9c9" stroke-width="1.2"/>
      <path d="M6 18.6C8.4 20 9.4 18.6 10.4 15L11.8 10.8C12.4 9.4 13.8 9.6 13.6 11.2L12.4 17C12.2 18.8 13.8 19 14.4 17.4L16.2 11C16.8 9.6 18.4 9.8 18 11.6L16.8 18.4" fill="none" stroke="#c9c9c9" stroke-width="1.5"/></svg>
<span class="t" style="left:350.3px;top:61.8px;font-size:12px;font-weight:400;font-style:normal;letter-spacing:0.00px;color:#b8b8c2;transform:scaleX(0.9234);transform-origin:0 0;">Generate</span>
<span class="t" style="left:350.3px;top:74.8px;font-size:12px;font-weight:400;font-style:normal;letter-spacing:-0.01px;color:#b8b8c2;">Toolpath</span>
<svg class="a" style="left:419px;top:39px" width="22" height="23" viewBox="0 0 22 23"><path d="M1.4 9.4L11 5L20.6 9.4V15.4L11 21.4L1.4 15.4Z" fill="#f0f0f0" stroke="#c9c9c9" stroke-width="1.2" stroke-linejoin="round"/>
      <path d="M5.4 10.8L11 8.2L16.6 10.8V13.6L11 16.6L5.4 13.6Z" fill="#e4e4e4" stroke="#c9c9c9" stroke-width="1"/>
      <path d="M8.4 1.6H13.6V6H12.4V11.4L11 12.8L9.6 11.4V6H8.4Z" fill="#e9e9e9" stroke="#c9c9c9" stroke-width="1.1"/></svg>
<span class="t" style="left:408.0px;top:61.8px;font-size:12px;font-weight:400;font-style:normal;letter-spacing:0.00px;color:#b8b8c2;transform:scaleX(0.9360);transform-origin:0 0;">Simulate</span>
<span class="t" style="left:407.0px;top:74.8px;font-size:12px;font-weight:400;font-style:normal;letter-spacing:0.02px;color:#b8b8c2;">Toolpath</span>
<svg class="a" style="left:460px;top:39px" width="21" height="21" viewBox="0 0 21 21"><g fill="#e9e9e9" stroke="#c9c9c9" stroke-width="1"><rect x="1.6" y="2" width="17" height="3.4"/><rect x="1.6" y="8.6" width="17" height="3.4"/><rect x="1.6" y="15.4" width="17" height="3.4"/>
      <rect x=".6" y=".8" width="2.4" height="2.4" fill="#fff"/><rect x="17.6" y="5.6" width="2.4" height="2.4" fill="#fff"/><rect x=".6" y="12" width="2.4" height="2.4" fill="#fff"/><rect x="17.6" y="17.4" width="2.4" height="2.4" fill="#fff"/></g></svg>
<span class="t" style="left:486.6px;top:43.0px;font-size:12px;font-weight:400;font-style:normal;letter-spacing:-0.17px;color:#b8b8c2;">Step Thru Toolpath</span>
<svg class="a" style="left:460px;top:65px" width="21" height="21" viewBox="0 0 21 21"><rect x=".8" y=".8" width="19.4" height="19.4" fill="#f1f1f1" stroke="#c9c9c9" stroke-width="1.2"/><rect x="3.2" y="3.2" width="14.6" height="14.6" fill="#e0e0e0" stroke="#dedede" stroke-width=".8"/>
      <text x="10.5" y="13.6" font-family="Liberation Sans" font-weight="700" font-size="7.6" fill="#c4c4c4" text-anchor="middle">CL</text></svg>
<span class="t" style="left:486.6px;top:68.8px;font-size:12px;font-weight:400;font-style:normal;letter-spacing:0.00px;color:#b8b8c2;transform:scaleX(0.8513);transform-origin:0 0;">Save CL File</span>
<svg class="a" style="left:609px;top:40px" width="21" height="21" viewBox="0 0 21 21"><rect x=".8" y=".8" width="19.4" height="19.4" fill="#f1f1f1" stroke="#c9c9c9" stroke-width="1.2"/><rect x="3.2" y="3.2" width="14.6" height="14.6" fill="#e0e0e0" stroke="#dedede" stroke-width=".8"/>
      <text x="10.5" y="13.8" font-family="Liberation Sans" font-weight="700" font-size="8" fill="#c4c4c4" text-anchor="middle">G1</text></svg>
<span class="t" style="left:608.5px;top:61.8px;font-size:12px;font-weight:400;font-style:normal;letter-spacing:0.00px;color:#b8b8c2;transform:scaleX(0.8954);transform-origin:0 0;">Post</span>
<span class="t" style="left:600.5px;top:74.8px;font-size:12px;font-weight:400;font-style:normal;letter-spacing:0.00px;color:#b8b8c2;transform:scaleX(0.8466);transform-origin:0 0;">Process</span>
<svg class="a" style="left:670px;top:41px" width="19" height="20" viewBox="0 0 19 20"><g font-family="Liberation Sans" font-weight="700" font-size="5.4" fill="#c2c2c2"><text x="1" y="5.4">1</text><text x="1" y="12">2</text><text x="1" y="18.6">3</text></g>
      <path d="M6.6 3.4h11.4M6.6 10h11.4M6.6 16.6h11.4" stroke="#cdcdcd" stroke-width="1.1"/></svg>
<span class="t" style="left:669.5px;top:61.8px;font-size:12px;font-weight:400;font-style:normal;letter-spacing:0.00px;color:#b8b8c2;transform:scaleX(0.9178);transform-origin:0 0;">Sort</span>
<span class="t" style="left:651.7px;top:74.8px;font-size:12px;font-weight:400;font-style:normal;letter-spacing:0.00px;color:#b8b8c2;transform:scaleX(0.9676);transform-origin:0 0;">Operations</span>
<svg class="a" style="left:731px;top:40px" width="21" height="21" viewBox="0 0 21 21"><path d="M10.5 1.2L19.4 5.6V15.4L10.5 19.8L1.6 15.4V5.6Z" fill="#f3f3f3" stroke="#c9c9c9" stroke-width="1.2" stroke-linejoin="round"/>
      <path d="M1.6 5.6L10.5 10L19.4 5.6M10.5 10V19.8" fill="none" stroke="#c9c9c9" stroke-width="1"/><path d="M12.4 10.8L17.6 8.2V14.4L12.4 17Z" fill="#dedede" stroke="#c9c9c9" stroke-width=".8"/></svg>
<span class="t" style="left:722.5px;top:61.8px;font-size:12px;font-weight:400;font-style:normal;letter-spacing:0.00px;color:#b8b8c2;transform:scaleX(0.9213);transform-origin:0 0;">Feature</span>
<svg class="a" style="left:738.6px;top:102px" width="6" height="4" viewBox="0 0 6 4"><path d="M0 0H6L3 3.6Z" fill="#9a9a9a"/></svg>
<svg class="a" style="left:790px;top:40px" width="20" height="21" viewBox="0 0 20 21"><path d="M1.4 7.4V19.4H18.6V7.4H15.6V16.4H4.4V7.4Z" fill="#fdfdfd" stroke="#1b1b1b" stroke-width="1.2"/>
      <path d="M6.2 1H9.6V11C9.6 12.6 6.2 12.6 6.2 11Z" fill="#2f7fb5" stroke="#17507c" stroke-width=".9"/><path d="M10.6 13.4H14.6" stroke="#2f7fb5" stroke-width="1.4"/></svg>
<span class="t" style="left:781.4px;top:61.8px;font-size:12px;font-weight:400;font-style:normal;letter-spacing:0.00px;color:#14141e;transform:scaleX(0.8805);transform-origin:0 0;">2.5 Axis</span>
<span class="t" style="left:790.9px;top:74.8px;font-size:12px;font-weight:400;font-style:normal;letter-spacing:-0.13px;color:#14141e;">Mill</span>
<span class="t" style="left:771.9px;top:87.8px;font-size:12px;font-weight:400;font-style:normal;letter-spacing:0.00px;color:#14141e;transform:scaleX(0.9642);transform-origin:0 0;">Operations</span>
<svg class="a" style="left:857px;top:40px" width="21" height="21" viewBox="0 0 21 21"><path d="M1.2 1.4H6V11L10.5 15.4L15 11V1.4H19.8V19.4H1.2Z" fill="#fdfdfd" stroke="#1b1b1b" stroke-width="1.2"/>
      <path d="M15 11L19.8 19.4H10.5Z" fill="#d2d2d2" opacity=".7"/>
      <path d="M10.5 1V5.2" stroke="#d8202a" stroke-width="1.6"/><path d="M10.5 6.8V11.6" stroke="#2f7fb5" stroke-width="1.6"/></svg>
<span class="t" style="left:856.6px;top:61.8px;font-size:12px;font-weight:400;font-style:normal;letter-spacing:0.00px;color:#14141e;transform:scaleX(0.9238);transform-origin:0 0;">Hole</span>
<span class="t" style="left:840.8px;top:74.8px;font-size:12px;font-weight:400;font-style:normal;letter-spacing:-0.15px;color:#14141e;">Machining</span>
<span class="t" style="left:839.8px;top:87.8px;font-size:12px;font-weight:400;font-style:normal;letter-spacing:0.00px;color:#14141e;transform:scaleX(0.9625);transform-origin:0 0;">Operations</span>
<svg class="a" style="left:926px;top:40px" width="20" height="21" viewBox="0 0 20 21"><path d="M1.4 2H6.4C6.4 10.4 10 14.4 18.6 14.6V19.4H1.4Z" fill="#fdfdfd" stroke="#1b1b1b" stroke-width="1.2"/>
      <path d="M8.6 2.4H18.6M9 5.2H18.6M9.8 8H18.6M11.4 10.8H18.6" stroke="#2f7fb5" stroke-width="1.1"/></svg>
<span class="t" style="left:910.0px;top:61.8px;font-size:12px;font-weight:400;font-style:normal;letter-spacing:0.00px;color:#14141e;transform:scaleX(0.9486);transform-origin:0 0;">3 Axis Mill</span>
<span class="t" style="left:908.0px;top:74.8px;font-size:12px;font-weight:400;font-style:normal;letter-spacing:0.00px;color:#14141e;transform:scaleX(0.9574);transform-origin:0 0;">Operations</span>
<svg class="a" style="left:993px;top:40px" width="22" height="21" viewBox="0 0 22 21"><path d="M1.4 1.4C4.4 3.4 5.8 5 6.4 7H10V4.4H20.4V16.6H10V14H6.4C5.8 16 4.4 17.6 1.4 19.6Z" fill="#e6e6e6" stroke="#c9c9c9" stroke-width="1.2" stroke-linejoin="round"/>
      <path d="M13.4 4.4V16.6M16.8 4.4V16.6" stroke="#c9c9c9" stroke-width="1"/><path d="M3 3.4V17.6" stroke="#f6f6f6" stroke-width="1.4"/></svg>
<span class="t" style="left:991.7px;top:61.8px;font-size:12px;font-weight:400;font-style:normal;letter-spacing:-0.01px;color:#b8b8c2;">Turn</span>
<span class="t" style="left:975.8px;top:74.8px;font-size:12px;font-weight:400;font-style:normal;letter-spacing:0.00px;color:#b8b8c2;transform:scaleX(0.9625);transform-origin:0 0;">Operations</span>
<svg class="a" style="left:1001px;top:102px" width="6" height="4" viewBox="0 0 6 4"><path d="M0 0H6L3 3.6Z" fill="#9a9a9a"/></svg>
<svg class="a" style="left:1058px;top:40px" width="21" height="21" viewBox="0 0 21 21"><path d="M1.2 9.4V19.8H19.8V9.4H16.6V16.8H4.4V9.4Z" fill="#8fa3c9" stroke="#4a5f8f" stroke-width="1"/>
      <path d="M7.4 1H13.6V4L12 6.4V12H9V6.4L7.4 4Z" fill="#3a3a3a" stroke="#111" stroke-width=".6"/><circle cx="10.5" cy="14" r="2.4" fill="#d3141c" stroke="#7c0a0e" stroke-width=".6"/>
      <path d="M0 4.2L3 1.8V3.4H6.2V5H3V6.6Z" fill="#111"/><path d="M21 4.2L18 1.8V3.4H14.8V5H18V6.6Z" fill="#111"/></svg>
<span class="t" style="left:1054.7px;top:61.8px;font-size:12px;font-weight:400;font-style:normal;letter-spacing:0.00px;color:#14141e;transform:scaleX(0.9088);transform-origin:0 0;">Probe</span>
<span class="t" style="left:1043.6px;top:74.8px;font-size:12px;font-weight:400;font-style:normal;letter-spacing:-0.07px;color:#14141e;">Operation</span>
<svg class="a" style="left:1121px;top:39px" width="22" height="22" viewBox="0 0 22 22"><g fill="#f3f3f3" stroke="#c9c9c9" stroke-width="1"><rect x="1" y="1.4" width="3.4" height="3.4"/><rect x="6" y="7.6" width="3.4" height="3.4"/><rect x="6" y="14.4" width="3.4" height="3.4"/></g>
      <path d="M2.8 4.8V20.4M2.8 9.2H6M2.8 16H6" fill="none" stroke="#c9c9c9" stroke-width="1"/>
      <path d="M10.8 10.6H20.6V20.6H12L10.8 19.4Z" fill="#e4e4e4" stroke="#c9c9c9" stroke-width="1"/><rect x="12.6" y="11" width="6" height="3.6" fill="#f6f6f6" stroke="#c9c9c9" stroke-width=".6"/><rect x="13.4" y="16.6" width="4.6" height="4" fill="#f1f1f1" stroke="#c9c9c9" stroke-width=".6"/></svg>
<span class="t" style="left:1121.5px;top:61.8px;font-size:12px;font-weight:400;font-style:normal;letter-spacing:0.00px;color:#b8b8c2;transform:scaleX(0.8153);transform-origin:0 0;">Save</span>
<span class="t" style="left:1107.0px;top:74.8px;font-size:12px;font-weight:400;font-style:normal;letter-spacing:-0.12px;color:#b8b8c2;">Operation</span>
<span class="t" style="left:1121.5px;top:87.8px;font-size:12px;font-weight:400;font-style:normal;letter-spacing:0.00px;color:#b8b8c2;transform:scaleX(0.8660);transform-origin:0 0;">Plan</span>
<svg class="a" style="left:1186px;top:39px" width="22" height="22" viewBox="0 0 22 22"><path d="M17.46 3.51L17.46 5.69L16.28 5.46L15.99 6.17L16.99 6.84L15.44 8.39L14.77 7.39L14.06 7.68L14.29 8.86L12.11 8.86L12.34 7.68L11.63 7.39L10.96 8.39L9.41 6.84L10.41 6.17L10.12 5.46L8.94 5.69L8.94 3.51L10.12 3.74L10.41 3.03L9.41 2.36L10.96 0.81L11.63 1.81L12.34 1.52L12.11 0.34L14.29 0.34L14.06 1.52L14.77 1.81L15.44 0.81L16.99 2.36L15.99 3.03L16.28 3.74Z" fill="#3b7fae" stroke="#1c4a6e" stroke-width=".7" stroke-linejoin="round"/><circle cx="13.2" cy="4.6" r="1.3" fill="#f6f6f6" stroke="#1c4a6e" stroke-width=".6"/><path d="M11.26 7.96L11.26 10.44L9.89 10.15L9.55 11.10L10.78 11.76L9.19 13.66L8.32 12.56L7.45 13.06L7.97 14.36L5.53 14.79L5.57 13.39L4.58 13.22L4.14 14.55L2.00 13.31L2.93 12.27L2.28 11.50L1.09 12.23L0.24 9.90L1.63 9.70L1.63 8.70L0.24 8.50L1.09 6.17L2.28 6.90L2.93 6.13L2.00 5.09L4.14 3.85L4.58 5.18L5.57 5.01L5.53 3.61L7.97 4.04L7.45 5.34L8.32 5.84L9.19 4.74L10.78 6.64L9.55 7.30L9.89 8.25Z" fill="#7db9e0" stroke="#2a618c" stroke-width=".7" stroke-linejoin="round"/><circle cx="5.8" cy="9.2" r="1.7" fill="#f6f6f6" stroke="#2a618c" stroke-width=".6"/><path d="M20.48 13.96L20.48 16.44L19.01 16.11L18.66 17.18L20.04 17.77L18.59 19.77L17.60 18.64L16.69 19.31L17.45 20.60L15.10 21.36L14.96 19.87L13.84 19.87L13.70 21.36L11.35 20.60L12.11 19.31L11.20 18.64L10.21 19.77L8.76 17.77L10.14 17.18L9.79 16.11L8.32 16.44L8.32 13.96L9.79 14.29L10.14 13.22L8.76 12.63L10.21 10.63L11.20 11.76L12.11 11.09L11.35 9.80L13.70 9.04L13.84 10.53L14.96 10.53L15.10 9.04L17.45 9.80L16.69 11.09L17.60 11.76L18.59 10.63L20.04 12.63L18.66 13.22L19.01 14.29Z" fill="#4f9bcf" stroke="#1f557f" stroke-width=".7" stroke-linejoin="round"/><circle cx="14.4" cy="15.2" r="1.9" fill="#f6f6f6" stroke="#1f557f" stroke-width=".6"/></svg>
<span class="t" style="left:1178.3px;top:61.8px;font-size:12px;font-weight:400;font-style:normal;letter-spacing:-0.14px;color:#14141e;">Default</span>
<span class="t" style="left:1178.9px;top:74.8px;font-size:12px;font-weight:400;font-style:normal;letter-spacing:0.00px;color:#14141e;transform:scaleX(0.8971);transform-origin:0 0;">Feature</span>
<span class="t" style="left:1172.4px;top:87.8px;font-size:12px;font-weight:400;font-style:normal;letter-spacing:0.00px;color:#14141e;transform:scaleX(0.9273);transform-origin:0 0;">Strategies</span>
<svg class="a" style="left:1252px;top:40px" width="21" height="21" viewBox="0 0 21 21"><path d="M1.6 2.8C1.6 1.2 7 1.2 7 2.8V7.4H1.6Z" fill="#2b6fa6" stroke="#17456b" stroke-width=".8"/><path d="M1.6 7.4H7V11.6L4.3 14.4L1.6 11.6Z" fill="#c79a3c" stroke="#5a430f" stroke-width=".8"/>
      <path d="M4.6 14.6C7 16.4 8.4 15 9.4 12L10.8 7.4C11.4 5.8 13 6 12.8 7.8L11.8 13.6C11.6 15.6 13.2 15.8 13.8 14L15.4 7.6C16 6 17.8 6.2 17.4 8L16.2 14.6" fill="none" stroke="#1f1f1f" stroke-width="1.3"/>
      <path d="M3.4 18.6H17.6" stroke="#1f1f1f" stroke-width="1"/><path d="M1.6 18.6L4 17.2V20ZM19.4 18.6L17 17.2V20Z" fill="#1f1f1f"/><rect x="8.4" y="17.4" width="3.6" height="2.4" fill="#fff" stroke="#1f1f1f" stroke-width=".7"/></svg>
<span class="t" style="left:1239.0px;top:61.8px;font-size:12px;font-weight:400;font-style:normal;letter-spacing:0.00px;color:#14141e;transform:scaleX(0.9379);transform-origin:0 0;">Tolerance</span>
<span class="t" style="left:1248.3px;top:74.8px;font-size:12px;font-weight:400;font-style:normal;letter-spacing:0.00px;color:#14141e;transform:scaleX(0.8611);transform-origin:0 0;">Based</span>
<span class="t" style="left:1236.6px;top:87.8px;font-size:12px;font-weight:400;font-style:normal;letter-spacing:-0.06px;color:#14141e;">Machining</span>
<svg class="a" style="left:1345px;top:57px" width="11" height="9" viewBox="0 0 11 9"><path d="M1 1L4.6 4.5L1 8M5.8 1L9.4 4.5L5.8 8" fill="none" stroke="#3a3a3a" stroke-width="1.1"/></svg>
<svg class="a" style="left:1344px;top:99px" width="12" height="8" viewBox="0 0 12 8"><path d="M1.2 6.8L6 2L10.8 6.8" fill="none" stroke="#1f1f1f" stroke-width="1.9"/></svg>
<div class="tab" style="left:0px;width:57px"></div>
<span class="t" style="left:6.5px;top:122.0px;font-size:12px;font-weight:400;font-style:normal;letter-spacing:0.00px;color:#14141e;transform:scaleX(0.9101);transform-origin:0 0;">Features</span>
<div class="tab" style="left:58px;width:55px"></div>
<span class="t" style="left:68.5px;top:122.0px;font-size:12px;font-weight:400;font-style:normal;letter-spacing:0.00px;color:#14141e;transform:scaleX(0.9322);transform-origin:0 0;">Sketch</span>
<div class="tab" style="left:114px;width:59px"></div>
<span class="t" style="left:122.3px;top:122.0px;font-size:12px;font-weight:400;font-style:normal;letter-spacing:0.00px;color:#14141e;transform:scaleX(0.9207);transform-origin:0 0;">Surfaces</span>
<div class="tab" style="left:174px;width:59px"></div>
<span class="t" style="left:182.3px;top:122.0px;font-size:12px;font-weight:400;font-style:normal;letter-spacing:0.00px;color:#14141e;transform:scaleX(0.9336);transform-origin:0 0;">Evaluate</span>
<div class="tab" style="left:234px;width:132px"></div>
<span class="t" style="left:242.4px;top:122.0px;font-size:12px;font-weight:400;font-style:normal;letter-spacing:0.00px;color:#14141e;transform:scaleX(0.9300);transform-origin:0 0;">SOLIDWORKS Add-Ins</span>
<div class="a" style="left:367px;top:116px;width:126px;height:23px;background:#f6f6f6"></div>
<span class="t" style="left:375.0px;top:122.0px;font-size:12px;font-weight:700;font-style:normal;letter-spacing:0.00px;color:#14141e;transform:scaleX(0.9504);transform-origin:0 0;">SOLIDWORKS CAM</span>
<div class="tab" style="left:493px;width:145px;border-left:1px solid #8e8e8e"></div>
<span class="t" style="left:502.6px;top:122.0px;font-size:12px;font-weight:400;font-style:normal;letter-spacing:0.00px;color:#14141e;transform:scaleX(0.9142);transform-origin:0 0;">SOLIDWORKS CAM TBM</span>
<svg class="a" style="left:1233px;top:124px" width="14" height="15" viewBox="0 0 14 15"><rect x=".7" y=".7" width="12" height="13" fill="#fff" stroke="#b4b4b4" stroke-width="1.2"/><path d="M2.6 7.2L6.4 4.4V10Z" fill="#b4b4b4"/></svg>
<svg class="a" style="left:1259px;top:124px" width="14" height="15" viewBox="0 0 14 15"><rect x=".7" y=".7" width="12" height="13" fill="#fff" stroke="#b4b4b4" stroke-width="1.2"/><path d="M10.8 7.2L7 4.4V10Z" fill="#b4b4b4"/></svg>
<div class="a" style="left:1287px;top:136px;width:10px;height:2px;background:#b4b4b4"></div>
<svg class="a" style="left:1310px;top:124px" width="17" height="15" viewBox="0 0 17 15"><path d="M4.6 4V1H15V9.6H11.8" fill="none" stroke="#b4b4b4" stroke-width="1.3"/><rect x="1.2" y="4.6" width="10.4" height="9" fill="none" stroke="#b4b4b4" stroke-width="1.3"/></svg>
<svg class="a" style="left:1338px;top:126px" width="12" height="12" viewBox="0 0 12 12"><path d="M1 1L11 11M11 1L1 11" stroke="#b4b4b4" stroke-width="1.3"/></svg>
<svg class="a" style="left:505px;top:144px" width="20" height="20" viewBox="0 0 20 20"><path d="M7.4 11.6L1.6 17.4" stroke="#5a9cc8" stroke-width="3.2" stroke-linecap="round"/><path d="M7.4 11.6L1.6 17.4" stroke="#8cc0e2" stroke-width="1.4" stroke-linecap="round"/>
      <circle cx="11.6" cy="7.4" r="6" fill="#eef3f6" stroke="#8e8e8e" stroke-width="1.2"/><path d="M11.6 3.2l1.6 1.8h-3.2zM11.6 11.6l1.6-1.8h-3.2zM7.4 7.4l1.8-1.6v3.2zM15.8 7.4l-1.8-1.6v3.2z" fill="#555"/></svg>
<svg class="a" style="left:530px;top:144px" width="21" height="20" viewBox="0 0 21 20"><path d="M6.2 1H19.4V13" fill="none" stroke="#333" stroke-width="1.1" stroke-dasharray="2.4 1.6"/><path d="M7.4 11.6L1.6 17.4" stroke="#5a9cc8" stroke-width="3.2" stroke-linecap="round"/><path d="M7.4 11.6L1.6 17.4" stroke="#8cc0e2" stroke-width="1.4" stroke-linecap="round"/>
      <circle cx="11.6" cy="7.4" r="6" fill="#eef3f6" stroke="#8e8e8e" stroke-width="1.2"/></svg>
<svg class="a" style="left:557px;top:145px" width="20" height="19" viewBox="0 0 20 19"><path d="M3 11.6L13.4 3.4L16.6 1.6L18.4 4.4L15.4 6.6L7.4 16.6Z" fill="#e9e9e9" stroke="#777" stroke-width="1"/><ellipse cx="5" cy="14.2" rx="3.4" ry="2.4" transform="rotate(-38 5 14.2)" fill="#f6f6f6" stroke="#777" stroke-width="1"/>
      <path d="M8.4 14.4L12.6 11V13.2H19V15.8H12.6V18Z" fill="#2f7fb5"/></svg>
<svg class="a" style="left:583px;top:145px" width="20" height="19" viewBox="0 0 20 19"><path d="M1.4 6.4C1.4 1.2 18.6 1.2 18.6 6.4V15.6C18.6 19 1.4 19 1.4 15.6Z" fill="#e4e4e4" stroke="#666" stroke-width="1"/>
      <path d="M1.4 6.8C3 5.6 5 5 7 4.8V17.6C5 17.6 2.4 17 1.4 15.6Z" fill="#5fa2cf" stroke="#1f557f" stroke-width=".8"/><path d="M18.6 6.8C17 5.6 15 5 13 4.8V17.6C15 17.6 17.6 17 18.6 15.6Z" fill="#5fa2cf" stroke="#1f557f" stroke-width=".8"/>
      <path d="M2 9L6.4 6M2 12L6.4 9M2 15L6.4 12M13.6 9L18 6M13.6 12L18 9M13.6 15L18 12" stroke="#1f557f" stroke-width=".7"/>
      <path d="M7 4.8C8.6 3.6 11.4 3.6 13 4.8V15.4H7Z" fill="#f4f4f4" stroke="#888" stroke-width=".7"/></svg>
<svg class="a" style="left:608px;top:144px" width="21" height="20" viewBox="0 0 21 20"><path d="M3 12.4L13.4 4.2L16.6 2.4L18.4 5.2L15.4 7.4L7.4 17.4Z" fill="#e9e9e9" stroke="#777" stroke-width="1"/><ellipse cx="5" cy="15" rx="3.4" ry="2.4" transform="rotate(-38 5 15)" fill="#f6f6f6" stroke="#777" stroke-width="1"/>
      <path d="M4.4 6.6L10.6.8L9.4 3.8L13 3L6 9.6L7.6 6Z" fill="#f6c21a" stroke="#d9731a" stroke-width=".8"/>
      <text x="10.6" y="19.6" font-family="Liberation Serif" font-weight="700" font-size="12" fill="#3d86bb">A</text></svg>
<svg class="a" style="left:635px;top:144px" width="20" height="20" viewBox="0 0 20 20"><path d="M1.4 6.4L6.4 1.4H18.6V13.6L13.6 18.6H1.4Z" fill="#fdfdfd" stroke="#555" stroke-width="1"/><path d="M13.6 6.4L18.6 1.4M13.6 6.4V18.6" stroke="#555" stroke-width=".9"/>
      <rect x="1.4" y="6.4" width="12.2" height="12.2" fill="#6aaed9" stroke="#1f557f" stroke-width="1"/><path d="M9 4.4h4M11 2.4v3.4M16 8v4M14.6 10h3" stroke="#333" stroke-width=".8"/></svg>
<svg class="a" style="left:662px;top:153px" width="6" height="4" viewBox="0 0 6 4"><path d="M0 0H6L3 3.6Z" fill="#9a9a9a"/></svg>
<svg class="a" style="left:676px;top:143px" width="19" height="21" viewBox="0 0 19 21"><path d="M1.4 5L9.4 1.4L17.6 4V15.6L8.2 19.6L1.4 15.8Z" fill="#fafafa" stroke="#666" stroke-width="1" stroke-linejoin="round"/>
      <path d="M1.4 5L8.2 7.4V19.6L1.4 15.8Z" fill="#5fa2cf" stroke="#1f557f" stroke-width=".8"/><path d="M8.2 7.4L12 6.2V18L8.2 19.6Z" fill="#a9d2ee"/><path d="M1.4 5L9.4 1.4L17.6 4L8.2 7.4Z" fill="#d8ecf8" stroke="#666" stroke-width=".7"/></svg>
<svg class="a" style="left:701.8px;top:153px" width="6" height="4" viewBox="0 0 6 4"><path d="M0 0H6L3 3.6Z" fill="#9a9a9a"/></svg>
<svg class="a" style="left:715px;top:146px" width="21" height="17" viewBox="0 0 21 17"><path d="M1 8.4C5 2.8 15.4 2.4 20 8.4C15.4 14.2 5 14 1 8.4Z" fill="#ededed" stroke="#bdbdbd" stroke-width="1"/><circle cx="10.5" cy="8.2" r="4.2" fill="#8d8d8d"/><circle cx="10.5" cy="8.2" r="2" fill="#555"/><path d="M10.5 .6V16.4" stroke="#707070" stroke-width="1"/></svg>
<svg class="a" style="left:741.8px;top:153px" width="6" height="4" viewBox="0 0 6 4"><path d="M0 0H6L3 3.6Z" fill="#9a9a9a"/></svg>
<svg class="a" style="left:755px;top:143px" width="22" height="22" viewBox="0 0 22 22"><defs><clipPath id="b8.68.6"><circle cx="8.6" cy="8.6" r="7.8"/></clipPath></defs>
      <g clip-path="url(#b8.68.6)"><rect x="0.7999999999999998" y="0.7999999999999998" width="7.8" height="8.8" fill="#3f7fd8"/><rect x="8.6" y="0.7999999999999998" width="7.8" height="8.8" fill="#e2443a"/>
      <path d="M0.7999999999999998 9.6Q8.6 6.6 9.1 9.6L8.6 16.4H0.7999999999999998Z" fill="#43a83c"/><path d="M8.6 9.6Q12.5 7.6 16.4 9.6V16.4H7.6Z" fill="#f0c02c"/>
      <ellipse cx="7.1" cy="4.31" rx="4.68" ry="2.496" fill="#fff" opacity=".45"/></g><circle cx="8.6" cy="8.6" r="7.8" fill="none" stroke="#777" stroke-width=".6"/><path d="M7 20.6L8.4 16.4L16.4 8.2L19.6 11.2L11.4 19.4Z" fill="#f4d23c" stroke="#555" stroke-width=".8"/><path d="M16.4 8.2L18 6.6C19 5.8 21.4 8 20.6 9.2L19.6 11.2Z" fill="#e2443a" stroke="#555" stroke-width=".7"/><path d="M7 20.6L8.4 16.4L11.4 19.4Z" fill="#333"/></svg>
<svg class="a" style="left:780px;top:143px" width="21" height="22" viewBox="0 0 21 22"><defs><clipPath id="b10.68.8"><circle cx="10.6" cy="8.8" r="7.8"/></clipPath></defs>
      <g clip-path="url(#b10.68.8)"><rect x="2.8" y="1.0000000000000009" width="7.8" height="8.8" fill="#3f7fd8"/><rect x="10.6" y="1.0000000000000009" width="7.8" height="8.8" fill="#e2443a"/>
      <path d="M2.8 9.8Q10.6 6.800000000000001 11.1 9.8L10.6 16.6H2.8Z" fill="#43a83c"/><path d="M10.6 9.8Q14.5 7.800000000000001 18.4 9.8V16.6H9.6Z" fill="#f0c02c"/>
      <ellipse cx="9.1" cy="4.510000000000001" rx="4.68" ry="2.496" fill="#fff" opacity=".45"/></g><circle cx="10.6" cy="8.8" r="7.8" fill="none" stroke="#777" stroke-width=".6"/><path d="M1.4 13.4H8M13.4 13.4H19.6V21H1.4V13.4" fill="#3a3a3a"/><g fill="#fff"><rect x="3.6" y="17.4" width="3.6" height="3.6"/><rect x="10.2" y="17.4" width="3.6" height="3.6"/><rect x="16.4" y="17.4" width="3.2" height="3.6"/><rect x="7" y="14.4" width="2" height="2"/></g><g clip-path="none"><defs><clipPath id="b10.68.8"><circle cx="10.6" cy="8.8" r="7.8"/></clipPath></defs>
      <g clip-path="url(#b10.68.8)"><rect x="2.8" y="1.0000000000000009" width="7.8" height="8.8" fill="#3f7fd8"/><rect x="10.6" y="1.0000000000000009" width="7.8" height="8.8" fill="#e2443a"/>
      <path d="M2.8 9.8Q10.6 6.800000000000001 11.1 9.8L10.6 16.6H2.8Z" fill="#43a83c"/><path d="M10.6 9.8Q14.5 7.800000000000001 18.4 9.8V16.6H9.6Z" fill="#f0c02c"/>
      <ellipse cx="9.1" cy="4.510000000000001" rx="4.68" ry="2.496" fill="#fff" opacity=".45"/></g><circle cx="10.6" cy="8.8" r="7.8" fill="none" stroke="#777" stroke-width=".6"/></g></svg>
<svg class="a" style="left:807.6px;top:153px" width="6" height="4" viewBox="0 0 6 4"><path d="M0 0H6L3 3.6Z" fill="#9a9a9a"/></svg>
<svg class="a" style="left:821px;top:145px" width="20" height="18" viewBox="0 0 20 18"><rect x="1" y="1" width="18" height="11.6" fill="#dcdcdc" stroke="#8a8a8a" stroke-width="1.4"/><rect x="2.4" y="2.4" width="15.2" height="5" fill="#ececec"/><path d="M10 12.6V15.6M5.6 16.2H14.4" stroke="#555" stroke-width="1.5"/></svg>
<svg class="a" style="left:847.6px;top:153px" width="6" height="4" viewBox="0 0 6 4"><path d="M0 0H6L3 3.6Z" fill="#9a9a9a"/></svg>
<div class="a" style="left:1338px;top:168px;width:25px;height:143px;background:#d9d9d9;border:1px solid #9c9c9c;border-right:none;box-sizing:content-box"></div>
<div class="a" style="left:1339px;top:192px;width:24px;height:1px;background:#a8a8a8"></div>
<div class="a" style="left:1339px;top:216px;width:24px;height:1px;background:#a8a8a8"></div>
<div class="a" style="left:1339px;top:240px;width:24px;height:1px;background:#a8a8a8"></div>
<div class="a" style="left:1339px;top:264px;width:24px;height:1px;background:#a8a8a8"></div>
<div class="a" style="left:1339px;top:287px;width:24px;height:1px;background:#a8a8a8"></div>
<div class="a" style="left:1339px;top:265px;width:24px;height:22px;background:#f8f8f8"></div>
<svg class="a" style="left:1341px;top:170px" width="20" height="20" viewBox="0 0 20 20"><path d="M1.4 9.6L10 1.6L18.6 9.6" fill="none" stroke="#1d5f94" stroke-width="2.4"/><path d="M4.4 9.4V17.8H15.6V9.4L10 4.4Z" fill="#fff" stroke="#3b3b3b" stroke-width="1.1"/><path d="M8.6 17.8V12.4H11.8V17.8" fill="none" stroke="#3b3b3b" stroke-width="1"/></svg>
<svg class="a" style="left:1343px;top:194px" width="17" height="20" viewBox="0 0 17 20"><g fill="#f4f4f4" stroke="#3b3b3b" stroke-width=".9" stroke-linejoin="round"><path d="M1.4 6L5 3.6V16.6L1.4 18Z"/><path d="M5 3.6L7.4 4.8V18.2L5 16.6Z" fill="#d2d2d2"/>
      <path d="M5.6 5.6L9.2 3V16.4L5.6 18.6Z"/><path d="M9.2 3L11.6 4.2V17.8L9.2 16.4Z" fill="#d2d2d2"/><path d="M9.8 5L13.4 2.4V16L9.8 18.6Z"/><path d="M13.4 2.4L15.8 3.6V17.4L13.4 16Z" fill="#d2d2d2"/></g></svg>
<svg class="a" style="left:1341px;top:219px" width="21" height="19" viewBox="0 0 21 19"><path d="M1.4 17V2H7l1.4 2H14.6V7" fill="#f4f4f4" stroke="#555" stroke-width="1"/><path d="M1.4 17L5.2 7H19.8L15.6 17Z" fill="#e9e9e9" stroke="#555" stroke-width="1"/></svg>
<svg class="a" style="left:1342px;top:243px" width="19" height="19" viewBox="0 0 19 19"><rect x=".8" y=".8" width="17.4" height="17.4" fill="#f6f6f6" stroke="#3b3b3b" stroke-width="1.2"/><g fill="#f2c81e" stroke="#7a5c00" stroke-width=".6"><rect x="3" y="3" width="6.6" height="3.4"/><rect x="12" y="3" width="3.6" height="3.4"/><path d="M3 13.2H6V9.4H3.4V8H11.4V9.4H9V13.2H12V15.6H3Z"/></g><rect x="13.4" y="8.6" width="3" height="8" fill="#9a9a9a" stroke="#555" stroke-width=".5"/></svg>
<svg class="a" style="left:1342px;top:267px" width="18" height="18" viewBox="0 0 18 18"><defs><radialGradient id="sh" cx=".35" cy=".3" r=".8"><stop offset="0" stop-color="#fff" stop-opacity=".7"/><stop offset=".5" stop-color="#fff" stop-opacity="0"/><stop offset="1" stop-color="#000" stop-opacity=".35"/></radialGradient><clipPath id="rb"><circle cx="9" cy="9" r="7.8"/></clipPath></defs>
      <g clip-path="url(#rb)"><rect x="0" y="0" width="9" height="10" fill="#3f7fd8"/><rect x="9" y="0" width="9" height="10" fill="#e2443a"/><path d="M0 10Q8 6 9.4 10L9 18H0Z" fill="#43a83c"/><path d="M9.2 10Q14 8 18 10V18H8.6Z" fill="#f0c02c"/></g><circle cx="9" cy="9" r="7.8" fill="url(#sh)"/></svg>
<svg class="a" style="left:1342px;top:290px" width="19" height="19" viewBox="0 0 19 19"><rect x=".8" y=".8" width="17.4" height="17.4" fill="#fdfdfd" stroke="#3b3b3b" stroke-width="1.2"/><rect x="1.4" y="1.4" width="16.2" height="3.6" fill="#2f7fb5"/>
      <g fill="#2f7fb5"><rect x="3" y="7" width="3.4" height="2.2"/><rect x="3" y="10.8" width="3.4" height="2.2"/><rect x="3" y="14.4" width="3.4" height="2.2"/></g><path d="M8 8.1h8M8 11.9h8M8 15.5h8" stroke="#444" stroke-width="1"/></svg>
<div class="a" style="left:-1px;top:386px;width:5px;height:37px;border:1px solid #6e6e6e;background:#f6f6f6;box-sizing:content-box"></div>
<div class="a" style="left:-3px;top:402px;width:6px;height:5px;border-radius:3px;background:linear-gradient(#e2e2e2,#bdbdbd);border:.5px solid #9a9a9a"></div>
<svg class="a" style="left:0px;top:596px" width="80" height="64" viewBox="0 596 80 64">
      <path d="M36 637L17 646.6" stroke="#1414b4" stroke-width="2.6"/><path d="M15 647.6L22.6 640.6L24.6 646.4Z" fill="#1616c8"/>
      <path d="M36 637L54 645.6" stroke="#a01414" stroke-width="2.6"/><path d="M57.4 647.4L49.4 640.4L47.6 646.2Z" fill="#c81c1c"/>
      <path d="M36 637V619" stroke="#14c814" stroke-width="3"/><path d="M36 611.6L32 620.4H40Z" fill="#1ad01a"/><ellipse cx="36" cy="620.4" rx="4" ry="1.4" fill="#12a812"/>
      <g font-family="Liberation Sans" font-size="7.4" font-weight="400"><text x="33.6" y="607" fill="#22dd22">Y</text><text x="58.6" y="651" fill="#e83a3a">X</text><text x="8.8" y="651" fill="#4a4af0">Z</text></g></svg>
<span class="t" style="left:13.0px;top:677.3px;font-size:13px;font-weight:700;font-style:normal;letter-spacing:1.07px;color:#111;">*Isometric</span>
<div class="a" style="left:0;top:694px;width:1363px;height:9px;background:#f1f1f1"></div>
<div class="a" style="left:0;top:694px;width:65px;height:9px;background:#c6c6c6;border-top:1px solid #6a6a6a"></div>
<div class="a" style="left:15px;top:695px;width:1px;height:8px;background:#e4e4e4"></div>
<div class="a" style="left:31px;top:695px;width:1px;height:8px;background:#e4e4e4"></div>
<div class="a" style="left:47px;top:695px;width:1px;height:8px;background:#e4e4e4"></div>
<svg class="a" style="left:0px;top:696px" width="65" height="7" viewBox="0 0 65 7"><g fill="#adadad"><path d="M10 1L5 6V7H10Z"/><rect x="3" y="1" width="1.4" height="6"/><path d="M26 1L20 7H26Z"/><path d="M37 1L43 7H37Z"/><path d="M52 1L57 6V7H52Z"/><rect x="58" y="1" width="1.4" height="6"/></g></svg>
<div class="a" style="left:65px;top:693px;width:56px;height:10px;background:#f8f8f8"></div>
<span class="t" style="left:78.0px;top:694.6px;font-size:12px;font-weight:700;font-style:normal;letter-spacing:-0.19px;color:#111;">Model</span>
<div class="a" style="left:121px;top:694px;width:68px;height:9px;background:#d4d4d4;border:1px solid #7a7a7a;border-bottom:none;box-sizing:content-box"></div>
<span class="t" style="left:132.6px;top:695.0px;font-size:12px;font-weight:400;font-style:normal;letter-spacing:0.00px;color:#14141e;transform:scaleX(0.9145);transform-origin:0 0;">3D Views</span>
<div class="a" style="left:191px;top:694px;width:106px;height:9px;background:#d4d4d4;border:1px solid #7a7a7a;border-left:none;border-bottom:none;box-sizing:content-box"></div>
<span class="t" style="left:200.0px;top:695.0px;font-size:12px;font-weight:400;font-style:normal;letter-spacing:-0.04px;color:#14141e;">Motion Study 1</span>
<div class="a" style="left:298px;top:694px;width:1065px;height:1px;background:#9a9a9a"></div>
</body></html>
